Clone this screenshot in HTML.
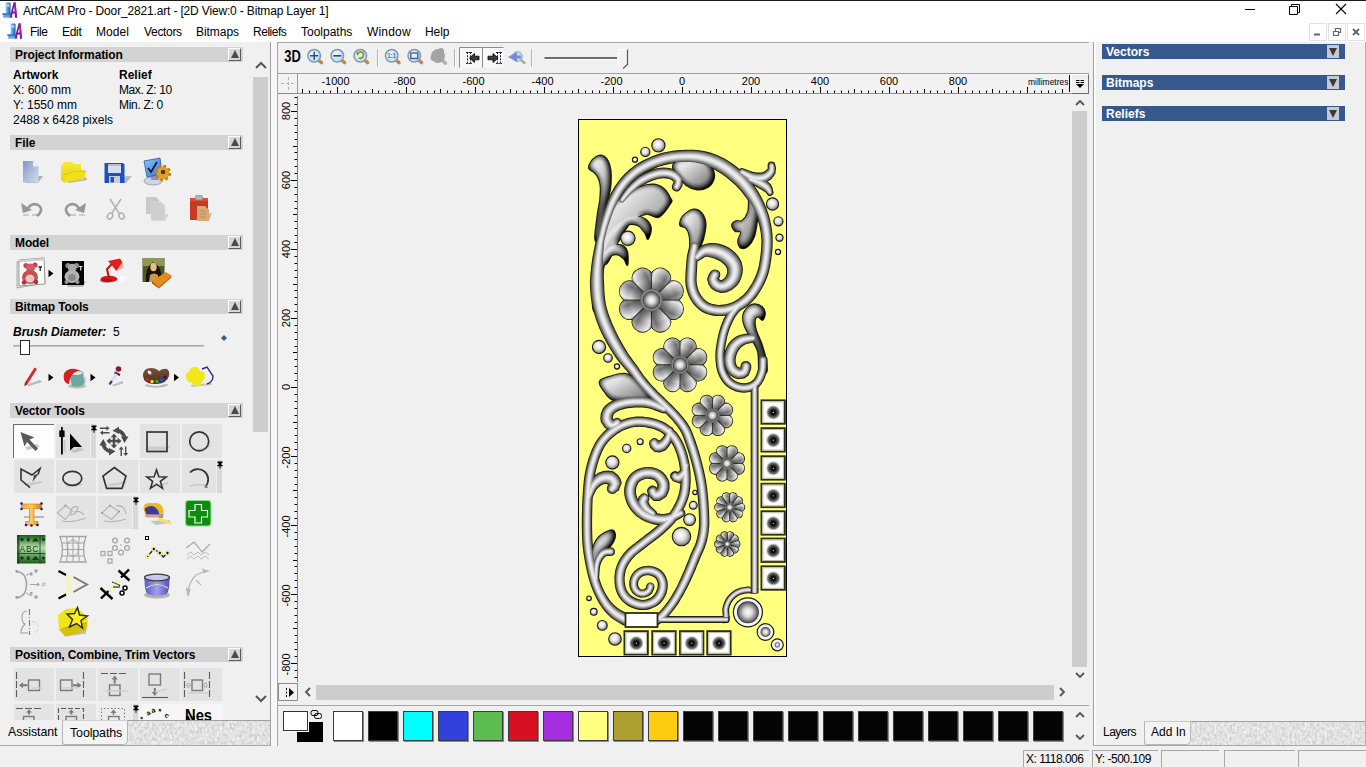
<!DOCTYPE html>
<html>
<head>
<meta charset="utf-8">
<title>ArtCAM Pro</title>
<style>
*{box-sizing:border-box;margin:0;padding:0}
html,body{width:1366px;height:767px;overflow:hidden;background:#f0f0f0;font-family:"Liberation Sans",sans-serif;font-size:12px;color:#000}
.abs{position:absolute}
#app{position:relative;width:1366px;height:767px;overflow:hidden;background:#f0f0f0}
#titlebar{left:0;top:0;width:1366px;height:22px;background:#fff;border-top:1px solid #1a1a1a}
#title{left:23px;top:4px;font-size:12px;white-space:nowrap;letter-spacing:-0.16px;color:#000}
#menubar{left:0;top:22px;width:1366px;height:20px;background:#fff}
.mi{position:absolute;top:25px;font-size:12px;white-space:nowrap}
/* left panel */
#left{left:0;top:42px;width:271px;height:704px;background:#f0f0f0;overflow:hidden}
.hdr{position:absolute;left:10px;width:233px;height:15px;background:#d3d3d3;font-weight:bold;font-size:12px;line-height:17px;padding-left:5px;white-space:nowrap;letter-spacing:-0.12px;overflow:hidden}
.hbtn{position:absolute;left:228px;width:13px;height:13px;background:#d6d6d6;border-top:1px solid #fff;border-left:1px solid #fff;border-right:1px solid #5a5a5a;border-bottom:1px solid #5a5a5a}
.hbtn:after{content:"";position:absolute;left:1.5px;top:1px;border-left:4px solid transparent;border-right:4px solid transparent;border-bottom:8.5px solid #4a4a4a}
.t{position:absolute;white-space:nowrap;font-size:12px}
.b{font-weight:bold}
.cell{position:absolute;width:38px;height:33px;background:#e3e3e3}
.sb{background:#cdcdcd}
.pin{position:absolute;width:5px;background:#d8d8d8}
/* right panel */
.bbar{position:absolute;left:1102px;width:243px;height:15px;background:#36588c;color:#fff;font-weight:bold;font-size:12px;line-height:17px;padding-left:4px;overflow:hidden}
.bbtn{position:absolute;left:1327px;width:12px;height:13px;background:#c3cad6}
.bbtn:after{content:"";position:absolute;left:2px;top:3px;border-left:4px solid transparent;border-right:4px solid transparent;border-top:8px solid #3a3a3a}
.sw{position:absolute;top:711px;width:30px;height:30px;border:1px solid #3c3c3c;box-shadow:1px 1px 0 #8a8a8a}
.stbox{position:absolute;top:750px;height:17px;border-left:1px solid #a8a8a8;border-top:1px solid #a8a8a8;font-size:12px;line-height:16px;padding-left:2px;white-space:nowrap;letter-spacing:-0.5px;overflow:hidden}
</style>
</head>
<body>
<div id="app">

<!-- TITLE BAR -->
<div id="titlebar" class="abs"></div>
<div id="title" class="abs">ArtCAM Pro - Door_2821.art - [2D View:0 - Bitmap Layer 1]</div>
<div id="menubar" class="abs"></div>
<!--APPICON-START-->
<svg width="0" height="0" style="position:absolute"><defs>
<linearGradient id="gMach" x1="0" y1="0" x2="1" y2="0"><stop offset="0" stop-color="#9ad8ec"/><stop offset=".5" stop-color="#3f8fd0"/><stop offset="1" stop-color="#2a5cb0"/></linearGradient>
<symbol id="appicon" viewBox="0 0 16 16">
 <rect x="3.600" y="0.500" width="5" height="12" rx="1.200" fill="url(#gMach)"/>
 <rect x="4.500" y="2.200" width="3" height="2.500" fill="#bfe6f2" opacity=".8"/>
 <rect x="0.300" y="11.200" width="9" height="1.800" fill="#3a78c8"/>
 <rect x="1.300" y="13" width="8" height="2.500" fill="#5aa0e0"/>
 <rect x="0.800" y="14.800" width="10" height="1" fill="#8ac4ee"/>
 <path d="M7.600 15.500 L11.600 0.200 L13.600 0.200 L15.200 15.800 L13 15.800 L12.700 11.500 L10.600 11.500 L9.800 15.500 Z M11 9.500 L12.600 9.500 L12.300 4.200 Z" fill="#7a1a9a" fill-rule="evenodd"/>
 <path d="M11.600 0.200 L13.600 0.200 L15.200 15.800 L14 15.800 Z" fill="#c020a0" opacity=".55"/>
</symbol>
</defs></svg>
<svg class="abs" style="left:2px;top:2px" width="16" height="16"><use href="#appicon"/></svg>
<svg class="abs" style="left:7px;top:23px" width="16" height="16"><use href="#appicon"/></svg>

<!--APPICON-END-->
<div class="mi" style="left:30px;letter-spacing:-0.46px">File</div>
<div class="mi" style="left:62px;letter-spacing:-0.30px">Edit</div>
<div class="mi" style="left:96px;letter-spacing:0.06px">Model</div>
<div class="mi" style="left:144px;letter-spacing:-0.32px">Vectors</div>
<div class="mi" style="left:196px;letter-spacing:-0.05px">Bitmaps</div>
<div class="mi" style="left:253px;letter-spacing:-0.47px">Reliefs</div>
<div class="mi" style="left:301px;letter-spacing:0.00px">Toolpaths</div>
<div class="mi" style="left:367px;letter-spacing:0.18px">Window</div>
<div class="mi" style="left:425px;letter-spacing:-0.05px">Help</div>

<svg class="abs" style="left:1230px;top:0" width="136" height="42" viewBox="0 0 136 42">
 <path d="M15 9.5H25" stroke="#000" stroke-width="1" fill="none"/>
 <path d="M59.5 6.5h8v8h-8z M61.5 6.5v-2h8v8h-2" stroke="#000" stroke-width="1" fill="none"/>
 <path d="M106 4l10 10M116 4l-10 10" stroke="#000" stroke-width="1.1" fill="none"/>
 <g fill="#fff" stroke="#e2e2e2"><rect x="79.5" y="23.5" width="17" height="17"/><rect x="98.500" y="23.5" width="17" height="17"/><rect x="117.5" y="23.5" width="17" height="17"/></g>
 <path d="M84 34.500h6" stroke="#666" stroke-width="2" fill="none"/>
 <path d="M103.500 31.500h5v4h-5z M105.500 31v-2.500h5v4h-2" stroke="#666" stroke-width="1.2" fill="none"/>
 <path d="M123 29l6 6M129 29l-6 6" stroke="#666" stroke-width="1.8" fill="none"/>
</svg>


<!-- LEFT PANEL -->
<div id="left" class="abs">
<!--LEFTCONTENT-->
</div>
<!--LEFTEXTRA-START-->
<div class="hdr" style="top:47px">Project Information</div><div class="hbtn" style="top:48px"></div>
<div class="hdr" style="top:135px">File</div><div class="hbtn" style="top:136px"></div>
<div class="hdr" style="top:235px">Model</div><div class="hbtn" style="top:236px"></div>
<div class="hdr" style="top:299px">Bitmap Tools</div><div class="hbtn" style="top:300px"></div>
<div class="hdr" style="top:403px">Vector Tools</div><div class="hbtn" style="top:404px"></div>
<div class="hdr" style="top:647px">Position, Combine, Trim Vectors</div><div class="hbtn" style="top:648px"></div>
<div class="t b" style="left:13px;top:68px">Artwork</div>
<div class="t b" style="left:119px;top:68px">Relief</div>
<div class="t" style="left:13px;top:83px">X: 600 mm</div>
<div class="t" style="left:119px;top:83px;letter-spacing:-0.4px">Max. Z: 10</div>
<div class="t" style="left:13px;top:98px">Y: 1550 mm</div>
<div class="t" style="left:119px;top:98px;letter-spacing:-0.3px">Min. Z: 0</div>
<div class="t" style="left:13px;top:113px">2488 x 6428 pixels</div>
<div class="t b" style="left:13px;top:325px;font-style:italic">Brush Diameter:</div>
<div class="t" style="left:113px;top:325px">5</div>
<div class="abs" style="left:13px;top:345px;width:191px;height:2px;background:#c4c4c4;border-top:1px solid #aaa"></div>
<div class="abs" style="left:20px;top:340px;width:10px;height:15px;background:#fff;border:1px solid #2a2a2a"></div>
<svg class="abs" style="left:220px;top:334px" width="8" height="8"><path d="M4 1l3 3-3 3-3-3z" fill="#3a5a8a"/></svg>
<!-- left scrollbar -->
<div class="abs sb" style="left:253px;top:77px;width:15px;height:355px"></div>
<svg class="abs" style="left:253px;top:42px" width="16" height="680"><path d="M3 26l5-5 5 5M3 654l5 5 5-5" stroke="#555" stroke-width="2" fill="none"/></svg>

<!--LEFTEXTRA-END-->
<!--ICONS_FILE-START-->
<svg class="abs" style="left:0;top:0" width="271" height="767" viewBox="0 0 271 767">
<defs>
<linearGradient id="gDoc" x1="0" y1="0" x2="1" y2="1"><stop offset="0" stop-color="#7f97c4"/><stop offset=".6" stop-color="#b4c3dc"/><stop offset="1" stop-color="#d4dcea"/></linearGradient>
<linearGradient id="gFold" x1="0" y1="0" x2="0" y2="1"><stop offset="0" stop-color="#f6ea3a"/><stop offset="1" stop-color="#e6cf10"/></linearGradient>
<linearGradient id="gMon" x1="0" y1="0" x2="1" y2="1"><stop offset="0" stop-color="#7fd0f4"/><stop offset="1" stop-color="#3a6fd0"/></linearGradient>
<linearGradient id="gShadow" x1="0" y1="0" x2="1" y2="0"><stop offset="0" stop-color="#9a9a9a"/><stop offset="1" stop-color="#c8c8c8" stop-opacity=".6"/></linearGradient>
</defs>
<!-- new doc -->
<path d="M30 176l13 0-5 7-12 0z" fill="#b0b0b0"/>
<path d="M23 161h10l5.500 5.500v16h-15.500z" fill="url(#gDoc)"/>
<path d="M33 161l5.500 5.500h-5.500z" fill="#e8eef6"/>
<!-- folder -->
<path d="M66 181l20-4 1 3-18 3z" fill="#b4b4b4"/>
<path d="M61 166l3-4h8l2 2h7v6l5 1-2 8-20 3.500-3-3z" fill="url(#gFold)"/>
<path d="M64 175q10-5 22-4l-2 8-20 3.500z" fill="#f2df1c"/>
<path d="M64 175q10-5 22-4" stroke="#d8c000" stroke-width=".8" fill="none"/>
<!-- save -->
<path d="M112 177l20-1-6 7h-14z" fill="#b8b8b8"/>
<path d="M104.500 163h18.500l1.500 1.500v18.500h-20z" fill="#1c50c4"/>
<rect x="108" y="164" width="13" height="9" fill="#d8dfe8"/>
<rect x="108" y="164" width="13" height="2" fill="#b4bdcc"/>
<rect x="109" y="176" width="11" height="7" fill="#c8cdd6"/>
<rect x="110.500" y="177" width="3.500" height="5.500" fill="#1c50c4"/>
<!-- monitor/options -->
<ellipse cx="153" cy="181" rx="9" ry="4" fill="#d0d4e4" stroke="#8890b0" stroke-width=".8"/>
<path d="M151 172h7l1 8h-8z" fill="#8c8cc8"/>
<path d="M144 161l16-3 2 16-15 3z" fill="url(#gMon)" stroke="#3050a0" stroke-width=".8"/>
<path d="M148 168l3 4 6-10" stroke="#101040" stroke-width="1.600" fill="none"/>
<circle cx="163" cy="173" r="6.500" fill="#e0a020"/>
<circle cx="163" cy="173" r="7" fill="none" stroke="#c88010" stroke-width="2.500" stroke-dasharray="3 2.500"/>
<circle cx="163" cy="172" r="2.200" fill="#503000"/>
<!-- undo -->
<path d="M40 215h-8M23 215h6" stroke="#c0c0c0" stroke-width="1.500"/>
<path d="M27 210q4-8 11-5q5 3 2 8l-3 3" stroke="#979797" stroke-width="2.600" fill="none"/>
<path d="M21 203l2 10 9-3z" fill="#979797"/>
<!-- redo -->
<path d="M68 215h8M79 215h6" stroke="#c0c0c0" stroke-width="1.500"/>
<path d="M80 210q-4-8-11-5q-5 3-2 8l3 3" stroke="#979797" stroke-width="2.600" fill="none"/>
<path d="M86 203l-2 10-9-3z" fill="#979797"/>
<!-- scissors -->
<path d="M110 199l9 14M121 199l-9 14" stroke="#b4b4b4" stroke-width="1.600" fill="none"/>
<ellipse cx="110" cy="216" rx="2.500" ry="3.200" fill="none" stroke="#a8a8a8" stroke-width="1.300" transform="rotate(25 110 216)"/>
<ellipse cx="121.500" cy="216" rx="2.500" ry="3.200" fill="none" stroke="#a8a8a8" stroke-width="1.300" transform="rotate(-25 121.500 216)"/>
<!-- copy -->
<path d="M152 216l17-2-4 7h-12z" fill="#d2d2d2"/>
<path d="M146 197h10l3 3v14h-13z" fill="#c9c9c9"/>
<path d="M151 202h10l4 4v14h-14z" fill="#cfcfcf" stroke="#dcdcdc" stroke-width=".6"/>
<!-- paste -->
<path d="M198 216l14-3-3 8h-11z" fill="#b8b8b8"/>
<path d="M190 198h18v22h-18z" fill="#c43c22"/>
<path d="M190 198h18v3h-18z" fill="#d85038"/>
<rect x="195.500" y="195.500" width="7" height="4.500" rx="1" fill="#b0b4bc" stroke="#80848c" stroke-width=".6"/>
<path d="M197 206h8l4 4v11h-12z" fill="#d8a878"/>
<path d="M199 211h7M199 214h7M199 217h7" stroke="#b88858" stroke-width=".8"/>
</svg>

<!--ICONS_FILE-END-->
<!--ICONS_MODEL-START-->
<svg class="abs" style="left:0;top:0" width="271" height="767" viewBox="0 0 271 767">
<defs>
<radialGradient id="gLampSh" cx=".5" cy=".5" r=".5"><stop offset="0" stop-color="#fff"/><stop offset="1" stop-color="#fff" stop-opacity="0"/></radialGradient>
<linearGradient id="gPal" x1="0" y1="0" x2="0" y2="1"><stop offset="0" stop-color="#7a5038"/><stop offset="1" stop-color="#4a3020"/></linearGradient>
</defs>
<!-- bear paper -->
<path d="M17 262l26-4 2 25-28 5z" fill="#e4e4e4" stroke="#9a9a9a" stroke-width=".8"/>
<path d="M19 260l25-2 1 26-26 2z" fill="#fff" stroke="#8c8c8c" stroke-width=".9"/>
<path d="M19 260l25-2v2.500l-25 2z" fill="#d0d0d0"/>
<circle cx="26" cy="265.500" r="2.600" fill="#c04848"/><circle cx="35" cy="265" r="2.600" fill="#c04848"/>
<circle cx="30.500" cy="268" r="4.500" fill="#d06060"/>
<ellipse cx="30" cy="277" rx="8" ry="7" fill="#c85050"/>
<ellipse cx="30" cy="278.500" rx="4.500" ry="4" fill="#f4c4c4"/>
<circle cx="24" cy="282.500" r="2.200" fill="#b03030"/><circle cx="36" cy="282" r="2.200" fill="#b03030"/>
<path d="M38.500 267h3.500M40.200 267v4" stroke="#222" stroke-width="1.300"/>
<path d="M48.500 269.700l5 3.800-5 3.800z" fill="#000"/>
<!-- bw bear -->
<path d="M66 284l20-3-3 6h-15z" fill="#bdbdbd"/>
<rect x="62" y="261" width="22" height="24" fill="#050505"/>
<circle cx="68" cy="265.500" r="2.600" fill="#8e8e8e"/><circle cx="76.500" cy="265.500" r="2.600" fill="#8e8e8e"/>
<circle cx="72.200" cy="268" r="4.300" fill="#a8a8a8"/>
<ellipse cx="72" cy="276.500" rx="7.500" ry="6.500" fill="#b4b4b4"/>
<ellipse cx="72" cy="277.500" rx="3.800" ry="3.500" fill="#8a8a8a"/>
<circle cx="66.500" cy="282" r="2" fill="#9c9c9c"/><circle cx="77.500" cy="282" r="2" fill="#9c9c9c"/>
<path d="M79 266.500h3.500M80.700 266.500v4" stroke="#e0e0e0" stroke-width="1.200"/>
<!-- lamp -->
<ellipse cx="120" cy="279" rx="10" ry="4" fill="url(#gLampSh)"/>
<ellipse cx="109" cy="279" rx="8.500" ry="3.300" fill="#d81818"/>
<ellipse cx="106" cy="280.500" rx="6" ry="2" fill="#901010" opacity=".6"/>
<path d="M109 278l-2-9 5-5" stroke="#c01010" stroke-width="2" fill="none"/>
<path d="M108 261l12-2.500 2.500 4-6 8.500z" fill="#e02020"/>
<path d="M116.500 271l6-8.500 1.500 5z" fill="#f8b0a0"/>
<!-- mona lisa -->
<rect x="142.500" y="258" width="22" height="24" fill="#4e5a22"/>
<rect x="142.500" y="258" width="22" height="8" fill="#8e9858"/>
<path d="M146 282q-1-15 7-20q9 4 9 20z" fill="#1c120a"/>
<ellipse cx="153.500" cy="267" rx="3.200" ry="4.200" fill="#e8c078"/>
<path d="M150 275q4-3 8 0l1 7h-10z" fill="#c89850"/>
<path d="M152 281l14-9 5.500 3.500-13 11z" fill="#e88a18"/>
<path d="M152 281l6.500 5.500 .5 2-7-5z" fill="#a85808"/>
<path d="M158.500 286.500l13-11v2l-12.500 11z" fill="#c06a10"/>
<!-- pencil -->
<path d="M26 385l14-5 2 2-13 4z" fill="#b8b8b8"/>
<path d="M34.500 367.500l2.500 1.500-9.500 15-3 2 .5-3.500z" fill="#dc2828"/>
<path d="M24.500 386l.5-3.500 2.500 1.500z" fill="#5a3a2a"/>
<path d="M48.500 373.700l5 3.800-5 3.800z" fill="#000"/>
<!-- bucket -->
<ellipse cx="77" cy="386" rx="9" ry="2.500" fill="#bcbcbc"/>
<path d="M69 374l14-2 2 12q-6 4-13 2z" fill="#6aa8a0"/>
<ellipse cx="76" cy="373" rx="7" ry="2.500" fill="#d8e8e4" stroke="#5a8a84" stroke-width=".7"/>
<path d="M64 380q-2-9 6-11q6-1 10 2q-5 0-8 4t-3 9q-3 0-5-4z" fill="#d42020"/>
<path d="M83 376q4 3 1 9" stroke="#c8c8c8" stroke-width="1.200" fill="none"/>
<path d="M90.500 373.700l5 3.800-5 3.800z" fill="#000"/>
<!-- eyedropper -->
<path d="M112 385l11-4v2.500l-10 3z" fill="#bcbcbc"/>
<circle cx="118.500" cy="369" r="2.800" fill="#8a1838"/>
<path d="M114.500 372.500l5.500 2.500" stroke="#701030" stroke-width="2.200"/>
<path d="M116.500 374l-5.500 8" stroke="#d8dcf0" stroke-width="3"/>
<path d="M111.800 381l-2.300 3.500" stroke="#2a2a90" stroke-width="2.200"/>
<!-- palette -->
<path d="M146 384q8 4 20 0l3 1q-10 5-24 1z" fill="#b4b4b4"/>
<path d="M143 376q0-8 8-8q5 0 8 3q4-3 8-2q3 2 2 7q-2 7-12 8q-13 1-14-8z" fill="url(#gPal)"/>
<ellipse cx="149.500" cy="372.500" rx="2.200" ry="1.500" fill="#f0f0f0" transform="rotate(40 149.500 372.500)"/>
<circle cx="147.500" cy="379.500" r="1.700" fill="#d02020"/><circle cx="152" cy="381.500" r="1.700" fill="#e8e020"/><circle cx="157" cy="381.500" r="1.700" fill="#30b030"/><circle cx="161.500" cy="380" r="1.700" fill="#2050d0"/><circle cx="165" cy="377" r="1.600" fill="#102080"/>
<path d="M174 373.700l5 3.800-5 3.800z" fill="#000"/>
<!-- yellow blob + lasso -->
<path d="M190 385l22-2v2l-20 2z" fill="#c4c4c4"/>
<path d="M202 369l5-2 6 9q0 6-6 8" stroke="#2a2a8a" stroke-width="1.400" fill="none"/>
<path d="M186 377q-1-4 3-5q1-5 6-5q4 0 5 4q5 0 5 5q0 4-3 5q0 5-5 5q-4 0-5-3q-6-1-6-6z" fill="#f0e81c"/>
</svg>

<!--ICONS_MODEL-END-->
<!--ICONS_VEC-START-->
<!-- cell backgrounds -->
<div class="abs" style="left:13px;top:424px;width:41px;height:34px;background:#fdfdfd;border-top:1px solid #6e6e6e;border-left:1px solid #6e6e6e"></div>
<div class="cell" style="left:56px;top:424px;width:34px;height:34px"></div><div class="pin" style="left:91px;top:424px;height:34px"></div>
<div class="cell" style="left:140px;top:424px;width:40px;height:34px"></div>
<div class="cell" style="left:182px;top:424px;width:40px;height:34px"></div>
<div class="cell" style="left:14px;top:460px;width:40px;height:33px"></div>
<div class="cell" style="left:56px;top:460px;width:40px;height:33px"></div>
<div class="cell" style="left:98px;top:460px;width:40px;height:33px"></div>
<div class="cell" style="left:140px;top:460px;width:40px;height:33px"></div>
<div class="cell" style="left:182px;top:460px;width:34px;height:33px"></div><div class="pin" style="left:217px;top:460px;height:33px"></div>
<div class="cell" style="left:56px;top:496px;width:40px;height:33px;background:#e4e4e4"></div>
<div class="cell" style="left:98px;top:496px;width:34px;height:33px;background:#e4e4e4"></div><div class="pin" style="left:133px;top:496px;height:33px"></div>
<svg class="abs" style="left:0;top:0" width="271" height="767" viewBox="0 0 271 767">
<defs>
<linearGradient id="gT" x1="0" y1="0" x2="1" y2="0"><stop offset="0" stop-color="#f8a828"/><stop offset=".5" stop-color="#ffc860"/><stop offset="1" stop-color="#d87808"/></linearGradient>
<linearGradient id="gABC" x1="0" y1="0" x2="0" y2="1"><stop offset="0" stop-color="#1a5a1a"/><stop offset=".45" stop-color="#b8e0b0"/><stop offset="1" stop-color="#1a5a1a"/></linearGradient>
<linearGradient id="gDish" x1="0" y1="0" x2="1" y2="0"><stop offset="0" stop-color="#5a5ac8"/><stop offset=".5" stop-color="#a0a0f0"/><stop offset="1" stop-color="#5050b8"/></linearGradient>
<symbol id="pin" viewBox="0 0 6 8"><path d="M0.500 0.500h5v1.500h-1v2h1.200v1.200h-2.200v2.500h-1v-2.500h-2.200v-1.200h1.200v-2h-1z" fill="#000"/></symbol>
</defs>
<use href="#pin" x="91" y="425" width="6" height="8"/>
<use href="#pin" x="217" y="461" width="6" height="8"/>
<use href="#pin" x="133" y="497" width="6" height="8"/>
<!-- r1: select arrow -->
<path d="M25 447l12-3 3 3-13 3z" fill="#c8c8c8"/>
<path d="M20.500 432l14 5.500-5 2 8.500 9-2.500 2.500-8.500-9-2.500 4.500z" fill="#5a5a5a"/>
<!-- r1: node edit -->
<path d="M70 451l10-4 4 3-10 3z" fill="#c4c4c4"/>
<path d="M64.500 440v12" stroke="#c8c8c8" stroke-width="2"/>
<path d="M61.900 427v27.600" stroke="#000" stroke-width="1.800"/>
<rect x="59.300" y="430.500" width="5.300" height="6.500" fill="#000"/>
<path d="M70 433.500v17l4-3.500h8z" fill="#000"/>
<!-- r1: transform -->
<g fill="none" stroke="#4c4c4c" stroke-width="3.600">
<path d="M117.500 430.300a11 11 0 0 1 7.200 7.200"/>
<path d="M110.300 451.700a11 11 0 0 1-7.200-7.200"/>
</g>
<g fill="#4c4c4c">
<path d="M119 426.500v7.500l-6.500-3.200zM128.500 436.500h-7.500l3.500 6.500zM109 455.500v-7.500l6.500 3.200zM99.300 445.500h7.500l-3.500-6.500z"/>
<path d="M114 433.500l3.300 3.800h-2.100v2.500h2.500v-2.100l3.800 3.300-3.800 3.300v-2.100h-2.500v2.500h2.100l-3.300 3.800-3.300-3.800h2.100v-2.500h-2.500v2.100l-3.800-3.300 3.800-3.300v2.100h2.500v-2.500h-2.100z"/>
<path d="M100 429h6.500v-1.800l3 2.500-3 2.500v-1.800h-6.500zM109.500 433.500h-6.500v-1.800l-3 2.500 3 2.500v-1.800h6.500z" transform="translate(0 -1.500)"/>
<path d="M121.500 456v-6.500h-1.800l2.500-3 2.500 3h-1.800v6.500zM126 446.500v6.500h-1.800l2.500 3 2.500-3h-1.800v-6.500z" transform="translate(-1 0)"/>
</g>
<!-- r1: square, circle -->
<path d="M148 446.500h18l4-1.500v3l-5 2h-17z" fill="#cdcdcd"/>
<rect x="147" y="432" width="20" height="19.500" fill="none" stroke="#333" stroke-width="1.700"/>
<path d="M192 448q8 3 17-3l2 1q-8 6-19 3z" fill="#c8c8c8"/>
<circle cx="199.200" cy="441.300" r="9.500" fill="none" stroke="#333" stroke-width="1.700"/>
<!-- r2 -->
<path d="M24 484l18-3v2l-14 3z" fill="#c8c8c8"/>
<path d="M30 487.600l-9-7.600v-11l11 6 8-6.500-2 6" fill="none" stroke="#333" stroke-width="1.600"/>
<path d="M38.500 474l-6 8 1.500-7z" fill="#444"/>
<path d="M66 486q8 1 16-3v2q-8 3-16 2z" fill="#cacaca"/>
<ellipse cx="72.300" cy="478.300" rx="9.500" ry="7" fill="none" stroke="#333" stroke-width="1.700"/>
<path d="M108 484q8 0 16-3l3 1q-8 4-19 4z" fill="#cacaca"/>
<path d="M114.300 467.500l11.700 8.500-4 12.400h-15.400l-3.600-12.400z" fill="none" stroke="#333" stroke-width="1.700"/>
<path d="M150 486q8 0 18-4v2q-8 3-18 3z" fill="#cacaca"/>
<path transform="translate(156.500 479.600) scale(0.880) translate(-156.500 -479.600)" d="M156.500 468.500l2.700 7.800 8.300.2-6.600 5 2.400 8-6.800-4.700-6.800 4.700 2.400-8-6.600-5 8.300-.2z" fill="none" stroke="#333" stroke-width="1.800"/>
<path d="M190 486q6-2 14-1l3 2" stroke="#c8c8c8" stroke-width="1.500" fill="none"/>
<path d="M190 472.500a9.500 9.500 0 1 1 15.500 14" fill="none" stroke="#333" stroke-width="1.700"/>
<path d="M206.500 484.500l1.500 3.500-4-.5z" fill="#777"/>
<!-- r3: T -->
<path d="M24 517h20" stroke="#b8b8b8" stroke-width="2"/>
<path d="M21.500 504h20v4.500h-7.500v13h4v3.500h-12.500v-3.500h4v-13h-8z" fill="url(#gT)" stroke="#c87808" stroke-width=".6"/>
<g fill="#1a1a90"><circle cx="21.500" cy="503.500" r="1.300"/><circle cx="41.500" cy="503.500" r="1.300"/><circle cx="21.500" cy="509" r="1.300"/><circle cx="41.500" cy="509" r="1.300"/><circle cx="26" cy="525" r="1.300"/><circle cx="37.500" cy="525" r="1.300"/><circle cx="31.500" cy="525.500" r="1.200"/></g>
<!-- r3: faded -->
<g fill="none" stroke="#b4b4b4" stroke-width="1.100">
<path d="M57.500 513l8-7.500 7 5.500-7.500 8.500z"/><path d="M70 513q2-8 8-6q-1 8-8 8"/><path d="M62 521q10 2 24-3"/><path d="M74 512q6-2 10 3"/>
<path d="M102 513l8-7.500 9 6-7.500 8z"/><path d="M116 506q8-2 10 8"/><path d="M104 521q10 2 22-2"/>
</g>
<circle cx="65.500" cy="505.500" r="1" fill="#999"/><circle cx="110" cy="505.500" r="1" fill="#999"/><circle cx="119" cy="511.500" r="1" fill="#999"/><circle cx="102" cy="513" r="1" fill="#999"/>
<!-- r3: tape -->
<path d="M150 521l20-1v3l-14 2z" fill="#c4c4c4"/>
<path d="M143.500 508q0-5 6-5h8q6 2 6 9v5h-18z" fill="#f0b820"/>
<path d="M144.500 509q2-3 8-3q6 2 7 9l-13-.5z" fill="#3a3aa0"/>
<path d="M145.500 514.500h17v3h-17z" fill="#d8a090"/>
<path d="M159 517l12 5v2.500l-14-4z" fill="#f4e070"/>
<rect x="159" y="514" width="4" height="4" fill="#9a9a9a"/>
<!-- r3: green cross -->
<rect x="185.500" y="500.500" width="25.500" height="25.500" rx="3" fill="#0e8c0e" stroke="#8ae08a" stroke-width="1.200"/>
<path d="M195 504.500h6.500v6h6v6.500h-6v6h-6.500v-6h-6v-6.500h6z" fill="none" stroke="#e8ffe8" stroke-width="1.200"/>
<!-- r4: ABC -->
<rect x="17" y="535" width="28.500" height="28.500" fill="url(#gABC)"/>
<rect x="17" y="535" width="2.500" height="28.500" fill="#0c3c0c" opacity=".7"/>
<path d="M17 553.500h28.500M40 535v28.500" stroke="#0c400c" stroke-width=".8"/>
<g fill="#0c400c"><circle cx="22" cy="539.500" r="1.700"/><rect x="27" y="537.800" width="2.600" height="3.600"/><path d="M32 541.500l3.500-4 3.500 4z"/><circle cx="22" cy="558" r="1.700"/><rect x="27" y="556.300" width="2.600" height="3.600"/><path d="M32 560l3.500-4 3.500 4z"/><circle cx="43.500" cy="539.500" r="1.500"/><circle cx="43.500" cy="558" r="1.500"/></g>
<text x="19.500" y="551.500" font-family="Liberation Sans, sans-serif" font-size="8.500" fill="#0c400c" textLength="19">ABC</text>
<!-- r4: grid distort -->
<g fill="none" stroke="#a4a4a4" stroke-width="1">
<path d="M60 536.500h26q-5 13 0 25.500h-26q5-12.500 0-25.500z" stroke-width="1.300"/>
<path d="M62 543h22M62.500 549.500h21M62 556h22M66.500 536.500q3 13 0 25.500M73 536.500v25.500M79.500 536.500q-3 13 0 25.500"/>
<ellipse cx="73" cy="548" rx="6" ry="8"/>
</g>
<!-- r4: squares/circles -->
<g fill="none" stroke="#a8a8a8" stroke-width="1.300">
<rect x="101" y="551.500" width="4" height="4"/><rect x="108" y="551.500" width="4" height="4"/><rect x="108" y="559" width="4" height="4"/>
<circle cx="115" cy="540.500" r="2.400"/><circle cx="127" cy="540.500" r="2.400"/><circle cx="115" cy="548" r="2.400"/><circle cx="127" cy="548" r="2.400"/><circle cx="121" cy="552.500" r="2.400"/>
</g>
<circle cx="121" cy="545" r=".8" fill="#a8a8a8"/>
<!-- r4: node path -->
<rect x="145.500" y="536.500" width="3" height="3" fill="#fff" stroke="#000" stroke-width="1"/>
<path d="M147.700 556.400l6.100-7.400 6 4 3.500 4 4.200-4" fill="none" stroke="#222" stroke-width="1.400"/>
<g fill="#f4f4b0" stroke="#d8d880" stroke-width=".5"><circle cx="147.700" cy="556.400" r="2.600"/><circle cx="153.800" cy="549" r="2.600"/><circle cx="159.800" cy="553" r="2.600"/><circle cx="167.500" cy="553" r="2.600"/></g>
<g fill="#000"><circle cx="147.700" cy="556.400" r=".7"/><path d="M153.800 547.500l1.500 1.500-1.500 1.500-1.500-1.500zM159.800 551.500l1.500 1.500-1.500 1.500-1.500-1.500zM167.500 551.500l1.500 1.500-1.500 1.500-1.500-1.500z"/></g>
<!-- r4: faded -->
<g fill="none" stroke="#bcbcbc" stroke-width="1">
<path d="M186 548l8-6 5 6 3 4 8-8" stroke="#a8a8a8" stroke-width="1.200"/><path d="M187 555l4-3 3 3 4-3 3 3 4-3 4 3M187 559l4-3 3 3 4-3 3 3 4-3 4 3"/>
</g>
<!-- r5 -->
<g fill="none" stroke="#a4a4a4" stroke-width="1.500">
<path d="M16.500 571.500q10 1 10 13t-10 13.500"/><path d="M26 575.500l6-3M26 593l6 3" stroke-width="1"/><path d="M30 584.500h8" stroke-width="1"/>
</g>
<g fill="#a0a0a0"><rect x="34.500" y="569.500" width="3" height="3"/><rect x="30" y="573" width="2.500" height="2.500"/><rect x="34.500" y="595.500" width="3" height="3"/><rect x="30" y="592" width="2.500" height="2.500"/><rect x="15.500" y="570" width="2.500" height="2.500"/><rect x="15.500" y="596" width="2.500" height="2.500"/><path d="M37 582.500l3 2-3 2z"/></g>
<rect x="42.500" y="583" width="2.500" height="2.500" fill="none" stroke="#b0b0b0" stroke-width=".8"/>
<!-- fillet -->
<path d="M66 575q8 10 0 19" fill="none" stroke="#f4f4b8" stroke-width="3.500"/>
<path d="M58.500 571l7.500 4M58.500 598.500l7.500-4" stroke="#000" stroke-width="2.200"/>
<path d="M73.500 577l13.500 7.500-13.500 7.500" fill="none" stroke="#7a7a7a" stroke-width="2"/>
<!-- trim -->
<path d="M109 592l10-12" stroke="#f4f4b8" stroke-width="4"/>
<path d="M100.500 588l12 11M118.500 570.500l11 10M101 598.500l7.500-7.500M121 577.500l8-8" stroke="#000" stroke-width="2.400"/>
<path d="M112 582l8 3.500M113 587h7" stroke="#000" stroke-width="1.200"/><path d="M112.500 582.500l6.500 3" stroke="#fff" stroke-width=".6"/>
<circle cx="125" cy="588" r="2" fill="#fff" stroke="#000" stroke-width="1.500"/><circle cx="122" cy="593" r="2" fill="#fff" stroke="#000" stroke-width="1.500"/>
<!-- dish -->
<ellipse cx="157" cy="595" rx="13" ry="3.500" fill="#b4b4b4"/>
<path d="M144.500 578q0 14 3 16q9 4 19 0q3-2 3-16z" fill="url(#gDish)"/>
<ellipse cx="157" cy="577.500" rx="12.500" ry="3.300" fill="#c8c8e8" stroke="#3a3a48" stroke-width="1.300"/>
<path d="M146 588q11-7 22 0" fill="none" stroke="#e0e0a0" stroke-width="1.200"/>
<!-- faded arrow curve -->
<g fill="none" stroke="#b8b8b8" stroke-width="1.300"><path d="M188 592q1-10 8-17"/><path d="M196 575l10-4M196 580l5 5"/><path d="M186.500 588l1.500 8 2-7" fill="#b8b8b8"/><path d="M203 569.500l5 1.500-4 1.500z" fill="#b8b8b8"/></g>
<!-- r6 mirror -->
<g fill="none" stroke="#9c9c9c" stroke-width="1.100"><path d="M27 611q-5 0-5 6t3 7q-4 4-4 9h7"/><path d="M29.500 609v26" stroke-dasharray="6 2 1 2" stroke="#777"/><path d="M32 622q6-1 6 5t-5 5" stroke="#d0d0d0" stroke-dasharray="2 1.500"/></g>
<!-- star folder -->
<path d="M64 634l22-3v2.500l-20 3z" fill="#bdbdbd"/>
<path d="M58 615l8-6 12-1 10 10-1 12-22 6-6-6z" fill="#f0e418"/>
<path d="M60 630q12-6 27-7l-1 8-21 5.500z" fill="#d8c010"/>
<path d="M60 630q12-6 27-7" stroke="#b8a008" stroke-width=".8" fill="none"/>
<path d="M77.500 607.500l2 7.500 8 1-6.500 4.500 1.500 7.500-6-4.500-7 3.500 3-7.500-5.500-5.500 7.500-.5z" fill="#f8f020" stroke="#2a2a2a" stroke-width="1.400"/>
</svg>

<!--ICONS_VEC-END-->
<!--ICONS_POS-START-->
<div class="cell" style="left:14px;top:668px;width:40px;height:33px"></div>
<div class="cell" style="left:56px;top:668px;width:40px;height:33px"></div>
<div class="cell" style="left:98px;top:668px;width:40px;height:33px"></div>
<div class="cell" style="left:140px;top:668px;width:40px;height:33px"></div>
<div class="cell" style="left:182px;top:668px;width:40px;height:33px"></div>
<div class="cell" style="left:14px;top:704px;width:40px;height:20px"></div>
<div class="cell" style="left:56px;top:704px;width:40px;height:20px"></div>
<div class="cell" style="left:98px;top:704px;width:34px;height:20px;background:#ececec"></div><div class="pin" style="left:133px;top:704px;height:20px"></div>
<div class="abs" style="left:139px;top:704px;width:84px;height:20px;background:#f6f6f6"></div>
<svg class="abs" style="left:0;top:0" width="271" height="724" viewBox="0 0 271 724">
<use href="#pin" x="133" y="705" width="6" height="8"/>
<g fill="none" stroke="#7a7a7a" stroke-width="1.400">
<path d="M16.500 672v27" stroke-dasharray="7 2" stroke-width="1.100" stroke="#5a5a5a"/>
<rect x="28.500" y="680" width="11" height="10.500"/>
<path d="M83.500 672v27" stroke-dasharray="7 2" stroke-width="1.100" stroke="#5a5a5a"/>
<rect x="60.500" y="680" width="11.500" height="10.500"/>
<path d="M101 673.500h27" stroke-dasharray="7 2" stroke-width="1.100" stroke="#5a5a5a"/>
<rect x="109.500" y="685" width="10.500" height="10.500"/>
<path d="M142 697.500h26" stroke-width="1.100" stroke="#5a5a5a"/>
<rect x="149" y="674" width="11.500" height="11"/>
<path d="M184.500 672v27M209.500 672v27" stroke-dasharray="7 2" stroke-width="1.100" stroke="#5a5a5a"/>
<rect x="192" y="680" width="10.500" height="10.500"/>
<path d="M16 708.500h27" stroke-dasharray="7 2" stroke-width="1.100" stroke="#5a5a5a"/>
<rect x="23.500" y="716.500" width="10.500" height="10"/>
<path d="M58.500 720v-11.500h25v11.500" stroke-dasharray="5 2" stroke-width="1.100" stroke="#5a5a5a"/>
<rect x="66" y="716.500" width="10.500" height="10"/>
<path d="M101.500 720v-11.500h23v11.500" stroke-dasharray="1.500 2" stroke-width="1" stroke="#7a7a7a"/>
<rect x="108.500" y="716.500" width="10.500" height="10"/>
</g>
<g fill="#7a7a7a">
<path d="M19 685.300l4-3v2h4.500v2h-4.500v2z"/><path d="M81.500 685.300l-4-3v2h-4.500v2h4.500v2z"/>
<path d="M114.700 675.500l3 4h-2v4h-2v-4h-2z"/><path d="M154.800 696l3-4h-2v-4h-2v4h-2z"/>
<path d="M186 685.300l3.500-2.500v5zM191 685.300l-3.500-2.500v5zM208 685.300l-3.500-2.500v5zM203.500 685.300l3.500-2.500v5z"/>
<path d="M29 709.500l3 3h-2v2h-2v-2h-2z"/><path d="M71.300 709.500l3 3h-2v2h-2v-2h-2z"/>
<path d="M113.500 709.500l3 3.500h-2.300v2h-1.400v-2h-2.300z"/>
</g>
<g fill="none" stroke="#cfcfcf" stroke-width="1.500"><path d="M32 688h11M62 688h16M106 691h22M155 692l12-3M188 693h20"/></g>
<g font-family="Liberation Sans, sans-serif" font-weight="bold" fill="#000">
<text x="185" y="721" font-size="16" textLength="27" lengthAdjust="spacingAndGlyphs">Nes</text>
<text x="185" y="728" font-size="16" textLength="27" lengthAdjust="spacingAndGlyphs">Nes</text>
<text font-size="7" transform="translate(148 716) rotate(-35)">a</text><text font-size="7" transform="translate(152 713) rotate(-15)">a</text><text font-size="8" transform="translate(158 714) rotate(5)">*</text><text font-size="7" transform="translate(164 716) rotate(40)">c</text><text font-size="7" transform="translate(144 721) rotate(-60)">*</text>
</g>
</svg>

<!--ICONS_POS-END-->
<!--LEFTTABS-START-->
<svg class="abs" style="left:0;top:720px" width="1366" height="26">
<defs><filter id="tex" x="0" y="0" width="100%" height="100%" color-interpolation-filters="sRGB"><feTurbulence type="fractalNoise" baseFrequency="0.4 0.28" numOctaves="2" seed="7" result="n"/><feColorMatrix in="n" type="matrix" values="0 0 0 0 0  0 0 0 0 0  0 0 0 0 0  1.6 1.6 0 0 -1.05" result="a"/><feFlood flood-color="#f0f0f0" result="f"/><feComposite in="f" in2="a" operator="in" result="sp"/><feFlood flood-color="#cfcfcf" result="bg"/><feMerge><feMergeNode in="bg"/><feMergeNode in="sp"/></feMerge></filter></defs>
<rect x="0" y="0" width="271" height="26" filter="url(#tex)"/>
<rect x="1096" y="1" width="270" height="25" filter="url(#tex)"/>
<path d="M128 0.500H271" stroke="#a0a0a0"/>
<path d="M1191 1.500H1366" stroke="#a0a0a0"/>
</svg>
<div class="abs" style="left:0;top:720px;width:63px;height:26px;background:#f0f0f0;border-bottom-right-radius:6px"></div>
<div class="abs" style="left:62px;top:720px;width:66px;height:25px;background:#f4f4f4;border:1px solid #b4b4b4;border-top-color:#d0d0d0;border-bottom-right-radius:5px;border-bottom-left-radius:3px"></div>
<div class="t" style="left:8px;top:725px;font-size:12.4px;letter-spacing:-0.1px">Assistant</div>
<div class="t" style="left:70px;top:726px;font-size:12.4px;letter-spacing:-0.1px">Toolpaths</div>
<div class="abs" style="left:0;top:745px;width:271px;height:1px;background:#a8a8a8"></div>

<!--LEFTTABS-END-->

<!-- CENTER -->

<!--CENTER-START-->
<div class="abs" style="left:270px;top:42px;width:1px;height:704px;background:#a0a0a0"></div>
<div class="abs" style="left:271px;top:42px;width:6px;height:704px;background:#f8f8f8"></div>
<div class="abs" style="left:277px;top:42px;width:1px;height:704px;background:#a6a6a6"></div>
<div class="abs" style="left:277px;top:42px;width:812px;height:1px;background:#a6a6a6"></div>
<!--TOOLBAR-START-->
<svg class="abs" style="left:278px;top:43px" width="380" height="30" viewBox="278 43 380 30">
<defs>
<radialGradient id="gLens" cx=".4" cy=".35" r=".7"><stop offset="0" stop-color="#eef8fc"/><stop offset="1" stop-color="#b4d8ec"/></radialGradient>
<g id="mag"><path d="M4.500 4.500l2.800 2.300" stroke="#c88448" stroke-width="3.400" stroke-linecap="round"/><circle cx="0" cy="0" r="6.300" fill="url(#gLens)" stroke="#8496ac" stroke-width="1.500"/></g>
</defs>
<text x="284.300" y="62.300" font-family="Liberation Sans, sans-serif" font-weight="bold" font-size="16.500" textLength="16.500" lengthAdjust="spacingAndGlyphs" fill="#000">3D</text>
<use href="#mag" x="314.200" y="55.800"/><path d="M310.200 55.800h8M314.200 51.800v8" stroke="#1c4c8c" stroke-width="1.500"/>
<use href="#mag" x="337.300" y="55.800"/><path d="M333.300 55.800h8" stroke="#1c4c8c" stroke-width="1.600"/>
<use href="#mag" x="360.300" y="55.800"/><path d="M357.500 54.500q1-3.500 4-2.500q3 1.500 1.500 4.500q-1.500 2.500-4.500 1.500" fill="none" stroke="#8a9a20" stroke-width="1.700"/><path d="M356 52l4 .5-2.500 3.500z" fill="#8a9a20"/>
<path d="M377.500 49v17.500" stroke="#b4b4b4" stroke-width="1"/><path d="M378.500 49v17.500" stroke="#fafafa" stroke-width="1"/>
<use href="#mag" x="391.700" y="55.800"/><text x="387.200" y="58.300" font-family="Liberation Sans, sans-serif" font-weight="bold" font-size="6.500" fill="#5a7aa8" textLength="9">1:1</text>
<use href="#mag" x="414.300" y="55.800"/><rect x="410.800" y="53" width="7" height="5.500" fill="none" stroke="#3a5a90" stroke-width="1.300"/>
<path d="M443 61l2.500 2.200" stroke="#b0b0b0" stroke-width="3.500" stroke-linecap="round"/><circle cx="438" cy="56" r="7" fill="#a4a4a4"/><circle cx="433.500" cy="58" r="3" fill="#a4a4a4"/><circle cx="441" cy="51" r="3" fill="#a4a4a4"/>
<path d="M454.500 49v17.500M531.500 49v17.500" stroke="#b4b4b4" stroke-width="1"/><path d="M455.500 49v17.500M532.500 49v17.500" stroke="#fafafa" stroke-width="1"/>
<!-- toggled buttons -->
<rect x="459" y="47.500" width="23" height="20" fill="#f8f8f8"/><path d="M459.500 67.500v-20h22.500" fill="none" stroke="#8a8a8a" stroke-width="1"/>
<rect x="482" y="47.500" width="21.500" height="20" fill="#f8f8f8"/><path d="M482.500 67.500v-20h21" fill="none" stroke="#8a8a8a" stroke-width="1"/>
<g stroke="#222" stroke-width="1" fill="none"><path d="M467.500 52v12M470.500 52v12" stroke-dasharray="2 1.200"/><path d="M466 52.500h6M466 63.500h6" stroke-dasharray="1.500 1"/></g>
<path d="M469.500 58l5-4.500v2.700h4.500v3.600h-4.500v2.700z" fill="#3a3a3a" stroke="#000" stroke-width=".8"/>
<g stroke="#222" stroke-width="1" fill="none"><path d="M497.500 52v12M500.500 52v12" stroke-dasharray="2 1.200"/><path d="M496 52.500h6M496 63.500h6" stroke-dasharray="1.500 1"/></g>
<path d="M498 58l-5-4.500v2.700h-5v3.600h5v2.700z" fill="#3a3a3a" stroke="#000" stroke-width=".8"/>
<!-- blue arrow magnifier -->
<path d="M521 60l3.500 3" stroke="#b0a890" stroke-width="2.500" stroke-linecap="round"/>
<circle cx="517.500" cy="56.500" r="4.800" fill="#c4dcf0" stroke="#90a4c0" stroke-width="1"/>
<path d="M508 57l9-5v3.500l4 0v3l-4 0v3.500z" fill="#6a84d0" opacity=".9"/>
<!-- slider -->
<path d="M544.500 58h72.500" stroke="#6e6e6e" stroke-width="2"/><path d="M544.500 59.500h72.500" stroke="#fff" stroke-width="1"/>
<path d="M618.500 49.500h9v15l-4.500 4-4.500-4z" fill="#f2f2f2" stroke="#fff" stroke-width="1"/>
<path d="M627.500 49.500v15l-4.500 4" fill="none" stroke="#555" stroke-width="1.200"/>
</svg>

<!--TOOLBAR-END-->
<div class="abs" style="left:278px;top:73px;width:811px;height:1px;background:#a0a0a0"></div>
<div class="abs" style="left:278px;top:74px;width:811px;height:20px;background:#f2f2f2"></div>
<div class="abs" style="left:278px;top:93px;width:793px;height:1px;background:#8c8c8c"></div>
<div class="abs" style="left:278px;top:94px;width:20px;height:588px;background:#f2f2f2"></div>
<div class="abs" style="left:297px;top:74px;width:1px;height:20px;background:#9a9a9a"></div>
<svg class="abs" style="left:0;top:0" width="1366" height="767" font-family="Liberation Sans, sans-serif" font-size="11" fill="#000">
<path d="M302.5 93V89.0M309.5 93V90.5M316.5 93V90.5M323.5 93V90.5M330.5 93V90.5M337.5 93V87.0M344.5 93V90.5M351.5 93V90.5M358.5 93V90.5M365.5 93V90.5M372.5 93V89.0M378.5 93V90.5M385.5 93V90.5M392.5 93V90.5M399.5 93V90.5M406.5 93V87.0M413.5 93V90.5M420.5 93V90.5M427.5 93V90.5M434.5 93V90.5M440.5 93V89.0M447.5 93V90.5M454.5 93V90.5M461.5 93V90.5M468.5 93V90.5M475.5 93V87.0M482.5 93V90.5M489.5 93V90.5M496.5 93V90.5M503.5 93V90.5M510.5 93V89.0M516.5 93V90.5M523.5 93V90.5M530.5 93V90.5M537.5 93V90.5M544.5 93V87.0M551.5 93V90.5M558.5 93V90.5M565.5 93V90.5M572.5 93V90.5M578.5 93V89.0M585.5 93V90.5M592.5 93V90.5M599.5 93V90.5M606.5 93V90.5M613.5 93V87.0M620.5 93V90.5M627.5 93V90.5M634.5 93V90.5M641.5 93V90.5M648.5 93V89.0M654.5 93V90.5M661.5 93V90.5M668.5 93V90.5M675.5 93V90.5M682.5 93V87.0M689.5 93V90.5M696.5 93V90.5M703.5 93V90.5M710.5 93V90.5M716.5 93V89.0M723.5 93V90.5M730.5 93V90.5M737.5 93V90.5M744.5 93V90.5M751.5 93V87.0M758.5 93V90.5M765.5 93V90.5M772.5 93V90.5M779.5 93V90.5M786.5 93V89.0M792.5 93V90.5M799.5 93V90.5M806.5 93V90.5M813.5 93V90.5M820.5 93V87.0M827.5 93V90.5M834.5 93V90.5M841.5 93V90.5M848.5 93V90.5M854.5 93V89.0M861.5 93V90.5M868.5 93V90.5M875.5 93V90.5M882.5 93V90.5M889.5 93V87.0M896.5 93V90.5M903.5 93V90.5M910.5 93V90.5M917.5 93V90.5M924.5 93V89.0M930.5 93V90.5M937.5 93V90.5M944.5 93V90.5M951.5 93V90.5M958.5 93V87.0M965.5 93V90.5M972.5 93V90.5M979.5 93V90.5M986.5 93V90.5M992.5 93V89.0M999.5 93V90.5M1006.5 93V90.5M1013.5 93V90.5M1020.5 93V90.5M1027.5 93V87.0M1034.5 93V90.5M1041.5 93V90.5M1048.5 93V90.5M1055.5 93V90.5M1062.5 93V89.0" stroke="#000" stroke-width="1" fill="none"/>
<path d="M297.5 96V682" stroke="#808080" stroke-width="1"/>
<path d="M297 97.5H294.5M297 104.5H294.5M297 111.5H291.0M297 118.5H294.5M297 125.5H294.5M297 132.5H294.5M297 139.5H294.5M297 146.5H293.0M297 152.5H294.5M297 159.5H294.5M297 166.5H294.5M297 173.5H294.5M297 180.5H291.0M297 187.5H294.5M297 194.5H294.5M297 201.5H294.5M297 208.5H294.5M297 214.5H293.0M297 221.5H294.5M297 228.5H294.5M297 235.5H294.5M297 242.5H294.5M297 249.5H291.0M297 256.5H294.5M297 263.5H294.5M297 270.5H294.5M297 277.5H294.5M297 284.5H293.0M297 290.5H294.5M297 297.5H294.5M297 304.5H294.5M297 311.5H294.5M297 318.5H291.0M297 325.5H294.5M297 332.5H294.5M297 339.5H294.5M297 346.5H294.5M297 352.5H293.0M297 359.5H294.5M297 366.5H294.5M297 373.5H294.5M297 380.5H294.5M297 387.5H291.0M297 394.5H294.5M297 401.5H294.5M297 408.5H294.5M297 415.5H294.5M297 422.5H293.0M297 428.5H294.5M297 435.5H294.5M297 442.5H294.5M297 449.5H294.5M297 456.5H291.0M297 463.5H294.5M297 470.5H294.5M297 477.5H294.5M297 484.5H294.5M297 490.5H293.0M297 497.5H294.5M297 504.5H294.5M297 511.5H294.5M297 518.5H294.5M297 525.5H291.0M297 532.5H294.5M297 539.5H294.5M297 546.5H294.5M297 553.5H294.5M297 560.5H293.0M297 566.5H294.5M297 573.5H294.5M297 580.5H294.5M297 587.5H294.5M297 594.5H291.0M297 601.5H294.5M297 608.5H294.5M297 615.5H294.5M297 622.5H294.5M297 628.5H293.0M297 635.5H294.5M297 642.5H294.5M297 649.5H294.5M297 656.5H294.5M297 663.5H291.0M297 670.5H294.5M297 677.5H294.5" stroke="#000" stroke-width="1" fill="none"/>
<text x="335.5" y="85" text-anchor="middle">-1000</text><text x="404.5" y="85" text-anchor="middle">-800</text><text x="473.5" y="85" text-anchor="middle">-600</text><text x="542.5" y="85" text-anchor="middle">-400</text><text x="611.5" y="85" text-anchor="middle">-200</text><text x="682.0" y="85" text-anchor="middle">0</text><text x="751.0" y="85" text-anchor="middle">200</text><text x="820.0" y="85" text-anchor="middle">400</text><text x="889.0" y="85" text-anchor="middle">600</text><text x="958.0" y="85" text-anchor="middle">800</text><text transform="translate(290 664.5) rotate(-90)" text-anchor="middle">-800</text><text transform="translate(290 595.5) rotate(-90)" text-anchor="middle">-600</text><text transform="translate(290 526.5) rotate(-90)" text-anchor="middle">-400</text><text transform="translate(290 457.5) rotate(-90)" text-anchor="middle">-200</text><text transform="translate(290 387.0) rotate(-90)" text-anchor="middle">0</text><text transform="translate(290 318.0) rotate(-90)" text-anchor="middle">200</text><text transform="translate(290 249.0) rotate(-90)" text-anchor="middle">400</text><text transform="translate(290 180.0) rotate(-90)" text-anchor="middle">600</text><text transform="translate(290 111.0) rotate(-90)" text-anchor="middle">800</text>
<text x="1028" y="85" font-size="9" textLength="40.500" lengthAdjust="spacingAndGlyphs">millimetres</text>
<path d="M281 83.500h3M286 83.500h3M291 83.500h3M288.500 77v3M288.500 82v3M288.500 87v3" stroke="#b0b0b0" stroke-width="1"/>
</svg>
<div class="abs" style="left:1069px;top:75px;width:1px;height:17px;background:#000"></div>
<div class="abs" style="left:1071px;top:74px;width:18px;height:20px;background:#f0f0f0;border-top:1px solid #fcfcfc;border-left:1px solid #fcfcfc;border-right:1px solid #6e6e6e;border-bottom:1px solid #6e6e6e"></div>
<svg class="abs" style="left:1071px;top:74px" width="18" height="20"><path d="M5 6.500h8M5 8.500h8" stroke="#000" stroke-width="1" stroke-dasharray="3.500 1"/><path d="M5 10h8l-4 4z" fill="#000"/></svg>
<div class="abs" style="left:1071px;top:94px;width:18px;height:589px;background:#f0f0f0"></div>
<div class="abs sb" style="left:1072px;top:111px;width:15px;height:556px"></div>
<svg class="abs" style="left:1072px;top:94px" width="16" height="590"><path d="M4 11l4-4 4 4M4 579l4 4 4-4" stroke="#555" stroke-width="1.800" fill="none"/></svg>
<div class="abs" style="left:278px;top:683px;width:811px;height:22px;background:#f0f0f0"></div>
<div class="abs" style="left:278px;top:683px;width:20px;height:18px;background:#f2f2f2;border:1px solid #8c8c8c"></div>
<svg class="abs" style="left:278px;top:683px" width="20" height="18"><path d="M8.500 5v2M8.500 8.500v2M8.500 12v2" stroke="#000"/><path d="M11 5l5 4.500-5 4.500z" fill="#000"/></svg>
<div class="abs sb" style="left:316px;top:685px;width:738px;height:15px"></div>
<svg class="abs" style="left:298px;top:683px" width="790" height="18"><path d="M12 5l-4 4 4 4M762 5l4 4-4 4" stroke="#555" stroke-width="1.800" fill="none"/></svg>
<div class="abs" style="left:278px;top:705px;width:811px;height:1px;background:#a6a6a6"></div>
<div class="abs" style="left:578px;top:119px;width:209px;height:538px;background:#ffff80;border:1px solid #000"></div>

<!--CENTER-END-->
<!--ART-START-->
<svg class="abs" style="left:0;top:0" width="1366" height="767" viewBox="0 0 1366 767">
<defs>
<filter id="relT" x="570" y="110" width="230" height="560" filterUnits="userSpaceOnUse" color-interpolation-filters="sRGB">
<feGaussianBlur in="SourceAlpha" stdDeviation="2.1" result="b"/>
<feColorMatrix in="b" type="matrix" values="0 0 0 1.75 -0.68  0 0 0 1.75 -0.68  0 0 0 1.75 -0.68  0 0 0 0 1" result="l"/>
<feComposite in="l" in2="SourceAlpha" operator="in"/>
</filter>
<filter id="relL" x="570" y="110" width="230" height="560" filterUnits="userSpaceOnUse" color-interpolation-filters="sRGB">
<feGaussianBlur in="SourceAlpha" stdDeviation="3.6" result="b"/>
<feOffset in="b" dx="-1.5" dy="-1.5" result="bo"/>
<feColorMatrix in="bo" type="matrix" values="0 0 0 1.6 -0.5  0 0 0 1.6 -0.5  0 0 0 1.6 -0.5  0 0 0 0 1" result="l"/>
<feComposite in="l" in2="SourceGraphic" operator="arithmetic" k1="1" k2="0" k3="0" k4="0" result="m"/>
<feComposite in="m" in2="SourceAlpha" operator="in"/>
</filter>
<linearGradient id="gLeaf" x1="0" y1="0" x2="1" y2="1"><stop offset="0" stop-color="#f6f6f6"/><stop offset=".3" stop-color="#e0e0e0"/><stop offset=".62" stop-color="#a8a8a8"/><stop offset="1" stop-color="#5c5c5c"/></linearGradient>
<radialGradient id="gBall" cx=".45" cy=".42" r=".6"><stop offset="0" stop-color="#fff"/><stop offset=".45" stop-color="#e4e4e4"/><stop offset=".8" stop-color="#9a9a9a"/><stop offset="1" stop-color="#4a4a4a"/></radialGradient>
<radialGradient id="gSph" cx=".5" cy=".5" r=".5"><stop offset="0" stop-color="#fff"/><stop offset=".4" stop-color="#d8d8d8"/><stop offset=".85" stop-color="#6a6a6a"/><stop offset="1" stop-color="#2a2a2a"/></radialGradient>
<radialGradient id="gDot" cx=".5" cy=".5" r=".5"><stop offset="0" stop-color="#000"/><stop offset=".3" stop-color="#111"/><stop offset=".7" stop-color="#777"/><stop offset="1" stop-color="#fff" stop-opacity="0"/></radialGradient>
<linearGradient id="gPet" x1="0" y1="0" x2="0" y2="1"><stop offset="0" stop-color="#9a9a9a"/><stop offset=".14" stop-color="#e8e8e8"/><stop offset=".4" stop-color="#b4b4b4"/><stop offset=".72" stop-color="#707070"/><stop offset=".9" stop-color="#8a8a8a"/><stop offset="1" stop-color="#5a5a5a"/></linearGradient>
<radialGradient id="gFlo" cx=".5" cy=".5" r=".5"><stop offset="0" stop-color="#000" stop-opacity=".45"/><stop offset=".35" stop-color="#000" stop-opacity=".3"/><stop offset=".62" stop-color="#000" stop-opacity="0"/><stop offset=".8" stop-color="#fff" stop-opacity=".12"/><stop offset=".93" stop-color="#fff" stop-opacity=".4"/><stop offset="1" stop-color="#fff" stop-opacity=".1"/></radialGradient>
<g id="sq"><rect x="0" y="0" width="23.500" height="23.500" fill="#fff" stroke="#2e2e14" stroke-width="1.800"/><rect x="1.500" y="1.500" width="20.500" height="20.500" fill="none" stroke="#b8b8a0" stroke-width="1"/><circle cx="11.900" cy="12.100" r="8" fill="url(#gDot)"/><circle cx="11.900" cy="12.100" r=".6" fill="#fff"/></g>
</defs>
<defs>
<path id="t4" d="M738.0 306.0C736.8 307.5 733.2 311.3 731.0 315.0C728.8 318.7 726.6 323.5 725.0 328.0C723.4 332.5 722.3 337.3 721.5 342.0C720.7 346.7 719.9 351.2 720.0 356.0C720.1 360.8 720.3 366.5 722.0 371.0C723.7 375.5 726.4 380.2 730.0 383.0C733.6 385.8 739.4 387.9 743.7 388.0C748.0 388.1 753.0 386.2 756.0 383.5C759.0 380.8 760.8 375.9 762.0 372.0C763.2 368.1 762.8 362.0 763.0 360.0"/>
<path id="t6" d="M754.6 386.0C754.6 396.7 754.6 427.7 754.6 450.0C754.6 472.3 754.6 497.5 754.6 520.0C754.6 542.5 754.6 574.2 754.6 585.0"/>
<path id="t7" d="M754.6 585.0C754.6 585.8 755.7 589.2 754.6 590.0C753.5 590.8 750.4 589.6 748.0 589.8C745.6 590.0 742.7 590.3 740.3 591.2C737.9 592.0 735.5 593.4 733.5 595.1C731.6 596.7 729.8 598.8 728.5 601.0C727.2 603.3 726.3 606.2 725.8 608.4C725.4 610.6 726.0 612.1 726.0 614.0C726.0 615.9 726.7 618.6 726.0 619.5C725.3 620.4 722.7 619.5 722.0 619.5"/>
<path id="t8" d="M726.0 619.5C721.7 619.5 710.8 619.5 700.0 619.5C689.2 619.5 667.5 619.5 661.0 619.5"/>
<path id="lf0" d="M589.0 168.5C588.5 166.8 589.8 163.9 591.0 162.0C592.2 160.1 594.3 158.1 596.0 157.0C597.7 155.9 599.3 155.3 601.0 155.5C602.7 155.7 604.6 156.4 606.0 158.0C607.4 159.6 608.7 162.2 609.5 165.0C610.3 167.8 610.9 170.8 611.0 175.0C611.1 179.2 610.8 185.0 610.0 190.0C609.2 195.0 607.5 199.3 606.0 205.0C604.5 210.7 602.3 218.2 601.0 224.0C599.7 229.8 599.0 237.7 598.0 240.0C597.0 242.3 595.1 242.2 595.0 238.0C594.9 233.8 596.7 221.3 597.5 215.0C598.3 208.7 599.5 204.8 600.0 200.0C600.5 195.2 600.8 189.8 600.5 186.0C600.2 182.2 599.1 179.3 598.0 177.0C596.9 174.7 595.5 173.4 594.0 172.0C592.5 170.6 589.5 170.2 589.0 168.5Z"/>
<path id="lf1" d="M676.0 162.0C679.2 160.2 687.3 157.8 692.0 157.5C696.7 157.2 700.7 158.2 704.0 160.0C707.3 161.8 710.3 165.0 712.0 168.0C713.7 171.0 714.7 174.8 714.0 178.0C713.3 181.2 710.8 185.1 708.0 187.0C705.2 188.9 700.7 189.8 697.0 189.5C693.3 189.2 689.0 187.2 686.0 185.0C683.0 182.8 681.2 178.8 679.0 176.0C676.8 173.2 673.5 170.3 673.0 168.0C672.5 165.7 672.8 163.8 676.0 162.0Z"/>
<path id="lf2" d="M599.0 252.0C598.5 245.7 601.0 233.3 603.0 226.0C605.0 218.7 607.7 212.8 611.0 208.0C614.3 203.2 618.2 200.5 623.0 197.0C627.8 193.5 634.8 189.1 640.0 187.0C645.2 184.9 650.0 184.2 654.0 184.5C658.0 184.8 661.2 186.6 664.0 189.0C666.8 191.4 669.6 196.7 670.7 199.0C671.8 201.3 672.7 200.0 670.7 203.0C668.8 206.0 663.1 215.2 659.0 217.0C654.9 218.8 650.7 213.2 646.0 214.0C641.3 214.8 635.7 217.3 631.0 222.0C626.3 226.7 622.2 235.0 618.0 242.0C613.8 249.0 609.2 262.3 606.0 264.0C602.8 265.7 599.5 258.3 599.0 252.0Z"/>
<path id="lf3" d="M595.0 278.0C594.8 272.5 597.0 259.2 599.0 252.0C601.0 244.8 603.7 239.8 607.0 235.0C610.3 230.2 614.7 226.1 619.0 223.0C623.3 219.9 628.7 217.2 633.0 216.5C637.3 215.8 642.0 217.1 645.0 219.0C648.0 220.9 650.5 224.7 651.0 228.0C651.5 231.3 649.0 238.2 648.0 239.0C647.0 239.8 646.7 235.2 645.0 233.0C643.3 230.8 641.2 226.8 638.0 225.5C634.8 224.2 630.2 223.4 626.0 225.0C621.8 226.6 616.7 230.2 613.0 235.0C609.3 239.8 606.2 245.7 604.0 254.0C601.8 262.3 601.5 281.0 600.0 285.0C598.5 289.0 595.2 283.5 595.0 278.0Z"/>
<path id="lf4" d="M593.0 308.0C592.2 302.8 593.7 285.3 595.0 277.0C596.3 268.7 598.7 262.9 601.0 258.0C603.3 253.1 605.8 249.7 609.0 247.5C612.2 245.3 617.0 244.4 620.0 245.0C623.0 245.6 625.8 247.7 627.0 251.0C628.2 254.3 628.0 263.7 627.5 265.0C627.0 266.3 625.7 260.8 624.0 259.0C622.3 257.2 619.9 254.8 617.5 254.5C615.1 254.2 611.9 254.4 609.5 257.0C607.1 259.6 604.6 261.5 603.0 270.0C601.4 278.5 601.7 301.7 600.0 308.0C598.3 314.3 593.8 313.2 593.0 308.0Z"/>
<path id="lf5" d="M750.0 194.0C748.3 195.3 749.3 207.5 748.0 212.0C746.7 216.5 744.0 219.5 742.0 221.0C740.0 222.5 737.7 220.3 736.0 221.0C734.3 221.7 732.2 223.3 732.0 225.0C731.8 226.7 733.5 229.8 735.0 231.0C736.5 232.2 740.5 230.3 741.0 232.0C741.5 233.7 738.0 238.3 738.0 241.0C738.0 243.7 739.3 247.2 741.0 248.0C742.7 248.8 745.8 247.8 748.0 246.0C750.2 244.2 752.5 241.0 754.0 237.0C755.5 233.0 756.3 227.5 757.0 222.0C757.7 216.5 759.2 208.7 758.0 204.0C756.8 199.3 751.7 192.7 750.0 194.0Z"/>
<path id="lf6" d="M680.0 225.0C679.5 223.0 680.8 218.6 683.0 216.0C685.2 213.4 690.3 209.9 693.5 209.5C696.7 209.1 700.0 211.1 702.0 213.5C704.0 215.9 705.4 219.9 705.6 224.0C705.9 228.1 704.5 233.8 703.5 238.0C702.5 242.2 700.6 245.7 699.5 249.0C698.4 252.3 698.6 256.5 697.0 258.0C695.4 259.5 691.2 259.8 690.0 258.0C688.8 256.2 690.1 250.7 690.0 247.0C689.9 243.3 690.2 239.2 689.5 236.0C688.8 232.8 687.6 229.8 686.0 228.0C684.4 226.2 680.5 227.0 680.0 225.0Z"/>
<path id="lf7" d="M599.7 381.3C601.0 378.8 607.8 377.3 612.0 376.0C616.2 374.7 621.0 373.0 625.0 373.7C629.0 374.4 631.5 375.6 636.0 380.0C640.5 384.4 652.7 396.4 652.0 400.0C651.3 403.6 638.5 401.5 632.0 401.5C625.5 401.5 617.7 401.8 613.0 400.0C608.3 398.2 606.2 394.1 604.0 391.0C601.8 387.9 598.4 383.8 599.7 381.3Z"/>
<path id="lf8" d="M591.0 568.0C590.1 565.0 591.2 555.2 592.5 550.0C593.8 544.8 595.8 540.3 599.0 537.0C602.2 533.7 609.3 530.2 612.0 530.2C614.7 530.2 615.4 534.2 615.0 537.0C614.6 539.8 611.8 544.2 609.5 547.0C607.2 549.8 602.9 550.5 601.0 554.0C599.1 557.5 599.7 565.7 598.0 568.0C596.3 570.3 591.9 571.0 591.0 568.0Z"/>
<path id="lf9" d="M759.5 372.0C758.1 368.7 759.4 357.7 758.0 352.0C756.6 346.3 753.2 342.3 751.0 338.0C748.8 333.7 745.8 329.7 744.5 326.0C743.2 322.3 742.6 319.0 743.0 316.0C743.4 313.0 745.1 310.0 747.0 308.0C748.9 306.0 751.8 304.4 754.3 304.2C756.8 304.0 760.2 305.5 762.0 307.0C763.8 308.5 764.9 310.8 765.0 313.0C765.1 315.2 763.7 319.4 762.5 320.0C761.3 320.6 759.2 316.5 758.0 316.5C756.8 316.5 755.3 317.8 755.0 320.0C754.7 322.2 754.8 325.8 756.0 330.0C757.2 334.2 760.3 340.0 762.0 345.0C763.7 350.0 765.2 355.5 766.0 360.0C766.8 364.5 767.6 370.0 766.5 372.0C765.4 374.0 760.9 375.3 759.5 372.0Z"/>
</defs>
<g fill="none" stroke="#1c1c0a" stroke-linecap="round" stroke-linejoin="round">
<use href="#t4" stroke-width="9.3"/>
<use href="#t6" stroke-width="7.8"/>
<use href="#t7" stroke-width="6.8"/>
<use href="#t8" stroke-width="6.8"/>
</g>
<g fill="#1c1c0a" stroke="#1c1c0a" stroke-width="1.8" stroke-linejoin="round">
<use href="#lf0"/>
<use href="#lf1"/>
<use href="#lf2"/>
<use href="#lf3"/>
<use href="#lf4"/>
<use href="#lf5"/>
<use href="#lf6"/>
<use href="#lf7"/>
<use href="#lf8"/>
<use href="#lf9"/>
<path stroke="none" d="M596.6 237.4L596.2 239.0L595.7 241.2L595.1 243.8L594.5 246.8L593.8 249.9L593.2 253.2L592.6 256.4L592.1 259.5L591.8 262.0L591.4 264.7L591.1 267.3L590.8 270.0L590.5 272.7L590.3 275.4L590.1 278.2L589.9 280.9L589.9 283.7L590.0 286.4L590.1 289.1L590.3 291.8L590.5 294.5L590.8 297.3L591.2 300.1L591.6 302.9L592.1 305.7L592.8 308.5L593.5 311.4L594.2 314.1L595.1 316.9L596.0 319.7L597.0 322.4L598.0 325.1L599.1 327.9L600.3 330.6L601.5 333.3L602.8 335.8L604.1 338.3L605.5 340.9L606.9 343.4L608.4 346.0L609.9 348.5L611.4 350.9L612.8 353.2L614.2 355.4L615.6 357.4L617.6 360.3L619.6 362.8L621.5 365.1L623.4 367.3L625.1 369.2L626.8 371.1L628.3 372.9L629.9 375.0L631.4 377.1L632.9 379.1L634.4 381.1L636.0 383.3L637.8 385.5L639.5 387.4L641.3 389.3L643.1 391.2L644.9 393.1L646.7 395.0L648.5 396.8L650.3 398.6L652.4 400.7L654.5 402.7L656.5 404.6L658.6 406.5L660.5 408.3L662.4 410.1L664.3 412.1L666.2 414.0L668.1 415.9L669.8 417.7L671.5 419.6L673.1 421.3L674.8 423.5L676.5 425.5L678.0 427.5L679.3 429.5L680.5 431.5L681.6 433.5L682.4 435.4L683.3 437.5L684.1 439.9L685.1 442.7L685.9 445.0L686.8 447.5L687.7 450.1L688.5 452.8L689.4 455.6L690.2 458.5L691.0 461.3L691.6 463.6L692.2 465.9L692.8 468.3L693.4 470.7L694.0 473.1L694.5 475.6L695.0 478.0L695.5 480.4L695.9 482.8L696.3 485.3L696.7 487.8L697.0 490.3L697.3 492.8L697.5 495.3L697.8 497.8L698.0 500.4L698.2 502.9L698.4 505.3L698.5 508.2L698.7 511.0L698.8 513.8L698.9 516.6L699.0 519.3L699.0 521.9L699.0 524.4L698.9 526.7L698.6 529.5L698.3 532.1L697.8 534.6L697.3 536.9L696.7 539.2L696.1 541.6L695.3 543.9L694.3 546.2L693.2 548.5L692.0 551.1L690.7 554.0L689.7 556.6L688.7 559.2L687.6 561.9L686.5 564.6L685.4 567.3L684.3 569.9L683.3 572.3L682.2 574.8L681.1 577.2L680.0 579.7L678.9 582.1L677.8 584.4L676.7 586.7L675.3 589.3L673.9 591.8L672.4 594.3L671.0 596.7L669.5 599.0L668.0 601.2L666.4 603.3L664.8 605.5L663.1 607.5L661.4 609.5L659.9 611.2L658.5 612.5L655.9 614.3L653.0 615.5A5.4 5.4 0 0 0 659.0 624.5L660.9 623.2L665.5 619.5L667.0 617.8L668.7 615.9L670.6 613.8L672.4 611.6L674.3 609.2L676.0 606.8L677.7 604.4L679.3 601.9L680.8 599.3L682.4 596.7L683.9 594.0L685.3 591.3L686.6 588.9L687.9 586.4L689.1 583.9L690.3 581.4L691.5 578.9L692.6 576.5L693.7 574.1L694.9 571.2L696.1 568.4L697.2 565.6L698.3 563.0L699.3 560.4L700.3 558.0L701.4 555.4L702.5 552.9L703.7 550.4L704.9 547.6L705.9 544.4L706.7 541.9L707.3 539.3L707.9 536.6L708.4 533.7L708.8 530.6L709.1 527.3L709.3 524.7L709.3 522.0L709.3 519.2L709.2 516.3L709.1 513.4L709.0 510.4L708.8 507.5L708.6 504.7L708.5 502.1L708.3 499.5L708.0 496.9L707.8 494.3L707.5 491.6L707.2 489.0L706.9 486.4L706.5 483.8L706.1 481.2L705.6 478.6L705.1 476.0L704.6 473.4L704.0 470.8L703.4 468.3L702.8 465.8L702.2 463.4L701.6 461.0L701.0 458.7L700.1 455.7L699.3 452.7L698.4 449.7L697.5 446.9L696.6 444.2L695.7 441.6L694.9 439.3L693.8 436.4L692.9 433.8L691.9 431.4L690.8 429.0L689.5 426.5L688.0 424.0L686.4 421.6L684.6 419.3L682.8 417.0L680.9 414.7L679.2 412.7L677.3 410.7L675.4 408.7L673.5 406.7L671.6 404.8L669.6 402.9L667.6 400.9L665.6 399.0L663.6 397.1L661.6 395.2L659.6 393.3L657.7 391.4L656.0 389.6L654.3 387.8L652.5 385.9L650.8 384.0L649.2 382.2L647.6 380.3L646.2 378.5L644.6 376.6L643.2 374.7L641.9 372.7L640.5 370.7L639.0 368.5L637.3 366.1L635.8 363.9L634.2 361.8L632.6 359.7L631.1 357.6L629.5 355.4L627.9 353.1L626.4 350.6L625.2 348.5L623.9 346.4L622.6 344.1L621.3 341.8L620.0 339.4L618.7 337.0L617.4 334.6L616.2 332.1L615.1 329.8L614.1 327.5L612.9 325.0L611.9 322.5L610.9 320.0L609.9 317.6L609.0 315.1L608.2 312.7L607.5 310.3L606.8 307.9L606.2 305.5L605.7 303.1L605.4 300.7L605.0 298.3L604.8 295.8L604.6 293.4L604.4 290.9L604.3 288.4L604.2 285.8L604.1 283.3L604.0 280.8L603.8 278.3L603.7 275.8L603.7 273.3L603.7 270.7L603.7 268.1L603.7 265.6L603.8 263.0L603.9 260.5L604.0 257.7L604.2 254.6L604.4 251.4L604.7 248.3L604.9 245.3L605.1 242.6L605.3 240.4L605.4 238.6A4.4 4.4 0 0 0 596.6 237.4ZM630.1 614.4L628.2 613.6L626.1 612.6L623.7 611.5L621.3 610.3L619.5 609.3L617.7 608.0L615.9 606.6L614.2 605.1L612.6 603.5L611.0 601.7L609.7 600.0L608.4 598.1L607.1 596.1L605.9 594.0L604.7 591.9L603.6 589.8L602.6 587.4L601.6 585.0L600.7 582.5L599.9 580.0L599.1 577.5L598.4 575.1L597.8 572.8L597.2 570.4L596.6 567.8L596.0 565.0L595.6 562.7L595.1 560.3L594.7 557.8L594.2 555.2L593.8 552.6L593.4 550.0L593.1 547.4L592.9 544.9L592.7 542.5L592.5 540.1L592.4 537.7L592.3 535.0L592.2 532.2L592.1 528.9L592.1 526.7L592.1 524.3L592.1 521.7L592.1 519.1L592.2 516.4L592.2 513.6L592.3 510.9L592.3 508.1L592.4 505.4L592.5 502.8L592.6 500.3L592.8 497.6L593.0 494.8L593.1 492.2L593.3 489.5L593.5 487.0L593.8 484.4L594.0 481.9L594.3 479.5L594.7 477.2L595.1 474.9L595.6 472.1L596.2 469.4L596.9 466.8L597.6 464.2L598.4 461.7L599.1 459.3L600.0 457.0L600.8 454.9L601.9 452.3L603.0 450.0L604.0 447.9L605.2 446.0L606.5 444.2L607.9 442.3L609.6 440.5L611.4 438.7L613.4 436.9L615.5 435.3L617.6 433.7L619.7 432.4L621.7 431.3L623.7 430.3L625.8 429.4L627.9 428.7L630.0 428.0L632.1 427.5L634.5 427.1L636.9 426.9L639.3 426.8L641.8 426.9L644.4 427.1L646.6 427.4L649.0 427.9L651.4 428.5L653.7 429.1L655.9 429.9L657.8 430.7L660.0 431.8L661.9 433.0L663.8 434.4L665.6 435.9L667.3 437.6L668.8 439.3L670.2 441.0L671.5 442.9L672.7 445.0L673.9 447.2L674.8 449.3L675.6 451.5L676.5 453.8L677.2 456.2L677.9 458.7L678.5 461.1L679.0 463.6L679.4 466.1L679.8 468.6L680.0 471.1L680.2 473.6L680.4 476.2L680.4 478.7L680.4 481.3L680.3 483.9L680.1 486.4L679.8 488.8L679.4 491.0L678.9 493.5L678.2 495.8L677.4 498.1L676.5 500.4L675.4 502.8L674.3 504.8L673.2 506.9L672.1 508.9L670.8 510.9L669.4 512.9L668.0 514.8L666.4 516.7L664.7 518.5L662.9 520.4L660.9 522.2L658.8 524.2L656.6 526.1L654.9 527.6L653.0 529.1L651.1 530.6L649.0 532.2L646.9 533.8L644.8 535.3L642.8 536.9L640.8 538.5L638.7 540.1L636.6 541.7L634.4 543.4L632.3 545.1L630.2 546.8L628.1 548.6L626.2 550.5L624.0 553.1L621.9 555.7L620.1 558.4L618.6 561.2L617.3 564.0L616.2 567.0L615.3 570.0L614.8 573.0L614.5 576.0L614.4 579.0L614.5 582.0L614.8 585.1L615.3 588.2L616.2 591.3L617.4 594.2L619.2 597.5L621.5 600.5L624.2 603.1L627.3 605.4L630.1 606.9L633.1 608.2L636.3 609.2L639.6 609.9L643.0 610.1L646.3 609.9L649.6 609.2L652.6 608.1L655.4 606.8L658.0 605.2L660.9 602.7L663.2 599.8L665.0 596.8L666.3 593.9L667.2 590.7L667.7 587.4L667.8 584.2L667.4 581.0L666.1 577.1L664.1 573.4L661.2 570.3L657.5 567.9L653.5 566.4L649.4 565.7L645.3 565.9L641.3 566.8L637.6 568.5L634.5 571.0L632.1 574.0L630.3 577.3L629.4 581.0L629.2 584.6L629.7 588.1L632.1 592.8L635.7 596.1L640.3 597.7L644.7 597.6L649.0 595.9L652.1 593.2L654.1 589.0L654.4 587.3A4.2 4.2 0 0 0 646.6 584.7L646.0 587.1L645.9 587.8L644.6 588.8L643.3 589.4L641.6 589.4L640.3 588.9L639.1 587.6L638.3 585.9L638.1 584.3L638.2 582.3L638.7 580.7L639.6 579.1L641.0 577.6L642.4 576.5L644.2 575.8L646.5 575.3L648.6 575.3L650.9 575.7L653.2 576.7L654.8 577.7L656.0 579.1L657.0 581.0L657.6 583.0L657.7 584.6L657.6 586.5L657.3 588.4L656.7 590.1L655.8 592.1L654.7 594.0L653.4 595.6L652.0 596.8L650.5 597.7L648.7 598.6L646.7 599.3L644.8 599.7L643.0 599.9L641.1 599.7L639.0 599.2L636.7 598.5L634.5 597.6L632.7 596.6L630.8 595.3L629.2 593.7L627.8 591.8L626.6 589.8L626.0 588.0L625.4 586.0L625.0 583.7L624.7 581.3L624.6 579.0L624.7 576.7L625.0 574.5L625.4 572.3L626.0 570.1L626.7 568.0L627.7 565.9L628.9 563.8L630.3 561.7L631.9 559.6L633.8 557.5L635.2 556.1L636.8 554.6L638.7 553.1L640.7 551.6L642.8 549.9L645.0 548.3L647.2 546.5L649.1 545.1L651.1 543.5L653.1 542.0L655.2 540.4L657.3 538.8L659.4 537.2L661.5 535.5L663.4 533.9L665.7 531.8L668.0 529.8L670.1 527.7L672.2 525.6L674.1 523.5L676.0 521.2L677.8 518.9L679.4 516.6L680.9 514.2L682.2 511.9L683.5 509.5L684.6 507.2L685.9 504.5L687.0 501.8L688.0 499.0L688.9 496.1L689.6 493.0L690.0 490.2L690.3 487.4L690.5 484.5L690.7 481.6L690.7 478.7L690.6 475.8L690.5 473.0L690.3 470.2L690.0 467.3L689.6 464.5L689.1 461.6L688.5 458.9L687.9 456.1L687.1 453.3L686.2 450.6L685.3 447.9L684.3 445.3L683.1 442.8L681.7 440.0L680.2 437.4L678.5 435.0L676.7 432.6L674.7 430.4L672.6 428.3L670.3 426.4L667.8 424.5L665.1 422.8L662.2 421.3L659.5 420.2L656.8 419.3L654.0 418.5L651.1 417.8L648.3 417.3L645.6 416.9L642.5 416.6L639.3 416.5L636.2 416.6L633.1 416.9L629.9 417.5L627.3 418.1L624.7 418.9L622.1 419.8L619.5 420.9L616.9 422.2L614.3 423.6L611.8 425.2L609.3 427.0L606.8 429.0L604.4 431.1L602.2 433.4L600.1 435.7L598.2 438.0L596.6 440.4L595.1 442.8L593.7 445.4L592.4 448.2L591.2 451.1L590.3 453.5L589.4 456.0L588.5 458.6L587.7 461.3L586.9 464.1L586.2 467.0L585.5 470.0L584.9 473.1L584.5 475.6L584.1 478.1L583.8 480.7L583.5 483.4L583.3 486.0L583.1 488.7L582.9 491.5L582.7 494.2L582.5 497.0L582.4 499.7L582.2 502.3L582.1 505.0L582.0 507.8L582.0 510.6L581.9 513.5L581.9 516.3L581.8 519.0L581.8 521.7L581.8 524.3L581.8 526.8L581.9 529.1L581.9 532.3L582.0 535.3L582.1 538.1L582.2 540.8L582.4 543.3L582.6 545.9L582.9 548.6L583.2 551.3L583.6 554.1L584.1 556.9L584.5 559.6L585.0 562.2L585.5 564.7L586.0 567.0L586.6 570.0L587.2 572.7L587.8 575.3L588.5 577.9L589.3 580.5L590.1 583.2L591.0 585.9L592.0 588.6L593.1 591.4L594.4 594.2L595.5 596.6L596.7 599.0L598.0 601.4L599.4 603.8L600.9 606.1L602.4 608.3L604.3 610.7L606.2 613.0L608.3 615.0L610.3 617.0L612.5 618.7L615.2 620.6L618.0 622.3L620.6 623.7L622.7 624.9L623.9 625.6A6.4 6.4 0 0 0 630.1 614.4ZM601.9 262.5L602.2 260.8L602.5 258.5L602.9 255.8L603.3 252.8L603.8 249.6L604.3 246.5L604.8 243.5L605.3 240.8L605.9 238.3L606.5 235.8L607.1 233.4L607.7 231.1L608.4 228.7L609.1 226.3L609.9 223.9L610.7 221.5L611.6 218.9L612.5 216.3L613.4 213.7L614.5 211.1L615.5 208.5L616.6 206.0L617.7 203.7L618.8 201.4L620.0 199.2L621.2 197.0L622.4 195.0L623.7 193.0L625.0 191.1L626.4 189.2L627.8 187.4L629.3 185.7L631.0 183.8L632.9 181.9L634.8 180.2L636.7 178.5L638.8 176.9L640.9 175.4L643.1 174.0L645.2 172.8L647.4 171.6L649.7 170.5L652.1 169.4L654.6 168.4L657.0 167.5L659.5 166.6L661.8 165.9L664.1 165.2L666.4 164.7L668.7 164.2L671.0 163.8L673.3 163.5L675.6 163.2L678.0 163.0L680.4 162.9L682.9 162.8L685.3 162.8L687.8 162.8L690.3 163.0L692.7 163.1L695.1 163.4L697.4 163.8L699.6 164.3L701.9 164.8L704.1 165.5L706.4 166.3L708.7 167.2L710.9 168.1L713.1 169.2L715.3 170.3L717.4 171.5L719.3 172.6L721.2 173.8L723.1 175.1L725.1 176.5L727.0 177.9L728.8 179.4L730.6 180.9L732.3 182.4L734.0 183.9L735.8 185.6L737.6 187.4L739.2 189.3L740.8 191.1L742.4 193.0L743.9 195.0L745.4 197.0L746.9 199.1L748.3 201.2L749.6 203.2L750.9 205.3L752.0 207.5L753.2 209.7L754.3 212.0L755.4 214.2L756.3 216.4L757.2 218.7L758.0 221.0L758.8 223.4L759.3 225.6L759.8 227.9L760.3 230.3L760.7 232.7L761.0 235.2L761.2 237.7L761.4 240.1L761.4 242.4L761.3 244.8L761.2 247.2L761.0 249.7L760.8 252.2L760.5 254.7L760.2 257.0L759.9 259.2L759.5 261.9L759.1 264.3L758.6 266.6L758.0 268.8L757.4 270.9L756.7 273.1L755.8 275.3L754.9 277.5L753.8 279.7L752.7 281.9L751.5 284.0L750.2 286.0L748.7 288.3L747.2 290.4L745.7 292.3L744.1 294.1L742.3 295.7L740.6 297.1L738.8 298.5L736.8 299.7L734.8 300.9L732.9 301.9L731.0 302.7L728.6 303.5L726.2 304.2L723.9 304.6L721.5 304.8L719.2 304.9L716.8 304.7L714.2 304.3L711.8 303.7L709.6 303.0L707.8 302.1L706.2 301.0L704.6 299.6L703.0 297.9L701.6 296.0L700.3 294.1L699.3 292.2L698.5 290.2L697.8 288.0L697.2 285.7L696.8 283.2L696.6 281.2L696.6 278.8L696.7 276.2L696.8 273.5L697.0 270.8L697.1 268.3L697.3 265.0L697.4 262.1L697.6 259.3L697.9 256.7L698.2 254.1L698.6 251.3L699.0 248.9L699.3 247.0A4.9 4.9 0 0 0 689.7 245.0L689.2 246.6L688.5 249.2L687.8 252.1L687.1 255.3L686.7 258.2L686.4 261.2L686.1 264.3L685.9 267.7L685.7 270.1L685.5 272.8L685.4 275.7L685.3 278.7L685.3 281.7L685.6 284.8L686.1 288.0L686.9 291.1L687.9 294.1L689.1 297.1L690.7 299.9L692.4 302.6L694.4 305.2L696.7 307.6L699.3 309.9L702.2 311.9L705.4 313.4L708.7 314.6L712.1 315.4L715.5 315.9L718.8 316.1L722.1 316.1L725.4 315.8L728.7 315.2L731.9 314.4L735.0 313.3L737.7 312.1L740.3 310.8L742.8 309.3L745.2 307.7L747.5 306.0L749.7 304.3L752.1 302.0L754.3 299.6L756.3 297.2L758.1 294.6L759.8 292.0L761.2 289.7L762.6 287.3L763.9 284.8L765.1 282.2L766.3 279.6L767.3 276.9L768.2 274.3L769.0 271.7L769.6 269.1L770.2 266.5L770.6 263.7L771.1 260.8L771.4 258.5L771.7 256.0L772.0 253.3L772.3 250.7L772.5 247.9L772.6 245.2L772.7 242.5L772.6 239.9L772.6 236.9L772.4 234.1L772.1 231.2L771.7 228.5L771.3 225.8L770.8 223.2L770.2 220.6L769.5 217.6L768.7 214.8L767.8 212.1L766.9 209.4L765.9 206.8L764.8 204.3L763.7 201.7L762.5 199.2L761.2 196.7L759.8 194.2L758.3 191.6L756.6 189.0L755.2 186.9L753.7 184.7L752.1 182.4L750.3 180.1L748.4 177.8L746.3 175.4L744.0 173.1L742.2 171.4L740.3 169.7L738.2 168.0L736.1 166.3L733.9 164.6L731.6 163.0L729.3 161.4L727.0 159.9L724.6 158.5L721.9 157.2L719.2 155.9L716.5 154.8L713.7 153.8L710.9 152.8L708.1 152.0L705.2 151.3L702.4 150.7L699.5 150.3L696.5 150.0L693.6 149.8L690.7 149.7L687.9 149.7L685.1 149.8L682.3 149.9L679.6 150.1L676.9 150.3L674.2 150.6L671.6 151.0L668.9 151.4L666.2 152.0L663.5 152.6L660.9 153.3L658.2 154.1L655.5 155.1L652.7 156.1L650.0 157.2L647.2 158.4L644.5 159.7L641.9 161.1L639.3 162.5L636.9 164.0L634.2 165.8L631.7 167.7L629.3 169.6L627.0 171.7L624.8 173.8L622.7 176.0L620.7 178.3L619.0 180.4L617.4 182.6L615.9 184.8L614.4 187.0L613.0 189.3L611.7 191.7L610.4 194.1L609.2 196.6L608.0 199.2L606.9 201.9L605.8 204.7L604.8 207.5L603.8 210.3L603.0 213.1L602.1 215.9L601.3 218.5L600.6 221.1L599.9 223.7L599.3 226.3L598.7 228.8L598.1 231.4L597.6 233.9L597.1 236.5L596.7 239.2L596.2 242.1L595.8 245.3L595.4 248.5L595.1 251.7L594.8 254.8L594.5 257.5L594.3 259.8L594.1 261.5A3.9 3.9 0 0 0 601.9 262.5ZM699.9 260.3L702.3 258.7L704.9 257.0L706.3 256.7L707.8 256.8L709.7 257.3L712.1 258.0L714.1 258.6L716.4 259.5L718.6 260.5L720.3 261.5L721.9 262.6L723.4 263.9L724.8 265.3L725.8 266.6L726.4 267.7L726.9 268.8L727.1 270.2L727.2 271.7L726.9 273.5L726.4 275.1L725.8 276.3L724.8 277.7L723.7 278.8L722.3 279.7L721.3 280.1L720.7 280.0L719.7 279.5L719.2 278.9L718.9 278.7L718.8 279.2L719.9 276.7A5.4 5.4 0 0 0 710.1 272.3L708.9 273.7L707.1 279.3L708.4 284.3L711.3 288.5L715.3 291.3L720.7 292.9L726.2 292.4L731.3 290.2L734.3 288.1L737.1 285.4L739.6 281.9L741.3 278.1L742.4 274.1L742.9 269.8L742.5 265.7L741.4 261.5L739.2 257.4L737.1 254.7L734.6 252.1L731.8 249.7L728.7 247.5L725.2 245.8L721.7 244.5L718.1 243.6L714.7 243.0L710.4 243.0L706.0 243.7L701.7 245.3L697.6 248.6L695.1 251.8L694.1 253.7A4.4 4.4 0 0 0 699.9 260.3ZM752.2 333.7L750.5 333.6L747.4 333.6L743.7 333.9L739.6 334.9L736.6 336.3L733.6 338.3L730.8 340.7L728.4 343.6L726.8 346.4L725.5 349.4L724.5 352.4L723.8 355.5L723.4 358.6L723.5 362.4L724.2 366.0L725.4 369.3L727.1 372.2L730.5 375.8L734.1 378.0L737.8 379.3L744.3 378.5L748.6 375.4L751.0 369.6L751.2 367.4A5.4 5.4 0 0 0 740.8 364.6L740.2 367.7L740.4 367.6L739.9 367.8L740.2 367.7L739.1 367.3L737.7 366.5L736.9 365.8L736.4 364.6L735.9 362.9L735.6 361.1L735.6 359.4L735.9 357.8L736.3 355.8L737.0 353.7L737.8 351.8L738.6 350.4L739.7 348.9L741.0 347.5L742.6 346.2L744.4 345.1L746.0 344.3L748.7 343.5L751.4 342.9L753.8 342.3A4.4 4.4 0 0 0 752.2 333.7ZM624.7 202.1L625.9 200.8L627.5 199.0L629.3 196.9L631.2 194.9L633.1 193.1L634.9 191.5L636.7 189.9L638.6 188.4L640.6 186.9L642.6 185.6L644.6 184.4L646.9 183.2L649.4 182.1L651.9 181.0L654.5 180.0L657.0 179.3L659.1 178.8L661.4 178.4L663.7 178.3L665.8 178.4L667.7 178.7L669.4 179.1L671.4 180.0L673.1 181.3L673.8 182.0L673.5 181.9L672.0 185.7A4.7 4.7 0 0 0 681.0 188.3L682.5 185.8L683.2 178.0L680.7 174.1L677.1 171.1L672.6 168.9L669.9 168.1L666.9 167.7L663.7 167.5L660.4 167.7L656.9 168.2L654.0 169.0L651.0 170.0L647.9 171.2L644.9 172.6L642.1 174.0L639.4 175.6L636.9 177.3L634.5 179.2L632.4 181.2L630.4 183.1L628.6 185.1L626.9 186.9L624.8 189.4L623.0 192.0L621.4 194.5L620.1 196.5L619.3 197.9A3.4 3.4 0 0 0 624.7 202.1ZM740.3 175.5L741.5 176.6L743.6 178.4L746.3 180.3L749.3 182.2L752.7 183.8L756.7 184.1L760.5 183.9L763.9 183.1L767.0 182.0L771.0 179.4L773.7 176.3L775.5 173.3L776.1 167.3L775.4 165.5A3.9 3.9 0 0 0 767.6 165.5L767.7 168.4L767.5 168.7L766.2 170.0L764.5 171.3L763.0 172.0L761.3 172.4L759.2 172.6L757.1 172.6L755.3 172.2L753.6 172.1L751.1 171.3L748.3 170.2L745.8 169.2L743.7 168.5A3.9 3.9 0 0 0 740.3 175.5ZM748.5 182.6L750.6 183.8L753.4 185.3L756.4 186.9L758.5 188.3L760.9 189.4L762.7 190.5L764.0 191.5L765.4 192.3L767.0 194.2A3.4 3.4 0 0 0 773.0 190.8L772.9 188.8L771.0 184.5L768.9 182.5L766.4 180.6L763.5 178.7L760.3 177.6L756.8 176.6L753.6 175.8L751.5 175.4A3.9 3.9 0 0 0 748.5 182.6ZM665.7 404.9L664.3 404.1L662.0 402.7L659.2 401.2L656.0 399.6L652.7 398.1L649.1 397.0L646.3 396.4L643.3 396.1L640.4 395.9L637.5 395.8L634.7 395.9L632.0 396.0L629.4 396.1L625.9 396.6L622.5 397.2L619.3 398.0L616.3 399.0L613.6 400.1L610.3 401.8L607.4 403.8L604.8 406.1L602.7 408.8L600.8 413.5L600.3 418.0L600.9 422.3L604.8 428.1L610.9 431.3L618.2 428.7L619.8 426.8A4.9 4.9 0 0 0 615.2 418.2L612.0 419.9L613.1 419.7L613.4 419.3L613.1 418.7L612.9 417.7L613.0 416.2L613.3 415.2L613.9 414.2L615.0 413.1L616.5 412.0L618.4 410.9L620.4 410.1L622.6 409.4L625.1 408.7L627.8 408.2L630.6 407.9L632.8 407.7L635.1 407.5L637.6 407.4L640.0 407.4L642.4 407.5L644.7 407.7L646.9 408.0L649.3 408.5L652.1 409.3L655.0 410.4L657.8 411.4L660.3 412.4L662.3 413.1A4.4 4.4 0 0 0 665.7 404.9ZM666.7 429.1L665.6 431.6L664.4 434.7L663.1 436.8L661.7 438.4L660.0 439.9L658.7 440.6L658.2 440.8L658.3 440.9L659.8 442.2L658.2 440.0A5.2 5.2 0 0 0 649.8 446.0L650.0 447.4L654.7 452.1L659.9 452.5L665.3 450.4L667.9 447.7L670.1 444.7L671.9 441.2L672.9 437.0L673.3 433.2L673.3 430.9A3.4 3.4 0 0 0 666.7 429.1ZM683.3 463.9L682.1 466.3L680.6 469.2L679.4 470.8L677.5 472.3L676.4 472.6L679.9 473.6L677.7 471.9A4.9 4.9 0 0 0 672.3 480.1L672.4 481.0L679.6 483.4L684.0 480.6L687.6 476.2L688.9 472.1L689.6 468.4L689.7 466.1A3.4 3.4 0 0 0 683.3 463.9ZM592.2 498.2L593.3 496.0L594.6 493.2L596.0 490.5L597.3 488.8L598.9 487.2L600.6 485.8L602.4 484.7L603.7 484.3L605.2 484.1L607.2 484.3L607.9 484.7L607.5 484.4L608.0 485.0L608.2 484.9L608.9 483.1L607.4 486.2A5.4 5.4 0 0 0 616.6 491.8L618.6 490.7L621.8 483.1L620.4 478.6L617.8 474.7L613.1 471.3L608.1 470.5L603.2 471.0L598.3 472.7L595.2 474.9L592.7 477.4L590.5 480.2L588.7 483.2L587.3 487.0L586.4 490.7L585.9 493.9L585.8 495.8A3.4 3.4 0 0 0 592.2 498.2ZM598.9 580.2L599.1 578.1L599.3 575.4L599.5 572.2L599.8 569.0L600.2 566.1L600.8 564.0L601.8 561.4L603.1 559.2L604.5 557.5L605.8 556.4L606.6 556.1L608.9 556.0L611.8 555.8A4.4 4.4 0 0 0 610.2 547.2L608.8 547.2L605.0 547.5L600.2 549.6L598.0 552.0L596.0 554.8L594.4 558.2L593.2 562.0L592.8 565.2L592.7 568.6L592.7 572.0L592.8 575.3L593.0 578.0L593.1 579.8A2.9 2.9 0 0 0 598.9 580.2ZM679.4 508.9L677.5 509.5L675.3 510.4L672.8 511.4L670.2 512.4L667.6 513.2L665.2 513.7L663.5 513.9L661.3 513.9L658.9 513.6L656.4 513.1L654.0 512.5L651.6 511.6L649.5 510.7L647.6 509.7L645.8 508.5L644.0 507.1L642.5 505.7L641.0 504.1L639.8 502.6L638.6 500.6L637.5 498.4L636.7 496.0L636.1 493.8L635.9 491.8L636.0 489.9L636.3 487.8L637.0 485.7L637.8 484.0L638.6 482.7L639.5 481.7L640.9 480.8L642.6 479.9L644.4 479.2L646.0 478.8L648.0 478.7L650.3 478.9L652.5 479.4L654.0 480.1L655.0 481.0L656.2 482.5L657.1 484.2L657.5 485.3L657.3 486.1L656.7 488.0L655.9 489.1L656.3 488.8L656.4 489.0L658.6 490.7L657.1 488.1A5.4 5.4 0 0 0 647.9 493.9L648.1 495.5L653.6 501.0L659.7 500.9L666.1 496.9L668.2 493.1L669.6 488.4L669.5 482.7L668.1 479.0L666.1 475.6L663.4 472.5L660.0 469.9L656.2 468.2L652.2 467.2L648.1 466.9L644.0 467.2L640.9 467.9L637.8 469.1L634.8 470.7L631.9 472.7L629.4 475.3L627.4 478.3L625.9 481.6L624.9 485.0L624.2 488.6L624.1 492.2L624.5 495.8L625.4 499.4L626.6 502.9L628.2 506.3L630.2 509.4L632.0 511.8L634.1 514.1L636.5 516.2L639.0 518.1L641.6 519.8L644.5 521.3L647.5 522.5L650.6 523.6L653.9 524.4L657.4 525.0L660.9 525.3L664.5 525.1L667.9 524.3L671.1 523.2L674.2 521.8L677.0 520.3L679.5 519.0L681.4 517.8L682.6 517.1A4.4 4.4 0 0 0 679.4 508.9ZM655.3 510.3L653.4 508.5L651.2 506.5L650.0 504.9L648.7 502.5L648.3 501.2L647.8 502.8L649.1 500.3A5.2 5.2 0 0 0 639.9 495.7L638.8 496.4L636.7 502.8L638.7 507.9L642.0 512.1L645.5 514.5L648.7 516.0L650.7 516.7A3.9 3.9 0 0 0 655.3 510.3Z"/>
</g>
<g filter="url(#relL)" fill="url(#gLeaf)">
<use href="#lf0"/>
<use href="#lf1"/>
<use href="#lf2"/>
<use href="#lf3"/>
<use href="#lf4"/>
<use href="#lf5"/>
<use href="#lf6"/>
<use href="#lf7"/>
<use href="#lf8"/>
<use href="#lf9"/>
</g>
<g fill="none" stroke-linecap="round" stroke-linejoin="round">
<g stroke="#5a5a5a">
<use href="#t4" stroke-width="7.5"/>
<use href="#t6" stroke-width="6.0"/>
<use href="#t7" stroke-width="5.0"/>
<use href="#t8" stroke-width="5.0"/>
<path stroke="none" fill="#5a5a5a" d="M597.5 237.5L597.1 239.1L596.6 241.3L596.0 244.0L595.4 246.9L594.7 250.1L594.1 253.3L593.5 256.5L593.0 259.6L592.7 262.1L592.3 264.7L592.0 267.4L591.7 270.0L591.4 272.7L591.2 275.4L591.0 278.2L590.8 280.9L590.8 283.7L590.9 286.4L591.0 289.0L591.2 291.7L591.4 294.5L591.7 297.2L592.1 300.0L592.5 302.7L593.0 305.5L593.7 308.3L594.3 311.1L595.1 313.9L595.9 316.6L596.9 319.4L597.8 322.1L598.9 324.8L600.0 327.5L601.1 330.2L602.3 332.9L603.6 335.4L604.9 337.9L606.3 340.5L607.7 343.0L609.2 345.5L610.7 348.0L612.1 350.4L613.6 352.7L615.0 354.9L616.4 357.0L618.4 359.8L620.3 362.3L622.2 364.6L624.1 366.7L625.8 368.7L627.5 370.5L629.0 372.3L630.6 374.5L632.1 376.6L633.6 378.6L635.1 380.6L636.7 382.7L638.5 384.9L640.2 386.8L641.9 388.7L643.7 390.6L645.5 392.5L647.4 394.4L649.2 396.2L651.0 398.0L653.0 400.0L655.1 402.0L657.2 404.0L659.2 405.8L661.1 407.7L663.0 409.5L664.9 411.4L666.8 413.3L668.7 415.2L670.5 417.1L672.2 419.0L673.8 420.7L675.5 422.9L677.2 425.0L678.7 427.0L680.1 429.0L681.3 431.1L682.4 433.1L683.3 435.1L684.1 437.2L685.0 439.6L686.0 442.4L686.8 444.7L687.6 447.2L688.5 449.8L689.4 452.6L690.3 455.4L691.1 458.2L691.9 461.1L692.5 463.4L693.1 465.7L693.7 468.1L694.3 470.5L694.9 472.9L695.4 475.4L695.9 477.8L696.4 480.3L696.8 482.7L697.2 485.1L697.6 487.6L697.9 490.1L698.2 492.7L698.4 495.2L698.7 497.8L698.9 500.3L699.1 502.8L699.3 505.3L699.4 508.1L699.6 510.9L699.7 513.8L699.8 516.6L699.9 519.3L699.9 521.9L699.9 524.4L699.8 526.7L699.5 529.6L699.2 532.2L698.7 534.7L698.2 537.1L697.6 539.5L696.9 541.8L696.1 544.2L695.1 546.5L694.1 548.9L692.8 551.5L691.6 554.4L690.5 556.9L689.5 559.5L688.5 562.2L687.4 564.9L686.3 567.6L685.1 570.3L684.1 572.7L683.0 575.1L682.0 577.6L680.9 580.1L679.7 582.5L678.6 584.8L677.5 587.1L676.1 589.7L674.6 592.3L673.2 594.8L671.7 597.2L670.2 599.5L668.7 601.7L667.2 603.9L665.5 606.0L663.8 608.1L662.1 610.1L660.5 611.8L659.2 613.2L656.3 615.0L653.5 616.3A4.5 4.5 0 0 0 658.5 623.7L660.5 622.5L664.8 618.8L666.4 617.2L668.1 615.4L669.9 613.3L671.7 611.0L673.5 608.7L675.3 606.3L676.9 603.9L678.5 601.4L680.1 598.9L681.6 596.2L683.1 593.6L684.5 590.9L685.8 588.5L687.1 586.0L688.3 583.6L689.5 581.0L690.7 578.6L691.8 576.1L692.9 573.7L694.1 570.9L695.3 568.1L696.4 565.3L697.4 562.6L698.4 560.1L699.4 557.6L700.6 555.0L701.7 552.5L702.9 550.0L704.0 547.3L705.1 544.2L705.8 541.7L706.4 539.1L707.0 536.4L707.6 533.5L708.0 530.5L708.2 527.3L708.4 524.7L708.4 522.0L708.4 519.2L708.3 516.3L708.2 513.4L708.1 510.5L707.9 507.6L707.7 504.7L707.6 502.2L707.4 499.6L707.1 497.0L706.9 494.4L706.6 491.7L706.3 489.1L706.0 486.5L705.6 483.9L705.2 481.3L704.7 478.7L704.2 476.2L703.7 473.6L703.1 471.0L702.6 468.5L702.0 466.1L701.3 463.6L700.7 461.2L700.1 458.9L699.3 455.9L698.4 452.9L697.5 450.0L696.6 447.2L695.7 444.5L694.8 441.9L694.0 439.6L693.0 436.7L692.0 434.1L691.1 431.7L690.0 429.3L688.7 426.9L687.2 424.5L685.6 422.1L683.9 419.8L682.1 417.5L680.2 415.3L678.5 413.3L676.7 411.3L674.8 409.3L672.9 407.4L670.9 405.4L669.0 403.5L667.0 401.5L665.0 399.6L663.0 397.7L661.0 395.9L659.0 394.0L657.0 392.0L655.3 390.2L653.6 388.4L651.9 386.5L650.2 384.6L648.5 382.8L646.9 380.9L645.5 379.1L643.9 377.1L642.5 375.2L641.2 373.2L639.8 371.2L638.3 369.0L636.6 366.7L635.1 364.5L633.5 362.4L631.9 360.3L630.4 358.2L628.8 355.9L627.2 353.6L625.6 351.0L624.4 349.0L623.1 346.9L621.8 344.6L620.5 342.3L619.2 339.9L617.9 337.4L616.6 335.0L615.4 332.6L614.3 330.2L613.3 327.9L612.1 325.4L611.0 322.9L610.0 320.4L609.1 317.9L608.2 315.4L607.4 313.0L606.6 310.5L605.9 308.1L605.3 305.7L604.9 303.2L604.5 300.8L604.1 298.4L603.9 295.9L603.7 293.4L603.5 290.9L603.4 288.4L603.3 285.9L603.2 283.3L603.1 280.8L602.9 278.3L602.8 275.8L602.8 273.2L602.8 270.7L602.8 268.1L602.8 265.5L602.9 263.0L603.0 260.4L603.1 257.6L603.3 254.5L603.5 251.3L603.8 248.2L604.0 245.2L604.2 242.5L604.4 240.2L604.5 238.5A3.5 3.5 0 0 0 597.5 237.5ZM629.6 615.2L627.8 614.4L625.7 613.4L623.2 612.3L620.9 611.1L619.0 610.0L617.1 608.7L615.3 607.2L613.6 605.7L611.9 604.1L610.3 602.2L609.0 600.5L607.6 598.6L606.3 596.5L605.1 594.4L603.9 592.3L602.8 590.2L601.7 587.7L600.8 585.3L599.9 582.8L599.1 580.3L598.3 577.8L597.5 575.3L596.9 573.0L596.3 570.6L595.8 568.0L595.2 565.2L594.7 562.9L594.2 560.5L593.8 557.9L593.3 555.3L592.9 552.7L592.5 550.1L592.2 547.5L592.0 545.0L591.8 542.6L591.6 540.2L591.5 537.7L591.4 535.1L591.3 532.2L591.2 529.0L591.2 526.7L591.2 524.3L591.2 521.7L591.2 519.1L591.3 516.4L591.3 513.6L591.4 510.8L591.4 508.1L591.5 505.4L591.6 502.7L591.7 500.2L591.9 497.5L592.1 494.8L592.2 492.1L592.4 489.5L592.6 486.9L592.9 484.3L593.2 481.8L593.5 479.4L593.8 477.0L594.2 474.8L594.7 472.0L595.3 469.2L596.0 466.5L596.7 463.9L597.5 461.4L598.3 459.0L599.1 456.7L599.9 454.6L601.1 451.9L602.1 449.6L603.3 447.5L604.5 445.5L605.8 443.6L607.3 441.7L608.9 439.9L610.8 438.0L612.9 436.2L615.0 434.5L617.1 433.0L619.2 431.6L621.3 430.5L623.3 429.4L625.5 428.6L627.6 427.8L629.8 427.2L631.9 426.7L634.4 426.2L636.8 426.0L639.3 425.9L641.9 426.0L644.5 426.2L646.8 426.6L649.2 427.0L651.6 427.6L654.0 428.3L656.2 429.0L658.2 429.9L660.4 431.0L662.5 432.3L664.4 433.7L666.2 435.3L668.0 437.0L669.5 438.7L670.9 440.5L672.3 442.4L673.5 444.5L674.7 446.8L675.6 448.9L676.5 451.1L677.3 453.5L678.1 456.0L678.8 458.5L679.4 460.9L679.9 463.4L680.3 465.9L680.7 468.5L680.9 471.0L681.1 473.6L681.3 476.1L681.3 478.7L681.3 481.3L681.2 483.9L681.0 486.5L680.7 488.9L680.3 491.2L679.8 493.7L679.1 496.1L678.3 498.4L677.3 500.7L676.2 503.2L675.1 505.2L674.0 507.3L672.8 509.4L671.5 511.4L670.2 513.4L668.7 515.3L667.1 517.2L665.4 519.1L663.5 521.0L661.5 522.9L659.4 524.8L657.2 526.8L655.5 528.3L653.6 529.8L651.6 531.3L649.6 532.9L647.5 534.5L645.4 536.0L643.3 537.6L641.3 539.2L639.2 540.8L637.1 542.5L635.0 544.1L632.8 545.8L630.8 547.5L628.8 549.2L626.9 551.1L624.7 553.6L622.7 556.2L620.9 558.9L619.4 561.6L618.1 564.4L617.0 567.2L616.2 570.2L615.7 573.1L615.4 576.1L615.2 579.0L615.4 582.0L615.7 585.0L616.2 588.0L617.0 591.0L618.2 593.8L619.9 597.0L622.2 599.9L624.8 602.4L627.8 604.6L630.5 606.1L633.4 607.3L636.5 608.3L639.8 609.0L643.0 609.2L646.2 609.0L649.3 608.3L652.3 607.3L655.0 606.0L657.4 604.5L660.2 602.0L662.4 599.3L664.2 596.4L665.5 593.6L666.4 590.5L666.8 587.3L666.9 584.2L666.5 581.2L665.3 577.4L663.3 573.9L660.6 571.0L657.1 568.7L653.2 567.3L649.3 566.6L645.4 566.8L641.6 567.7L638.1 569.3L635.1 571.6L632.8 574.5L631.2 577.6L630.3 581.1L630.1 584.6L630.6 587.9L632.8 592.3L636.1 595.4L640.5 596.8L644.6 596.7L648.5 595.1L651.5 592.6L653.2 588.8L653.6 587.0A3.2 3.2 0 0 0 647.4 585.0L646.9 587.3L646.5 588.4L645.1 589.6L643.4 590.3L641.4 590.2L639.9 589.6L638.4 588.1L637.4 586.1L637.2 584.3L637.3 582.2L637.8 580.4L638.9 578.6L640.3 576.9L641.9 575.7L643.9 574.9L646.4 574.4L648.7 574.4L651.1 574.9L653.6 575.9L655.4 577.0L656.7 578.6L657.8 580.6L658.5 582.8L658.6 584.5L658.5 586.5L658.2 588.6L657.5 590.4L656.6 592.5L655.4 594.5L654.0 596.2L652.6 597.5L651.0 598.5L649.0 599.4L647.0 600.1L644.9 600.6L643.0 600.8L641.0 600.6L638.7 600.1L636.4 599.4L634.1 598.4L632.2 597.4L630.3 596.0L628.5 594.2L627.0 592.3L625.8 590.2L625.1 588.3L624.5 586.2L624.1 583.8L623.8 581.4L623.8 579.0L623.8 576.7L624.1 574.4L624.5 572.1L625.1 569.8L625.9 567.6L626.9 565.5L628.1 563.3L629.6 561.2L631.2 559.1L633.1 556.9L634.6 555.4L636.3 553.9L638.1 552.4L640.1 550.8L642.3 549.2L644.4 547.6L646.7 545.8L648.5 544.3L650.5 542.8L652.6 541.3L654.7 539.7L656.8 538.1L658.9 536.4L660.9 534.8L662.8 533.2L665.1 531.1L667.3 529.1L669.5 527.1L671.5 525.0L673.5 522.9L675.3 520.7L677.0 518.4L678.6 516.1L680.1 513.8L681.5 511.4L682.7 509.1L683.8 506.8L685.1 504.2L686.2 501.5L687.2 498.7L688.0 495.8L688.7 492.8L689.1 490.1L689.4 487.3L689.6 484.4L689.8 481.6L689.8 478.7L689.7 475.9L689.6 473.1L689.4 470.2L689.1 467.4L688.7 464.6L688.2 461.8L687.6 459.1L687.0 456.3L686.2 453.6L685.4 450.9L684.4 448.2L683.4 445.6L682.3 443.2L680.9 440.5L679.4 437.9L677.8 435.5L676.0 433.2L674.0 431.0L672.0 429.0L669.7 427.1L667.3 425.3L664.6 423.6L661.8 422.1L659.2 421.1L656.5 420.1L653.8 419.4L651.0 418.7L648.2 418.2L645.5 417.8L642.4 417.5L639.3 417.4L636.3 417.5L633.2 417.8L630.1 418.3L627.6 419.0L625.0 419.7L622.4 420.6L619.8 421.7L617.3 422.9L614.8 424.4L612.3 426.0L609.8 427.8L607.4 429.7L605.0 431.8L602.8 434.0L600.7 436.3L598.9 438.5L597.3 440.9L595.9 443.3L594.5 445.8L593.3 448.5L592.1 451.4L591.1 453.8L590.3 456.3L589.4 458.9L588.6 461.6L587.8 464.4L587.1 467.3L586.4 470.2L585.8 473.2L585.4 475.7L585.0 478.3L584.7 480.8L584.4 483.5L584.2 486.1L584.0 488.8L583.8 491.5L583.6 494.3L583.4 497.0L583.3 499.8L583.1 502.4L583.0 505.1L582.9 507.8L582.9 510.6L582.8 513.5L582.8 516.3L582.7 519.0L582.7 521.7L582.7 524.3L582.7 526.8L582.8 529.0L582.8 532.3L582.9 535.3L583.0 538.1L583.1 540.7L583.3 543.3L583.5 545.8L583.8 548.5L584.1 551.2L584.5 554.0L584.9 556.7L585.4 559.4L585.9 562.0L586.4 564.5L586.8 566.8L587.4 569.8L588.0 572.5L588.7 575.1L589.4 577.6L590.1 580.2L591.0 582.9L591.8 585.6L592.8 588.3L593.9 591.1L595.2 593.8L596.3 596.2L597.5 598.6L598.8 601.0L600.2 603.3L601.6 605.6L603.1 607.8L605.0 610.1L606.9 612.3L608.9 614.4L610.9 616.3L613.0 618.0L615.7 619.9L618.4 621.5L621.0 622.9L623.1 624.1L624.4 624.8A5.5 5.5 0 0 0 629.6 615.2ZM601.0 262.4L601.3 260.7L601.6 258.4L602.0 255.7L602.4 252.7L602.9 249.5L603.4 246.4L603.9 243.4L604.4 240.7L605.0 238.1L605.6 235.7L606.2 233.2L606.8 230.8L607.5 228.5L608.2 226.1L609.0 223.7L609.8 221.2L610.7 218.7L611.6 216.0L612.6 213.4L613.6 210.8L614.7 208.2L615.8 205.7L616.9 203.3L618.0 201.0L619.2 198.8L620.4 196.6L621.7 194.5L623.0 192.5L624.3 190.5L625.7 188.7L627.1 186.9L628.6 185.1L630.4 183.2L632.2 181.3L634.2 179.5L636.2 177.8L638.2 176.2L640.4 174.7L642.7 173.2L644.8 172.0L647.0 170.8L649.3 169.7L651.8 168.6L654.2 167.6L656.7 166.6L659.2 165.8L661.6 165.0L663.9 164.4L666.2 163.8L668.5 163.3L670.8 162.9L673.2 162.6L675.5 162.3L677.9 162.1L680.3 162.0L682.8 161.9L685.3 161.9L687.8 161.9L690.3 162.1L692.7 162.2L695.2 162.5L697.5 162.9L699.8 163.4L702.1 164.0L704.4 164.7L706.7 165.4L709.0 166.3L711.3 167.3L713.5 168.3L715.7 169.5L717.9 170.7L719.7 171.8L721.7 173.0L723.6 174.3L725.6 175.7L727.5 177.2L729.4 178.7L731.2 180.3L732.9 181.8L734.6 183.3L736.5 185.0L738.2 186.8L739.9 188.7L741.5 190.6L743.1 192.5L744.6 194.5L746.1 196.4L747.6 198.6L749.1 200.7L750.4 202.8L751.7 204.9L752.9 207.1L754.0 209.3L755.1 211.6L756.2 213.9L757.2 216.1L758.1 218.4L758.9 220.7L759.6 223.2L760.2 225.4L760.7 227.8L761.2 230.2L761.5 232.6L761.9 235.1L762.1 237.6L762.3 240.1L762.3 242.4L762.2 244.8L762.1 247.3L761.9 249.8L761.7 252.3L761.4 254.8L761.1 257.1L760.8 259.3L760.4 262.0L759.9 264.5L759.5 266.8L758.9 269.0L758.3 271.2L757.5 273.4L756.7 275.6L755.7 277.9L754.6 280.1L753.4 282.3L752.2 284.4L751.0 286.4L749.5 288.8L747.9 290.9L746.4 292.9L744.7 294.7L742.9 296.4L741.2 297.8L739.3 299.2L737.3 300.5L735.3 301.7L733.2 302.7L731.3 303.6L728.9 304.4L726.4 305.0L724.0 305.5L721.6 305.7L719.2 305.8L716.7 305.6L714.1 305.2L711.6 304.6L709.3 303.8L707.4 302.9L705.7 301.7L704.0 300.2L702.4 298.5L700.9 296.6L699.6 294.6L698.5 292.6L697.6 290.5L696.9 288.3L696.3 285.9L695.9 283.4L695.7 281.2L695.7 278.8L695.8 276.2L695.9 273.5L696.1 270.8L696.2 268.2L696.4 265.0L696.5 262.0L696.7 259.3L697.0 256.6L697.3 253.9L697.7 251.1L698.1 248.7L698.4 246.8A4.0 4.0 0 0 0 690.6 245.2L690.1 246.8L689.4 249.4L688.7 252.3L688.0 255.4L687.6 258.3L687.3 261.2L687.0 264.4L686.8 267.8L686.6 270.2L686.4 272.8L686.3 275.7L686.2 278.7L686.2 281.7L686.5 284.6L687.0 287.8L687.8 290.8L688.7 293.8L689.9 296.7L691.4 299.4L693.1 302.0L695.1 304.6L697.3 307.0L699.8 309.2L702.6 311.1L705.7 312.6L709.0 313.7L712.3 314.5L715.6 315.0L718.8 315.2L722.1 315.2L725.3 314.9L728.5 314.3L731.6 313.5L734.7 312.4L737.3 311.3L739.8 310.0L742.3 308.6L744.7 307.0L747.0 305.3L749.1 303.6L751.5 301.4L753.6 299.0L755.5 296.6L757.3 294.1L759.0 291.6L760.4 289.3L761.8 286.9L763.1 284.4L764.3 281.8L765.4 279.2L766.5 276.6L767.3 274.0L768.1 271.5L768.7 268.9L769.3 266.3L769.8 263.6L770.2 260.7L770.5 258.3L770.8 255.9L771.1 253.3L771.4 250.6L771.6 247.9L771.7 245.2L771.8 242.5L771.7 239.9L771.7 237.0L771.5 234.2L771.2 231.4L770.8 228.6L770.4 226.0L769.9 223.3L769.4 220.8L768.7 217.9L767.9 215.1L767.0 212.4L766.1 209.8L765.0 207.2L764.0 204.7L762.9 202.1L761.7 199.6L760.4 197.1L759.0 194.6L757.5 192.1L755.9 189.6L754.5 187.4L753.0 185.2L751.4 183.0L749.6 180.7L747.7 178.4L745.7 176.0L743.4 173.7L741.6 172.1L739.7 170.4L737.6 168.7L735.5 167.0L733.3 165.3L731.1 163.7L728.8 162.1L726.5 160.7L724.1 159.3L721.5 158.0L718.8 156.8L716.1 155.6L713.4 154.6L710.6 153.7L707.8 152.9L705.0 152.2L702.2 151.6L699.3 151.2L696.4 150.8L693.6 150.7L690.7 150.6L687.9 150.6L685.1 150.7L682.3 150.8L679.7 151.0L677.0 151.2L674.3 151.5L671.7 151.9L669.0 152.3L666.4 152.8L663.7 153.5L661.1 154.2L658.4 155.0L655.8 155.9L653.0 156.9L650.3 158.0L647.6 159.2L644.9 160.5L642.3 161.9L639.8 163.3L637.3 164.8L634.7 166.5L632.2 168.4L629.9 170.3L627.6 172.4L625.5 174.5L623.4 176.6L621.4 178.9L619.7 181.0L618.1 183.1L616.6 185.3L615.2 187.5L613.8 189.8L612.5 192.1L611.2 194.5L610.0 197.0L608.8 199.6L607.7 202.3L606.6 205.0L605.6 207.8L604.7 210.6L603.8 213.4L603.0 216.1L602.2 218.8L601.4 221.4L600.8 224.0L600.1 226.5L599.5 229.0L599.0 231.6L598.5 234.1L598.0 236.7L597.6 239.3L597.1 242.3L596.7 245.4L596.3 248.6L596.0 251.8L595.7 254.9L595.4 257.6L595.2 259.9L595.0 261.6A3.0 3.0 0 0 0 601.0 262.4ZM699.3 259.7L701.7 258.1L704.3 256.4L705.9 255.9L707.7 256.0L709.8 256.4L712.3 257.2L714.4 257.7L716.7 258.6L719.0 259.6L720.8 260.7L722.4 261.8L724.0 263.3L725.5 264.8L726.5 266.1L727.3 267.3L727.8 268.6L728.0 270.2L728.0 271.8L727.7 273.8L727.2 275.5L726.5 276.9L725.4 278.3L724.2 279.5L722.6 280.5L721.2 281.0L720.3 280.8L719.1 280.2L718.4 279.3L718.0 278.7L718.0 278.8L719.1 276.3A4.5 4.5 0 0 0 710.9 272.7L709.7 274.1L708.0 279.3L709.2 283.9L711.9 287.8L715.7 290.5L720.8 292.0L725.9 291.5L730.8 289.5L733.7 287.4L736.4 284.8L738.8 281.5L740.4 277.9L741.5 274.0L742.0 269.8L741.7 265.9L740.5 261.9L738.5 257.9L736.4 255.3L734.0 252.7L731.3 250.4L728.2 248.3L724.9 246.7L721.4 245.4L717.9 244.5L714.5 243.8L710.3 243.9L706.1 244.6L702.1 246.1L698.2 249.3L695.8 252.4L694.7 254.3A3.5 3.5 0 0 0 699.3 259.7ZM752.4 334.6L750.6 334.4L747.5 334.5L743.9 334.8L740.0 335.7L737.1 337.1L734.2 339.0L731.5 341.3L729.1 344.1L727.6 346.8L726.4 349.7L725.4 352.7L724.7 355.7L724.3 358.6L724.4 362.3L725.1 365.8L726.3 368.9L727.8 371.7L731.0 375.1L734.5 377.2L738.0 378.4L743.9 377.6L748.0 374.7L750.1 369.4L750.3 367.2A4.5 4.5 0 0 0 741.7 364.8L741.0 367.8L741.0 368.3L740.2 368.6L740.0 368.6L738.7 368.1L737.1 367.2L736.2 366.3L735.6 364.9L735.0 363.2L734.7 361.2L734.7 359.4L735.0 357.6L735.5 355.5L736.2 353.4L737.0 351.4L737.9 349.9L739.0 348.3L740.4 346.8L742.1 345.4L744.0 344.3L745.8 343.4L748.6 342.7L751.3 342.0L753.6 341.4A3.5 3.5 0 0 0 752.4 334.6ZM624.0 201.6L625.2 200.2L626.8 198.4L628.6 196.4L630.5 194.3L632.5 192.5L634.3 190.9L636.1 189.3L638.0 187.7L640.0 186.2L642.1 184.9L644.2 183.7L646.5 182.4L649.0 181.2L651.6 180.1L654.2 179.2L656.7 178.4L658.9 177.9L661.3 177.5L663.7 177.4L665.9 177.5L667.9 177.8L669.6 178.3L671.9 179.3L673.8 180.7L674.6 181.7L674.3 182.3L672.9 186.0A3.8 3.8 0 0 0 680.1 188.0L681.6 185.5L682.4 178.3L680.0 174.7L676.6 171.8L672.4 169.7L669.7 169.0L666.8 168.6L663.7 168.4L660.4 168.6L657.1 169.1L654.2 169.9L651.3 170.9L648.3 172.0L645.3 173.4L642.5 174.8L639.8 176.3L637.4 178.1L635.1 179.9L633.0 181.9L631.0 183.8L629.2 185.7L627.5 187.5L625.5 190.0L623.7 192.6L622.1 195.0L620.8 197.0L620.0 198.4A2.5 2.5 0 0 0 624.0 201.6ZM740.7 174.7L741.9 175.9L744.1 177.6L746.7 179.5L749.7 181.4L752.9 182.9L756.7 183.2L760.4 183.0L763.7 182.3L766.7 181.2L770.4 178.7L773.0 175.7L774.8 172.8L775.3 167.4L774.5 165.5A3.0 3.0 0 0 0 768.5 165.5L768.6 168.3L768.2 169.2L766.9 170.6L765.1 172.0L763.3 172.8L761.5 173.3L759.3 173.5L757.1 173.5L755.1 173.1L753.3 172.9L750.7 172.1L747.9 171.0L745.4 170.0L743.3 169.3A3.0 3.0 0 0 0 740.7 174.7ZM748.9 181.8L750.9 183.0L753.7 184.5L756.7 186.1L758.9 187.5L761.3 188.7L763.2 189.8L764.7 190.8L766.2 191.9L767.8 193.7A2.5 2.5 0 0 0 772.2 191.3L772.1 189.2L770.3 185.2L768.4 183.2L766.0 181.3L763.1 179.5L759.9 178.5L756.5 177.5L753.3 176.7L751.1 176.2A3.0 3.0 0 0 0 748.9 181.8ZM665.3 405.8L663.9 404.9L661.6 403.6L658.8 402.0L655.7 400.4L652.4 399.0L649.0 397.8L646.1 397.3L643.3 397.0L640.4 396.8L637.5 396.7L634.7 396.8L632.0 396.9L629.5 397.0L626.1 397.5L622.7 398.1L619.6 398.9L616.6 399.8L613.9 400.9L610.8 402.5L607.9 404.5L605.5 406.7L603.5 409.3L601.7 413.7L601.2 418.0L601.7 422.1L605.4 427.5L611.1 430.4L617.6 428.0L619.4 426.0A4.0 4.0 0 0 0 615.6 419.0L612.5 420.6L612.9 420.6L612.8 420.0L612.3 418.9L612.0 417.7L612.1 416.0L612.5 414.7L613.2 413.6L614.4 412.4L616.1 411.2L618.1 410.1L620.1 409.2L622.4 408.5L624.9 407.8L627.6 407.3L630.5 407.0L632.7 406.8L635.1 406.6L637.6 406.5L640.1 406.5L642.5 406.6L644.9 406.8L647.0 407.2L649.5 407.6L652.4 408.5L655.4 409.5L658.2 410.6L660.7 411.6L662.7 412.2A3.5 3.5 0 0 0 665.3 405.8ZM667.6 429.3L666.5 431.8L665.3 434.9L663.9 437.2L662.4 439.0L660.6 440.6L659.2 441.4L658.3 441.7L658.0 441.7L659.0 442.6L657.5 440.5A4.2 4.2 0 0 0 650.5 445.5L650.8 447.0L655.0 451.3L659.8 451.6L664.8 449.6L667.3 447.1L669.4 444.1L671.1 440.8L672.0 436.8L672.4 433.0L672.4 430.7A2.5 2.5 0 0 0 667.6 429.3ZM684.1 464.2L682.9 466.5L681.5 469.5L680.2 471.3L678.0 473.0L676.7 473.4L679.2 474.2L677.2 472.7A4.0 4.0 0 0 0 672.8 479.3L673.1 480.4L679.3 482.6L683.5 479.8L686.8 475.7L688.1 471.8L688.7 468.2L688.9 465.8A2.5 2.5 0 0 0 684.1 464.2ZM591.3 497.9L592.4 495.7L593.7 493.0L595.2 490.2L596.6 488.3L598.2 486.6L600.0 485.1L601.8 484.0L603.3 483.5L605.1 483.3L607.2 483.4L608.2 483.8L608.1 483.8L608.8 484.6L609.1 484.8L609.6 483.6L608.1 486.7A4.5 4.5 0 0 0 615.9 491.3L617.9 490.1L620.9 483.2L619.6 479.0L617.2 475.4L612.8 472.2L608.1 471.4L603.4 471.9L598.7 473.5L595.8 475.6L593.3 478.1L591.2 480.8L589.4 483.7L588.1 487.3L587.3 491.0L586.8 494.1L586.7 496.1A2.5 2.5 0 0 0 591.3 497.9ZM598.0 580.1L598.2 578.1L598.4 575.4L598.6 572.2L598.9 568.9L599.3 566.0L599.9 563.8L601.0 561.1L602.3 558.8L603.8 556.9L605.2 555.7L606.5 555.3L608.9 555.1L611.6 554.9A3.5 3.5 0 0 0 610.4 548.1L608.8 548.1L605.2 548.4L600.8 550.3L598.7 552.5L596.8 555.3L595.2 558.6L594.1 562.2L593.7 565.3L593.6 568.6L593.6 572.1L593.7 575.3L593.9 578.0L594.0 579.9A2.0 2.0 0 0 0 598.0 580.1ZM679.8 509.7L677.9 510.3L675.7 511.2L673.2 512.2L670.5 513.2L667.9 514.0L665.5 514.6L663.6 514.8L661.3 514.8L658.8 514.5L656.3 514.0L653.7 513.3L651.3 512.4L649.1 511.5L647.2 510.4L645.3 509.2L643.5 507.8L641.8 506.3L640.3 504.7L639.1 503.1L637.8 501.0L636.7 498.7L635.8 496.3L635.2 493.9L635.0 491.8L635.1 489.8L635.5 487.6L636.1 485.4L637.0 483.5L637.9 482.1L639.0 481.0L640.4 480.0L642.2 479.1L644.1 478.4L645.9 477.9L648.0 477.8L650.5 478.0L652.8 478.6L654.4 479.3L655.7 480.4L657.0 482.0L658.0 483.8L658.4 485.1L658.2 486.3L657.5 488.3L656.6 489.6L656.6 489.6L656.2 489.9L657.8 491.1L656.3 488.6A4.5 4.5 0 0 0 648.7 493.4L648.9 495.1L653.8 500.1L659.4 500.0L665.4 496.4L667.4 492.7L668.7 488.2L668.6 482.9L667.3 479.4L665.3 476.1L662.8 473.2L659.6 470.7L656.0 469.1L652.1 468.1L648.1 467.8L644.1 468.1L641.2 468.8L638.2 469.9L635.2 471.4L632.5 473.4L630.1 475.9L628.2 478.7L626.8 481.9L625.8 485.2L625.1 488.7L625.0 492.2L625.4 495.7L626.2 499.2L627.5 502.6L629.0 505.8L630.9 508.9L632.7 511.2L634.8 513.4L637.0 515.5L639.5 517.4L642.1 519.1L644.9 520.5L647.8 521.7L650.9 522.7L654.1 523.5L657.5 524.1L660.9 524.4L664.4 524.2L667.7 523.5L670.8 522.3L673.8 521.0L676.6 519.5L679.1 518.1L681.0 517.0L682.2 516.3A3.5 3.5 0 0 0 679.8 509.7ZM654.7 511.1L652.9 509.3L650.7 507.2L649.3 505.5L647.9 502.9L647.4 501.3L647.1 502.2L648.3 499.9A4.2 4.2 0 0 0 640.7 496.1L639.5 496.9L637.6 502.7L639.5 507.4L642.7 511.5L646.0 513.7L649.2 515.2L651.3 515.9A3.0 3.0 0 0 0 654.7 511.1Z"/>
</g>
<g stroke="#7c7c7c">
<use href="#t4" stroke-width="6.3"/>
<use href="#t6" stroke-width="5.0"/>
<use href="#t7" stroke-width="4.2"/>
<use href="#t8" stroke-width="4.2"/>
<path stroke="none" fill="#7c7c7c" d="M598.1 237.6L597.7 239.2L597.2 241.4L596.6 244.1L596.0 247.0L595.4 250.2L594.8 253.4L594.3 256.6L593.8 259.6L593.5 262.2L593.2 264.8L592.8 267.4L592.6 270.1L592.3 272.8L592.1 275.5L591.9 278.2L591.8 280.9L591.8 283.7L591.9 286.3L592.0 289.0L592.2 291.7L592.4 294.4L592.7 297.1L593.0 299.8L593.5 302.6L594.0 305.4L594.6 308.1L595.3 310.9L596.0 313.6L596.9 316.3L597.8 319.0L598.7 321.8L599.8 324.4L600.9 327.1L602.0 329.8L603.2 332.5L604.4 335.0L605.7 337.5L607.1 340.0L608.5 342.6L610.0 345.1L611.4 347.5L612.9 349.9L614.4 352.3L615.8 354.4L617.1 356.5L619.1 359.3L621.0 361.8L622.9 364.1L624.7 366.2L626.4 368.2L628.1 370.1L629.6 371.9L631.2 374.1L632.7 376.1L634.2 378.1L635.7 380.2L637.3 382.3L639.1 384.4L640.7 386.3L642.5 388.2L644.2 390.1L646.0 392.0L647.9 393.9L649.7 395.7L651.4 397.5L653.5 399.6L655.6 401.5L657.6 403.5L659.6 405.3L661.6 407.2L663.5 409.0L665.4 410.9L667.3 412.9L669.2 414.8L671.0 416.7L672.7 418.5L674.3 420.3L676.1 422.5L677.7 424.6L679.2 426.6L680.6 428.7L681.9 430.8L683.0 432.8L683.9 434.8L684.7 436.9L685.6 439.3L686.6 442.2L687.4 444.5L688.3 447.0L689.2 449.6L690.0 452.4L690.9 455.2L691.8 458.0L692.6 460.9L693.2 463.2L693.8 465.6L694.4 467.9L695.0 470.3L695.5 472.8L696.1 475.2L696.6 477.7L697.0 480.1L697.5 482.6L697.9 485.0L698.2 487.5L698.5 490.1L698.8 492.6L699.1 495.1L699.4 497.7L699.6 500.2L699.8 502.7L699.9 505.2L700.1 508.1L700.3 510.9L700.4 513.7L700.5 516.5L700.6 519.3L700.6 521.9L700.6 524.4L700.4 526.8L700.2 529.7L699.8 532.3L699.4 534.9L698.8 537.3L698.2 539.6L697.6 542.0L696.7 544.5L695.8 546.8L694.7 549.2L693.5 551.8L692.2 554.6L691.2 557.2L690.1 559.8L689.1 562.4L688.0 565.1L686.9 567.9L685.7 570.6L684.7 573.0L683.7 575.4L682.6 577.9L681.5 580.3L680.3 582.8L679.2 585.1L678.0 587.4L676.6 590.0L675.2 592.6L673.7 595.1L672.3 597.5L670.8 599.8L669.3 602.1L667.7 604.2L666.0 606.4L664.2 608.5L662.6 610.5L661.0 612.2L659.6 613.6L656.6 615.6L653.9 616.9A3.8 3.8 0 0 0 658.1 623.1L660.1 621.9L664.4 618.4L665.9 616.8L667.6 614.9L669.4 612.9L671.2 610.6L673.0 608.3L674.7 605.9L676.4 603.5L678.0 601.1L679.5 598.5L681.0 595.9L682.5 593.3L684.0 590.6L685.2 588.2L686.5 585.8L687.7 583.3L688.9 580.8L690.1 578.3L691.2 575.8L692.3 573.4L693.5 570.6L694.6 567.8L695.7 565.1L696.8 562.4L697.8 559.8L698.8 557.4L699.9 554.7L701.1 552.3L702.3 549.7L703.4 547.0L704.4 544.0L705.1 541.5L705.8 538.9L706.4 536.3L706.9 533.4L707.3 530.4L707.6 527.2L707.7 524.7L707.7 522.0L707.7 519.2L707.7 516.3L707.6 513.4L707.4 510.5L707.2 507.6L707.1 504.8L706.9 502.2L706.7 499.6L706.5 497.1L706.2 494.4L705.9 491.8L705.6 489.2L705.3 486.6L704.9 484.0L704.5 481.4L704.1 478.8L703.6 476.3L703.0 473.7L702.5 471.2L701.9 468.7L701.3 466.2L700.7 463.8L700.1 461.4L699.4 459.1L698.6 456.1L697.7 453.1L696.9 450.2L695.9 447.4L695.1 444.7L694.2 442.2L693.4 439.8L692.3 436.9L691.4 434.4L690.5 432.0L689.4 429.6L688.1 427.2L686.6 424.8L685.1 422.5L683.4 420.2L681.6 418.0L679.7 415.7L678.0 413.7L676.2 411.8L674.3 409.8L672.4 407.8L670.4 405.9L668.5 404.0L666.5 402.0L664.5 400.1L662.5 398.2L660.5 396.3L658.5 394.4L656.6 392.5L654.8 390.7L653.1 388.9L651.4 387.0L649.7 385.1L648.0 383.2L646.4 381.4L644.9 379.6L643.4 377.6L641.9 375.6L640.6 373.7L639.2 371.6L637.7 369.4L636.0 367.1L634.5 365.0L632.9 362.9L631.3 360.8L629.7 358.7L628.1 356.4L626.5 354.1L624.9 351.5L623.7 349.5L622.4 347.3L621.1 345.1L619.7 342.7L618.4 340.3L617.1 337.9L615.8 335.4L614.6 333.0L613.4 330.6L612.4 328.3L611.2 325.8L610.2 323.2L609.1 320.7L608.2 318.2L607.3 315.7L606.5 313.3L605.7 310.8L605.0 308.3L604.4 305.9L603.9 303.4L603.5 301.0L603.2 298.5L602.9 296.0L602.7 293.5L602.5 291.0L602.4 288.5L602.3 285.9L602.2 283.3L602.1 280.8L602.0 278.3L601.9 275.7L601.9 273.2L601.9 270.6L601.9 268.0L602.0 265.5L602.1 262.9L602.2 260.4L602.3 257.5L602.5 254.4L602.8 251.2L603.1 248.1L603.4 245.1L603.6 242.4L603.8 240.1L603.9 238.4A2.9 2.9 0 0 0 598.1 237.6ZM629.2 615.9L627.5 615.2L625.3 614.2L622.8 613.0L620.5 611.8L618.5 610.6L616.6 609.3L614.8 607.8L613.0 606.3L611.3 604.6L609.7 602.7L608.4 600.9L607.0 599.0L605.7 596.9L604.5 594.7L603.3 592.6L602.2 590.5L601.1 588.0L600.1 585.5L599.2 583.0L598.4 580.5L597.6 578.0L596.9 575.5L596.3 573.2L595.7 570.8L595.1 568.2L594.5 565.3L594.0 563.0L593.6 560.6L593.1 558.1L592.7 555.5L592.2 552.8L591.9 550.2L591.5 547.6L591.3 545.1L591.1 542.7L590.9 540.2L590.8 537.7L590.7 535.1L590.6 532.2L590.6 529.0L590.6 526.7L590.5 524.3L590.5 521.7L590.6 519.1L590.6 516.4L590.6 513.6L590.7 510.8L590.7 508.1L590.8 505.4L590.9 502.7L591.1 500.2L591.2 497.5L591.4 494.7L591.6 492.1L591.7 489.4L592.0 486.8L592.2 484.3L592.5 481.8L592.8 479.3L593.1 476.9L593.5 474.6L594.1 471.8L594.7 469.1L595.4 466.4L596.1 463.7L596.9 461.2L597.7 458.8L598.5 456.5L599.3 454.3L600.4 451.7L601.5 449.3L602.7 447.1L603.9 445.1L605.2 443.2L606.7 441.3L608.4 439.4L610.4 437.5L612.4 435.7L614.6 434.0L616.7 432.4L618.9 431.0L620.9 429.9L623.1 428.8L625.2 427.9L627.4 427.2L629.6 426.5L631.7 426.0L634.3 425.5L636.8 425.3L639.3 425.2L641.9 425.3L644.6 425.5L646.9 425.9L649.3 426.3L651.8 426.9L654.2 427.6L656.5 428.4L658.5 429.2L660.7 430.4L662.8 431.7L664.8 433.2L666.7 434.8L668.4 436.5L670.0 438.2L671.5 440.1L672.8 442.1L674.1 444.2L675.3 446.5L676.2 448.6L677.1 450.9L678.0 453.3L678.7 455.8L679.4 458.3L680.0 460.8L680.5 463.3L681.0 465.8L681.3 468.4L681.6 471.0L681.8 473.5L681.9 476.1L682.0 478.7L681.9 481.4L681.8 484.0L681.6 486.6L681.4 489.0L681.0 491.3L680.4 493.9L679.7 496.3L678.9 498.7L677.9 501.0L676.8 503.5L675.7 505.5L674.6 507.6L673.4 509.7L672.1 511.8L670.7 513.8L669.2 515.8L667.6 517.7L665.9 519.6L664.0 521.5L662.0 523.4L659.9 525.3L657.6 527.3L655.9 528.8L654.0 530.3L652.0 531.9L650.0 533.4L647.9 535.0L645.8 536.6L643.7 538.2L641.8 539.7L639.7 541.4L637.5 543.0L635.4 544.6L633.2 546.3L631.2 548.0L629.2 549.7L627.4 551.6L625.2 554.1L623.2 556.6L621.5 559.2L620.0 561.9L618.7 564.6L617.7 567.5L616.9 570.3L616.3 573.2L616.0 576.1L615.9 579.0L616.0 581.9L616.3 584.9L616.9 587.9L617.7 590.8L618.8 593.5L620.5 596.6L622.7 599.4L625.2 601.9L628.1 604.0L630.8 605.5L633.6 606.7L636.7 607.7L639.9 608.3L643.0 608.6L646.1 608.3L649.1 607.6L652.0 606.6L654.7 605.4L657.1 603.9L659.7 601.6L661.9 598.9L663.6 596.1L664.8 593.3L665.7 590.3L666.2 587.3L666.2 584.3L665.9 581.3L664.7 577.7L662.8 574.3L660.2 571.4L656.8 569.3L653.1 567.9L649.3 567.2L645.5 567.4L641.8 568.3L638.4 569.8L635.5 572.1L633.3 574.8L631.7 577.8L630.8 581.2L630.7 584.6L631.2 587.7L633.3 591.9L636.4 594.9L640.5 596.3L644.5 596.2L648.2 594.7L651.1 592.3L652.7 588.7L653.1 586.9A2.7 2.7 0 0 0 647.9 585.1L647.4 587.4L646.9 588.7L645.3 590.0L643.5 590.8L641.3 590.8L639.6 590.1L637.9 588.4L636.8 586.3L636.6 584.3L636.8 582.1L637.3 580.2L638.4 578.3L639.9 576.5L641.6 575.2L643.7 574.3L646.3 573.8L648.7 573.8L651.3 574.3L653.9 575.3L655.8 576.6L657.3 578.2L658.4 580.4L659.1 582.7L659.3 584.5L659.2 586.6L658.8 588.7L658.2 590.7L657.2 592.8L656.0 594.9L654.5 596.7L652.9 598.1L651.3 599.1L649.3 600.0L647.2 600.8L645.0 601.3L643.0 601.4L640.9 601.3L638.5 600.8L636.1 600.0L633.8 599.0L631.9 598.0L629.8 596.5L628.0 594.7L626.5 592.7L625.2 590.5L624.5 588.5L623.8 586.3L623.4 583.9L623.2 581.4L623.1 579.0L623.2 576.6L623.4 574.3L623.8 571.9L624.5 569.6L625.3 567.4L626.3 565.2L627.6 563.0L629.0 560.8L630.7 558.6L632.6 556.4L634.1 554.9L635.8 553.4L637.7 551.9L639.7 550.3L641.8 548.7L644.0 547.0L646.2 545.3L648.1 543.8L650.1 542.3L652.2 540.7L654.3 539.1L656.4 537.5L658.4 535.9L660.4 534.3L662.4 532.7L664.7 530.6L666.9 528.6L669.0 526.6L671.0 524.5L673.0 522.4L674.8 520.2L676.5 518.0L678.1 515.7L679.5 513.4L680.9 511.1L682.1 508.8L683.2 506.5L684.4 503.9L685.5 501.2L686.5 498.5L687.3 495.7L688.0 492.7L688.4 490.0L688.8 487.2L689.0 484.4L689.1 481.5L689.1 478.7L689.1 475.9L688.9 473.1L688.7 470.3L688.4 467.5L688.0 464.7L687.5 461.9L687.0 459.2L686.3 456.5L685.6 453.8L684.7 451.1L683.8 448.4L682.8 445.9L681.7 443.5L680.3 440.8L678.9 438.3L677.3 435.9L675.5 433.6L673.6 431.5L671.5 429.5L669.3 427.6L666.9 425.8L664.3 424.2L661.5 422.8L659.0 421.7L656.3 420.8L653.6 420.0L650.8 419.4L648.1 418.8L645.4 418.5L642.4 418.2L639.3 418.1L636.3 418.2L633.3 418.5L630.3 419.0L627.7 419.6L625.2 420.4L622.7 421.3L620.1 422.3L617.6 423.5L615.1 425.0L612.7 426.5L610.2 428.3L607.8 430.2L605.5 432.3L603.3 434.5L601.3 436.7L599.5 438.9L597.9 441.2L596.5 443.6L595.1 446.1L593.9 448.8L592.7 451.7L591.8 454.0L590.9 456.5L590.0 459.1L589.2 461.8L588.5 464.5L587.7 467.4L587.1 470.4L586.5 473.4L586.1 475.8L585.7 478.4L585.4 480.9L585.1 483.5L584.9 486.2L584.6 488.9L584.4 491.6L584.3 494.3L584.1 497.1L583.9 499.8L583.8 502.4L583.7 505.1L583.6 507.9L583.5 510.7L583.5 513.5L583.4 516.3L583.4 519.0L583.4 521.7L583.4 524.3L583.4 526.7L583.4 529.0L583.5 532.3L583.5 535.3L583.7 538.1L583.8 540.7L584.0 543.2L584.2 545.8L584.5 548.4L584.8 551.1L585.2 553.9L585.6 556.6L586.1 559.3L586.6 561.9L587.0 564.4L587.5 566.7L588.1 569.7L588.7 572.4L589.3 574.9L590.0 577.5L590.8 580.0L591.6 582.7L592.5 585.4L593.5 588.1L594.5 590.8L595.8 593.5L596.9 595.9L598.1 598.2L599.4 600.6L600.8 602.9L602.2 605.2L603.7 607.3L605.5 609.6L607.4 611.8L609.4 613.8L611.4 615.7L613.5 617.4L616.1 619.2L618.8 620.8L621.3 622.2L623.5 623.3L624.8 624.1A4.6 4.6 0 0 0 629.2 615.9ZM600.5 262.3L600.8 260.6L601.1 258.3L601.5 255.6L601.9 252.6L602.4 249.4L602.8 246.3L603.4 243.3L603.9 240.6L604.4 238.0L605.0 235.5L605.6 233.1L606.2 230.7L606.9 228.3L607.6 225.9L608.4 223.5L609.2 221.0L610.1 218.5L611.0 215.8L612.0 213.2L613.0 210.6L614.0 208.0L615.1 205.4L616.2 203.0L617.4 200.7L618.6 198.4L619.8 196.2L621.0 194.1L622.3 192.1L623.7 190.1L625.1 188.2L626.5 186.4L628.0 184.6L629.8 182.6L631.7 180.8L633.6 179.0L635.6 177.2L637.7 175.6L639.9 174.0L642.2 172.6L644.4 171.3L646.6 170.1L649.0 168.9L651.4 167.8L653.9 166.8L656.4 165.8L658.9 165.0L661.3 164.2L663.7 163.5L666.0 163.0L668.3 162.5L670.7 162.1L673.1 161.7L675.4 161.5L677.8 161.3L680.3 161.1L682.8 161.0L685.3 161.0L687.8 161.0L690.3 161.1L692.8 161.3L695.3 161.6L697.7 162.0L700.0 162.4L702.3 163.0L704.7 163.7L707.0 164.5L709.3 165.4L711.6 166.4L713.9 167.4L716.2 168.6L718.4 169.8L720.3 170.9L722.3 172.1L724.2 173.5L726.2 174.9L728.2 176.4L730.1 177.9L731.9 179.5L733.6 181.0L735.3 182.5L737.2 184.3L739.0 186.1L740.7 188.0L742.3 190.0L743.9 191.9L745.4 193.9L746.9 195.9L748.4 198.1L749.9 200.2L751.2 202.3L752.5 204.5L753.7 206.7L754.8 208.9L755.9 211.3L757.0 213.5L758.0 215.8L758.9 218.1L759.7 220.5L760.4 223.0L761.0 225.3L761.5 227.6L761.9 230.0L762.3 232.5L762.6 235.0L762.9 237.5L763.0 240.1L763.0 242.4L763.0 244.8L762.8 247.3L762.6 249.9L762.4 252.4L762.1 254.8L761.9 257.2L761.6 259.4L761.1 262.2L760.7 264.7L760.2 267.0L759.6 269.2L759.0 271.4L758.2 273.6L757.4 275.9L756.4 278.2L755.3 280.5L754.1 282.7L752.9 284.8L751.6 286.8L750.1 289.2L748.5 291.4L746.9 293.4L745.2 295.2L743.4 297.0L741.6 298.4L739.7 299.8L737.7 301.1L735.6 302.4L733.6 303.4L731.6 304.3L729.1 305.1L726.6 305.8L724.1 306.2L721.6 306.5L719.1 306.5L716.6 306.3L713.9 305.9L711.4 305.3L709.0 304.5L707.0 303.5L705.2 302.3L703.4 300.8L701.8 299.0L700.3 297.0L698.9 294.9L697.8 292.9L696.9 290.8L696.2 288.5L695.6 286.0L695.2 283.5L695.0 281.3L694.9 278.8L695.0 276.1L695.2 273.4L695.3 270.7L695.5 268.2L695.6 264.9L695.8 261.9L696.0 259.2L696.2 256.5L696.6 253.8L697.1 251.0L697.5 248.5L697.8 246.7A3.4 3.4 0 0 0 691.2 245.3L690.7 247.0L690.1 249.5L689.4 252.4L688.8 255.5L688.4 258.4L688.0 261.3L687.7 264.4L687.5 267.8L687.4 270.2L687.2 272.9L687.0 275.8L686.9 278.7L687.0 281.6L687.2 284.5L687.8 287.6L688.5 290.6L689.4 293.6L690.6 296.4L692.1 299.1L693.7 301.6L695.7 304.1L697.8 306.5L700.3 308.6L703.0 310.5L706.0 311.9L709.2 313.0L712.4 313.8L715.7 314.3L718.9 314.5L722.0 314.5L725.2 314.1L728.3 313.6L731.4 312.8L734.4 311.7L737.0 310.6L739.5 309.3L741.9 307.9L744.3 306.4L746.5 304.7L748.6 303.0L750.9 300.8L753.0 298.5L754.9 296.2L756.7 293.7L758.4 291.2L759.8 288.9L761.1 286.5L762.4 284.0L763.6 281.5L764.7 278.9L765.8 276.4L766.6 273.8L767.4 271.3L768.0 268.8L768.5 266.2L769.0 263.4L769.4 260.6L769.8 258.2L770.1 255.8L770.4 253.2L770.6 250.5L770.8 247.8L770.9 245.1L771.0 242.5L771.0 239.9L770.9 237.0L770.7 234.2L770.4 231.5L770.0 228.8L769.6 226.1L769.1 223.5L768.6 221.0L767.9 218.1L767.1 215.4L766.2 212.7L765.3 210.1L764.3 207.6L763.2 205.1L762.1 202.5L760.9 200.1L759.6 197.6L758.2 195.1L756.8 192.6L755.1 190.1L753.7 188.0L752.2 185.8L750.6 183.6L748.8 181.3L747.0 179.0L744.9 176.8L742.7 174.5L740.9 172.9L739.0 171.2L737.0 169.5L734.9 167.8L732.7 166.2L730.5 164.5L728.2 163.0L726.0 161.6L723.6 160.2L721.0 158.9L718.4 157.7L715.7 156.6L713.0 155.6L710.3 154.6L707.6 153.8L704.8 153.1L702.0 152.6L699.2 152.1L696.3 151.8L693.5 151.6L690.7 151.5L687.9 151.5L685.1 151.6L682.4 151.7L679.7 151.9L677.1 152.1L674.4 152.4L671.8 152.7L669.2 153.2L666.6 153.7L663.9 154.3L661.3 155.0L658.7 155.8L656.0 156.7L653.3 157.7L650.6 158.8L647.9 160.0L645.3 161.2L642.7 162.6L640.2 164.0L637.8 165.4L635.2 167.2L632.7 169.0L630.4 170.9L628.1 172.9L626.0 175.0L623.9 177.2L622.0 179.4L620.3 181.4L618.7 183.5L617.2 185.7L615.8 187.9L614.4 190.2L613.1 192.5L611.8 194.9L610.6 197.3L609.4 199.9L608.3 202.6L607.3 205.3L606.3 208.1L605.3 210.9L604.4 213.6L603.6 216.3L602.8 219.0L602.0 221.6L601.4 224.1L600.7 226.7L600.1 229.2L599.6 231.7L599.1 234.2L598.6 236.8L598.1 239.4L597.7 242.3L597.2 245.5L596.8 248.7L596.5 251.9L596.2 255.0L595.9 257.7L595.7 260.0L595.5 261.7A2.5 2.5 0 0 0 600.5 262.3ZM698.9 259.2L701.2 257.6L703.8 255.8L705.6 255.1L707.5 255.0L709.8 255.4L712.4 256.1L714.6 256.7L717.1 257.5L719.4 258.6L721.4 259.7L723.1 260.9L724.8 262.4L726.4 264.0L727.5 265.4L728.3 266.9L728.9 268.4L729.1 270.2L729.1 272.0L728.8 274.1L728.2 276.0L727.3 277.5L726.0 279.1L724.7 280.3L722.8 281.4L721.2 281.9L719.9 281.6L718.5 280.8L717.6 279.7L717.2 278.8L717.3 278.4L718.5 276.0A3.8 3.8 0 0 0 711.5 273.0L710.4 274.5L708.8 279.2L709.9 283.6L712.5 287.2L716.1 289.8L720.8 291.1L725.7 290.7L730.3 288.7L733.0 286.7L735.6 284.2L737.8 281.0L739.4 277.5L740.5 273.8L740.9 269.8L740.5 266.1L739.5 262.3L737.5 258.6L735.6 256.0L733.2 253.6L730.6 251.3L727.6 249.3L724.4 247.7L721.0 246.5L717.6 245.5L714.4 244.9L710.3 244.9L706.2 245.5L702.4 246.9L698.7 249.8L696.2 252.9L695.1 254.8A2.9 2.9 0 0 0 698.9 259.2ZM752.5 335.1L750.6 335.1L747.6 335.1L744.0 335.5L740.3 336.4L737.5 337.8L734.7 339.6L732.1 341.8L729.8 344.6L728.3 347.2L727.1 350.0L726.2 352.9L725.5 355.8L725.1 358.7L725.2 362.2L725.9 365.6L727.0 368.6L728.5 371.3L731.5 374.5L734.8 376.5L738.2 377.6L743.6 376.9L747.4 374.2L749.4 369.3L749.6 367.0A3.8 3.8 0 0 0 742.4 365.0L741.8 367.9L741.6 368.8L740.5 369.3L739.8 369.4L738.4 368.9L736.6 367.8L735.5 366.7L734.8 365.3L734.2 363.4L733.9 361.3L733.9 359.3L734.1 357.5L734.7 355.3L735.4 353.1L736.3 351.1L737.2 349.4L738.4 347.7L739.9 346.2L741.7 344.8L743.7 343.6L745.6 342.7L748.5 342.0L751.3 341.4L753.5 340.9A2.9 2.9 0 0 0 752.5 335.1ZM623.6 201.3L624.9 200.0L626.4 198.2L628.2 196.1L630.1 194.0L632.1 192.1L633.9 190.5L635.7 188.8L637.6 187.2L639.6 185.7L641.7 184.3L643.8 183.1L646.1 181.8L648.7 180.6L651.3 179.5L654.0 178.5L656.5 177.7L658.8 177.2L661.2 176.8L663.7 176.7L666.0 176.8L668.1 177.1L669.9 177.6L672.3 178.7L674.3 180.2L675.2 181.4L674.9 182.5L673.5 186.1A3.1 3.1 0 0 0 679.5 187.9L681.1 185.2L681.8 178.6L679.5 175.2L676.3 172.4L672.1 170.4L669.5 169.7L666.7 169.3L663.7 169.2L660.5 169.3L657.2 169.8L654.4 170.5L651.5 171.5L648.5 172.7L645.6 174.0L642.8 175.4L640.2 176.9L637.7 178.6L635.5 180.4L633.4 182.3L631.4 184.2L629.6 186.1L627.9 187.9L625.9 190.4L624.1 192.9L622.5 195.3L621.2 197.3L620.4 198.7A2.1 2.1 0 0 0 623.6 201.3ZM740.9 174.3L742.2 175.4L744.4 177.1L747.0 178.9L750.0 180.7L753.1 182.1L756.8 182.5L760.3 182.2L763.5 181.5L766.4 180.5L770.0 178.1L772.6 175.3L774.2 172.5L774.7 167.5L774.0 165.5A2.5 2.5 0 0 0 769.0 165.5L769.1 168.2L768.8 169.5L767.4 171.0L765.5 172.6L763.6 173.5L761.7 174.0L759.4 174.3L757.1 174.3L754.9 173.9L753.0 173.6L750.3 172.7L747.6 171.5L745.1 170.5L743.1 169.7A2.5 2.5 0 0 0 740.9 174.3ZM749.0 181.3L751.1 182.5L753.9 183.9L757.0 185.5L759.3 186.9L761.7 188.1L763.6 189.3L765.1 190.4L766.7 191.7L768.2 193.5A2.1 2.1 0 0 0 771.8 191.5L771.6 189.4L769.9 185.6L768.0 183.7L765.6 181.9L762.7 180.1L759.7 179.1L756.2 178.0L753.1 177.2L751.0 176.7A2.5 2.5 0 0 0 749.0 181.3ZM665.1 406.3L663.6 405.4L661.3 404.1L658.6 402.6L655.4 401.1L652.2 399.7L648.8 398.6L646.0 398.1L643.2 397.8L640.4 397.6L637.5 397.5L634.8 397.5L632.1 397.6L629.6 397.8L626.2 398.2L622.9 398.9L619.8 399.7L616.9 400.6L614.3 401.7L611.2 403.2L608.5 405.1L606.1 407.3L604.2 409.7L602.6 413.9L602.1 417.9L602.6 421.8L606.0 426.9L611.2 429.6L617.2 427.4L619.1 425.4A3.4 3.4 0 0 0 615.9 419.6L612.9 421.2L612.8 421.4L612.2 420.6L611.4 419.2L611.2 417.8L611.3 415.8L611.8 414.3L612.6 413.1L613.9 411.8L615.6 410.5L617.7 409.3L619.8 408.5L622.1 407.7L624.7 407.1L627.5 406.5L630.4 406.2L632.7 406.0L635.1 405.8L637.6 405.7L640.1 405.7L642.6 405.8L645.0 406.1L647.2 406.4L649.8 406.9L652.7 407.8L655.7 408.9L658.5 410.1L660.9 411.0L662.9 411.7A2.9 2.9 0 0 0 665.1 406.3ZM668.0 429.4L667.0 431.9L665.8 435.1L664.5 437.5L663.0 439.4L661.2 441.1L659.6 442.0L658.4 442.5L657.8 442.5L658.3 443.0L656.9 440.9A3.6 3.6 0 0 0 651.1 445.1L651.5 446.7L655.2 450.5L659.7 450.8L664.4 449.0L666.7 446.6L668.8 443.7L670.5 440.5L671.5 436.6L671.9 432.9L672.0 430.6A2.1 2.1 0 0 0 668.0 429.4ZM684.5 464.3L683.4 466.7L682.0 469.7L680.7 471.7L678.5 473.5L676.9 474.2L678.8 474.7L676.9 473.2A3.4 3.4 0 0 0 673.1 478.8L673.6 479.9L679.1 481.8L683.0 479.3L686.3 475.3L687.6 471.6L688.2 468.0L688.5 465.7A2.1 2.1 0 0 0 684.5 464.3ZM591.0 497.7L592.0 495.6L593.2 492.8L594.6 490.0L596.0 487.9L597.6 486.2L599.5 484.6L601.3 483.3L602.9 482.7L605.0 482.3L607.3 482.5L608.6 482.9L608.9 483.1L609.7 484.2L610.0 484.7L610.3 484.2L608.8 487.1A3.8 3.8 0 0 0 615.2 490.9L617.3 489.6L620.0 483.3L618.8 479.5L616.4 476.0L612.4 473.1L608.0 472.4L603.5 472.8L599.1 474.3L596.3 476.3L593.8 478.6L591.7 481.3L590.0 484.1L588.7 487.6L587.8 491.1L587.3 494.3L587.0 496.3A2.1 2.1 0 0 0 591.0 497.7ZM597.7 580.1L597.9 578.1L598.0 575.4L598.2 572.2L598.5 568.9L598.9 565.9L599.4 563.6L600.5 560.9L601.9 558.5L603.4 556.6L604.9 555.3L606.4 554.7L608.9 554.5L611.5 554.4A2.9 2.9 0 0 0 610.5 548.6L608.8 548.6L605.3 548.9L601.1 550.7L599.1 552.9L597.2 555.6L595.7 558.8L594.6 562.4L594.2 565.3L594.0 568.6L594.0 572.1L594.1 575.3L594.2 578.0L594.3 579.9A1.7 1.7 0 0 0 597.7 580.1ZM680.0 510.3L678.1 510.9L676.0 511.8L673.5 512.8L670.8 513.8L668.1 514.7L665.6 515.3L663.6 515.5L661.2 515.5L658.7 515.3L656.1 514.8L653.5 514.1L651.0 513.2L648.8 512.2L646.8 511.1L644.8 509.9L643.0 508.4L641.3 506.9L639.7 505.3L638.4 503.6L637.1 501.4L635.9 499.0L635.0 496.5L634.4 494.1L634.2 491.8L634.3 489.7L634.7 487.4L635.4 485.1L636.3 483.1L637.3 481.6L638.4 480.4L640.0 479.3L641.9 478.3L643.9 477.6L645.7 477.1L648.0 477.0L650.6 477.2L653.0 477.8L654.9 478.6L656.2 479.8L657.6 481.5L658.7 483.5L659.2 485.0L659.1 486.4L658.3 488.7L657.3 490.2L656.8 490.5L656.0 490.7L657.1 491.4L655.7 489.0A3.8 3.8 0 0 0 649.3 493.0L649.6 494.8L654.0 499.3L659.2 499.2L664.7 495.8L666.6 492.4L667.9 488.1L667.8 483.0L666.6 479.7L664.7 476.6L662.2 473.7L659.1 471.4L655.7 469.8L652.0 468.9L648.1 468.6L644.3 468.9L641.4 469.6L638.5 470.6L635.7 472.1L633.0 474.0L630.7 476.4L628.9 479.1L627.5 482.2L626.5 485.4L625.9 488.8L625.8 492.2L626.2 495.5L627.0 498.9L628.2 502.3L629.7 505.5L631.6 508.4L633.3 510.7L635.3 512.9L637.5 514.9L639.9 516.7L642.5 518.4L645.2 519.8L648.1 521.0L651.1 522.0L654.3 522.8L657.6 523.3L661.0 523.6L664.4 523.5L667.5 522.8L670.6 521.7L673.6 520.3L676.3 518.9L678.8 517.6L680.8 516.5L682.0 515.7A2.9 2.9 0 0 0 680.0 510.3ZM654.5 511.4L652.6 509.8L650.3 507.7L648.8 506.0L647.2 503.3L646.7 501.4L646.5 501.8L647.7 499.6A3.6 3.6 0 0 0 641.3 496.4L640.1 497.4L638.3 502.6L640.2 507.1L643.2 511.0L646.4 513.2L649.5 514.8L651.5 515.6A2.5 2.5 0 0 0 654.5 511.4Z"/>
</g>
<g stroke="#a0a0a0">
<use href="#t4" stroke-width="5.1"/>
<use href="#t6" stroke-width="4.1"/>
<use href="#t7" stroke-width="3.4"/>
<use href="#t8" stroke-width="3.4"/>
<path stroke="none" fill="#a0a0a0" d="M598.6 237.7L598.3 239.3L597.8 241.5L597.3 244.2L596.7 247.1L596.1 250.3L595.6 253.5L595.0 256.7L594.6 259.7L594.3 262.3L594.0 264.8L593.7 267.5L593.5 270.1L593.2 272.8L593.0 275.5L592.9 278.2L592.8 280.9L592.8 283.6L592.9 286.3L593.0 288.9L593.2 291.6L593.4 294.3L593.7 297.0L594.0 299.7L594.4 302.4L594.9 305.2L595.5 307.9L596.2 310.6L596.9 313.3L597.8 316.0L598.7 318.7L599.6 321.4L600.7 324.1L601.8 326.8L602.9 329.4L604.1 332.1L605.3 334.6L606.6 337.1L607.9 339.6L609.3 342.1L610.8 344.6L612.2 347.1L613.7 349.5L615.1 351.8L616.5 354.0L617.8 356.0L619.8 358.8L621.7 361.3L623.5 363.5L625.3 365.7L627.0 367.7L628.7 369.6L630.2 371.4L631.9 373.6L633.4 375.7L634.8 377.7L636.3 379.7L637.9 381.8L639.6 384.0L641.3 385.8L643.0 387.7L644.8 389.6L646.6 391.5L648.4 393.4L650.2 395.2L651.9 397.0L654.0 399.1L656.1 401.0L658.1 403.0L660.1 404.8L662.1 406.7L664.0 408.5L665.9 410.5L667.8 412.4L669.7 414.3L671.5 416.2L673.2 418.0L674.8 419.9L676.6 422.0L678.3 424.1L679.8 426.2L681.2 428.3L682.5 430.4L683.6 432.5L684.5 434.5L685.4 436.7L686.3 439.1L687.3 442.0L688.1 444.3L688.9 446.8L689.8 449.4L690.7 452.1L691.6 455.0L692.4 457.9L693.2 460.7L693.8 463.0L694.4 465.4L695.0 467.8L695.6 470.2L696.2 472.6L696.7 475.1L697.2 477.6L697.7 480.0L698.1 482.5L698.5 484.9L698.9 487.5L699.2 490.0L699.5 492.5L699.8 495.1L700.0 497.6L700.2 500.2L700.4 502.7L700.6 505.2L700.8 508.0L701.0 510.9L701.1 513.7L701.2 516.5L701.3 519.3L701.3 521.9L701.2 524.4L701.1 526.8L700.9 529.7L700.5 532.4L700.0 535.0L699.5 537.4L698.9 539.8L698.2 542.2L697.4 544.7L696.4 547.1L695.3 549.5L694.1 552.0L692.8 554.9L691.8 557.4L690.8 560.0L689.7 562.7L688.6 565.4L687.5 568.1L686.4 570.8L685.3 573.2L684.3 575.7L683.2 578.1L682.1 580.6L680.9 583.0L679.8 585.4L678.6 587.7L677.2 590.3L675.7 592.9L674.3 595.4L672.8 597.9L671.3 600.2L669.8 602.4L668.2 604.6L666.5 606.8L664.7 608.9L663.0 610.9L661.5 612.6L660.1 614.1L657.0 616.2L654.3 617.5A3.1 3.1 0 0 0 657.7 622.5L659.8 621.3L663.9 617.9L665.4 616.4L667.1 614.5L668.9 612.4L670.7 610.2L672.5 607.9L674.2 605.6L675.8 603.2L677.4 600.7L679.0 598.2L680.5 595.6L682.0 593.0L683.4 590.3L684.7 587.9L685.9 585.5L687.1 583.0L688.3 580.5L689.4 578.0L690.6 575.6L691.6 573.2L692.8 570.4L694.0 567.6L695.1 564.8L696.2 562.1L697.2 559.6L698.2 557.1L699.3 554.5L700.5 552.0L701.7 549.4L702.8 546.8L703.8 543.8L704.5 541.3L705.1 538.8L705.7 536.1L706.2 533.3L706.6 530.4L706.9 527.2L707.0 524.6L707.1 522.0L707.0 519.2L707.0 516.3L706.9 513.5L706.7 510.6L706.6 507.7L706.4 504.8L706.2 502.3L706.0 499.7L705.8 497.1L705.5 494.5L705.3 491.9L705.0 489.3L704.6 486.7L704.3 484.1L703.9 481.5L703.4 479.0L702.9 476.4L702.4 473.9L701.8 471.3L701.2 468.8L700.6 466.4L700.0 464.0L699.4 461.6L698.8 459.3L698.0 456.3L697.1 453.3L696.2 450.4L695.3 447.6L694.4 444.9L693.5 442.4L692.7 440.0L691.7 437.2L690.8 434.6L689.8 432.3L688.8 429.9L687.5 427.6L686.1 425.2L684.5 422.9L682.9 420.6L681.1 418.4L679.2 416.1L677.5 414.2L675.7 412.2L673.8 410.3L671.9 408.3L670.0 406.4L668.0 404.5L666.1 402.5L664.1 400.6L662.0 398.7L660.0 396.8L658.0 394.9L656.1 393.0L654.4 391.2L652.6 389.3L650.9 387.5L649.1 385.6L647.5 383.7L645.9 381.9L644.4 380.0L642.8 378.0L641.3 376.1L640.0 374.1L638.6 372.0L637.1 369.9L635.4 367.6L633.8 365.5L632.3 363.4L630.7 361.3L629.1 359.2L627.4 357.0L625.8 354.6L624.2 352.0L622.9 350.0L621.6 347.8L620.3 345.5L618.9 343.2L617.6 340.8L616.2 338.3L615.0 335.9L613.7 333.4L612.6 331.0L611.5 328.7L610.4 326.2L609.3 323.6L608.2 321.1L607.3 318.6L606.4 316.1L605.5 313.6L604.8 311.1L604.1 308.6L603.5 306.1L603.0 303.6L602.6 301.1L602.2 298.6L601.9 296.1L601.7 293.6L601.5 291.1L601.4 288.5L601.3 285.9L601.2 283.4L601.1 280.8L601.0 278.3L601.0 275.7L601.0 273.1L601.0 270.6L601.1 268.0L601.2 265.4L601.3 262.8L601.4 260.3L601.6 257.4L601.8 254.3L602.1 251.1L602.4 248.0L602.7 245.0L603.0 242.3L603.2 240.1L603.4 238.3A2.4 2.4 0 0 0 598.6 237.7ZM628.8 616.7L627.1 615.9L624.9 614.9L622.5 613.8L620.0 612.5L618.0 611.3L616.1 609.9L614.3 608.4L612.5 606.8L610.8 605.0L609.1 603.1L607.8 601.3L606.4 599.4L605.1 597.3L603.9 595.1L602.7 592.9L601.6 590.7L600.5 588.3L599.5 585.8L598.6 583.3L597.8 580.7L597.0 578.2L596.2 575.7L595.6 573.3L595.0 570.9L594.4 568.3L593.8 565.4L593.4 563.1L592.9 560.7L592.4 558.2L592.0 555.6L591.6 552.9L591.2 550.3L590.9 547.7L590.6 545.2L590.4 542.7L590.2 540.3L590.1 537.8L590.0 535.1L589.9 532.2L589.9 529.0L589.9 526.7L589.9 524.3L589.9 521.7L589.9 519.1L589.9 516.4L589.9 513.6L590.0 510.8L590.1 508.0L590.2 505.3L590.3 502.7L590.4 500.2L590.5 497.4L590.7 494.7L590.9 492.0L591.1 489.4L591.3 486.8L591.5 484.2L591.8 481.7L592.1 479.2L592.5 476.8L592.8 474.5L593.4 471.7L594.0 468.9L594.7 466.2L595.4 463.6L596.2 461.0L597.0 458.6L597.8 456.3L598.7 454.1L599.8 451.4L600.9 449.0L602.1 446.8L603.3 444.8L604.7 442.8L606.2 440.9L607.9 438.9L609.9 437.0L612.0 435.2L614.2 433.5L616.4 431.9L618.5 430.5L620.6 429.3L622.8 428.2L625.0 427.3L627.2 426.5L629.4 425.9L631.6 425.3L634.2 424.9L636.7 424.6L639.3 424.5L641.9 424.6L644.7 424.9L647.0 425.2L649.5 425.7L652.0 426.3L654.4 427.0L656.7 427.8L658.8 428.6L661.1 429.8L663.2 431.2L665.2 432.6L667.1 434.3L668.9 436.0L670.6 437.8L672.0 439.7L673.4 441.7L674.7 443.9L675.9 446.3L676.8 448.4L677.8 450.7L678.6 453.1L679.4 455.6L680.1 458.1L680.7 460.6L681.2 463.1L681.6 465.7L682.0 468.3L682.3 470.9L682.5 473.5L682.6 476.1L682.7 478.7L682.6 481.4L682.5 484.0L682.3 486.6L682.0 489.1L681.7 491.5L681.1 494.1L680.4 496.5L679.5 498.9L678.5 501.3L677.4 503.7L676.3 505.9L675.2 508.0L674.0 510.1L672.7 512.1L671.3 514.2L669.7 516.2L668.1 518.1L666.4 520.1L664.5 522.0L662.5 523.9L660.3 525.8L658.1 527.8L656.3 529.3L654.4 530.8L652.4 532.4L650.4 534.0L648.3 535.6L646.2 537.1L644.2 538.7L642.2 540.2L640.1 541.9L637.9 543.5L635.8 545.2L633.7 546.8L631.6 548.5L629.7 550.2L627.9 552.0L625.7 554.5L623.8 557.0L622.1 559.6L620.6 562.2L619.3 564.9L618.3 567.7L617.5 570.5L617.0 573.3L616.7 576.2L616.6 579.0L616.7 581.9L617.0 584.8L617.5 587.7L618.3 590.6L619.4 593.2L621.1 596.2L623.2 599.0L625.7 601.4L628.5 603.5L631.0 604.9L633.9 606.1L636.9 607.0L640.0 607.7L643.0 607.9L646.0 607.6L648.9 607.0L651.7 606.0L654.3 604.8L656.7 603.4L659.2 601.1L661.3 598.5L663.0 595.8L664.2 593.1L665.1 590.2L665.5 587.2L665.6 584.3L665.2 581.5L664.1 577.9L662.3 574.7L659.8 571.9L656.5 569.9L652.9 568.5L649.2 567.9L645.5 568.0L641.9 568.8L638.7 570.3L636.0 572.5L633.8 575.2L632.2 578.1L631.4 581.3L631.2 584.6L631.7 587.6L633.7 591.6L636.7 594.4L640.6 595.8L644.4 595.7L648.0 594.2L650.7 591.9L652.2 588.6L652.6 586.7A2.2 2.2 0 0 0 648.4 585.3L647.9 587.6L647.3 589.1L645.6 590.5L643.6 591.3L641.3 591.3L639.3 590.6L637.5 588.8L636.3 586.4L636.0 584.4L636.2 582.0L636.8 579.9L637.9 577.9L639.5 576.1L641.3 574.7L643.5 573.8L646.2 573.2L648.8 573.1L651.4 573.7L654.1 574.7L656.2 576.1L657.8 577.8L659.0 580.1L659.8 582.5L660.0 584.5L659.9 586.7L659.5 588.9L658.8 590.9L657.8 593.1L656.6 595.2L655.0 597.1L653.3 598.6L651.6 599.7L649.5 600.7L647.3 601.4L645.1 601.9L643.0 602.1L640.8 601.9L638.4 601.4L635.9 600.6L633.5 599.6L631.5 598.5L629.4 597.0L627.5 595.1L625.9 593.1L624.6 590.8L623.8 588.8L623.2 586.5L622.7 584.0L622.5 581.5L622.4 579.0L622.5 576.6L622.7 574.2L623.2 571.8L623.8 569.4L624.7 567.1L625.7 564.8L627.0 562.6L628.5 560.4L630.2 558.2L632.1 556.0L633.6 554.5L635.4 552.9L637.3 551.3L639.3 549.8L641.4 548.1L643.6 546.5L645.8 544.8L647.7 543.3L649.7 541.7L651.8 540.2L653.9 538.6L656.0 537.0L658.0 535.4L660.0 533.8L661.9 532.2L664.2 530.1L666.4 528.1L668.5 526.1L670.5 524.0L672.4 522.0L674.3 519.8L675.9 517.6L677.5 515.3L678.9 513.1L680.3 510.8L681.5 508.5L682.6 506.3L683.8 503.6L684.9 501.0L685.9 498.3L686.7 495.5L687.3 492.5L687.8 489.9L688.1 487.2L688.3 484.4L688.4 481.5L688.4 478.7L688.4 475.9L688.3 473.1L688.0 470.4L687.7 467.6L687.4 464.8L686.9 462.1L686.3 459.4L685.7 456.7L684.9 454.0L684.1 451.3L683.2 448.7L682.2 446.1L681.1 443.7L679.8 441.1L678.3 438.6L676.7 436.3L675.0 434.1L673.1 432.0L671.0 430.0L668.8 428.1L666.5 426.4L663.9 424.8L661.2 423.4L658.7 422.3L656.1 421.4L653.4 420.7L650.7 420.0L648.0 419.5L645.3 419.1L642.3 418.8L639.3 418.7L636.4 418.8L633.4 419.1L630.4 419.7L627.9 420.3L625.4 421.0L622.9 421.9L620.4 422.9L617.9 424.2L615.5 425.5L613.1 427.1L610.7 428.8L608.3 430.8L606.0 432.8L603.8 434.9L601.8 437.1L600.0 439.4L598.5 441.6L597.0 444.0L595.7 446.4L594.5 449.1L593.3 451.9L592.4 454.2L591.5 456.7L590.7 459.3L589.9 461.9L589.1 464.7L588.4 467.6L587.7 470.5L587.2 473.5L586.7 475.9L586.4 478.4L586.1 481.0L585.8 483.6L585.5 486.2L585.3 488.9L585.1 491.6L584.9 494.3L584.8 497.1L584.6 499.8L584.5 502.4L584.4 505.1L584.3 507.9L584.2 510.7L584.2 513.5L584.1 516.3L584.1 519.0L584.1 521.7L584.1 524.3L584.1 526.7L584.1 529.0L584.2 532.3L584.2 535.3L584.3 538.0L584.5 540.6L584.6 543.2L584.9 545.7L585.1 548.3L585.5 551.0L585.8 553.8L586.3 556.5L586.8 559.2L587.2 561.8L587.7 564.3L588.2 566.6L588.8 569.5L589.4 572.2L590.0 574.8L590.7 577.3L591.4 579.8L592.3 582.5L593.1 585.1L594.1 587.8L595.2 590.5L596.4 593.3L597.5 595.5L598.7 597.9L600.0 600.2L601.4 602.6L602.8 604.8L604.3 606.9L606.1 609.2L607.9 611.3L609.9 613.2L611.9 615.0L614.0 616.7L616.5 618.5L619.2 620.0L621.7 621.4L623.9 622.5L625.2 623.3A3.7 3.7 0 0 0 628.8 616.7ZM600.0 262.3L600.3 260.5L600.6 258.3L601.0 255.5L601.4 252.5L601.8 249.4L602.3 246.2L602.8 243.2L603.3 240.4L603.9 237.9L604.4 235.4L605.0 233.0L605.7 230.6L606.3 228.2L607.0 225.7L607.8 223.3L608.6 220.8L609.5 218.3L610.4 215.6L611.3 213.0L612.3 210.3L613.4 207.7L614.5 205.1L615.6 202.7L616.7 200.4L617.9 198.1L619.2 195.9L620.4 193.8L621.7 191.7L623.1 189.7L624.5 187.8L625.9 185.9L627.4 184.1L629.3 182.1L631.2 180.2L633.1 178.4L635.1 176.6L637.3 175.0L639.5 173.4L641.8 171.9L644.0 170.6L646.2 169.4L648.6 168.2L651.1 167.1L653.6 166.0L656.1 165.1L658.6 164.2L661.1 163.4L663.4 162.7L665.8 162.1L668.2 161.6L670.5 161.2L672.9 160.9L675.3 160.6L677.8 160.4L680.2 160.2L682.7 160.1L685.3 160.1L687.8 160.1L690.4 160.2L692.9 160.4L695.4 160.7L697.8 161.0L700.2 161.5L702.6 162.1L705.0 162.8L707.3 163.6L709.7 164.4L712.0 165.4L714.3 166.5L716.6 167.6L718.9 168.9L720.8 170.0L722.8 171.3L724.8 172.6L726.8 174.1L728.8 175.6L730.7 177.1L732.6 178.7L734.3 180.2L736.0 181.7L737.9 183.6L739.8 185.5L741.5 187.4L743.1 189.4L744.7 191.3L746.2 193.3L747.7 195.3L749.2 197.6L750.7 199.7L752.0 201.9L753.3 204.1L754.5 206.3L755.6 208.6L756.7 210.9L757.8 213.2L758.8 215.5L759.7 217.9L760.5 220.3L761.2 222.8L761.8 225.1L762.3 227.5L762.7 229.9L763.1 232.4L763.4 234.9L763.6 237.5L763.8 240.1L763.8 242.4L763.7 244.8L763.6 247.4L763.4 249.9L763.2 252.5L762.9 254.9L762.6 257.3L762.3 259.5L761.9 262.3L761.4 264.8L760.9 267.2L760.4 269.4L759.7 271.6L759.0 273.9L758.1 276.2L757.1 278.5L756.0 280.8L754.8 283.0L753.5 285.2L752.3 287.3L750.7 289.6L749.2 291.8L747.5 293.9L745.8 295.8L743.9 297.6L742.1 299.0L740.2 300.4L738.1 301.8L736.0 303.0L733.9 304.1L731.8 305.0L729.3 305.9L726.8 306.5L724.2 307.0L721.6 307.2L719.1 307.3L716.5 307.1L713.8 306.7L711.2 306.0L708.7 305.2L706.6 304.2L704.7 302.9L702.9 301.3L701.2 299.5L699.6 297.4L698.3 295.3L697.1 293.2L696.2 291.0L695.4 288.7L694.8 286.2L694.4 283.6L694.2 281.3L694.2 278.8L694.2 276.1L694.4 273.4L694.6 270.7L694.7 268.1L694.9 264.9L695.0 261.9L695.2 259.1L695.5 256.4L695.9 253.7L696.4 250.9L696.9 248.4L697.2 246.5A2.7 2.7 0 0 0 691.8 245.5L691.4 247.1L690.7 249.6L690.1 252.6L689.5 255.6L689.1 258.4L688.8 261.4L688.5 264.5L688.3 267.9L688.1 270.3L688.0 272.9L687.8 275.8L687.7 278.7L687.7 281.6L688.0 284.4L688.5 287.5L689.2 290.4L690.2 293.3L691.3 296.0L692.7 298.7L694.4 301.2L696.2 303.6L698.4 305.9L700.7 308.0L703.4 309.8L706.3 311.2L709.4 312.3L712.6 313.0L715.8 313.5L718.9 313.7L722.0 313.7L725.1 313.4L728.2 312.8L731.2 312.0L734.2 311.0L736.7 309.9L739.1 308.7L741.5 307.3L743.8 305.7L746.1 304.1L748.1 302.4L750.4 300.3L752.4 298.0L754.3 295.7L756.1 293.3L757.7 290.7L759.1 288.5L760.4 286.1L761.7 283.7L762.9 281.2L764.0 278.7L765.0 276.1L765.9 273.6L766.6 271.1L767.2 268.6L767.8 266.0L768.3 263.3L768.7 260.5L769.0 258.1L769.3 255.7L769.6 253.1L769.8 250.5L770.0 247.8L770.2 245.1L770.2 242.5L770.2 239.9L770.1 237.1L769.9 234.3L769.6 231.6L769.3 228.9L768.8 226.2L768.3 223.7L767.8 221.2L767.1 218.4L766.3 215.6L765.4 213.0L764.5 210.4L763.5 207.9L762.4 205.4L761.3 202.9L760.1 200.5L758.8 198.0L757.4 195.6L756.0 193.1L754.3 190.7L752.9 188.5L751.4 186.4L749.8 184.2L748.1 181.9L746.2 179.7L744.2 177.5L742.0 175.3L740.2 173.6L738.3 172.0L736.3 170.3L734.2 168.6L732.1 167.0L729.9 165.4L727.7 163.9L725.4 162.5L723.1 161.1L720.6 159.8L718.0 158.6L715.3 157.5L712.7 156.5L710.0 155.6L707.3 154.8L704.6 154.1L701.8 153.5L699.0 153.0L696.2 152.7L693.4 152.5L690.6 152.4L687.9 152.4L685.1 152.5L682.4 152.6L679.8 152.8L677.1 153.0L674.5 153.3L671.9 153.6L669.3 154.0L666.7 154.5L664.1 155.1L661.5 155.8L658.9 156.6L656.3 157.5L653.6 158.5L650.9 159.6L648.3 160.7L645.6 162.0L643.1 163.3L640.6 164.7L638.2 166.1L635.6 167.8L633.2 169.6L630.9 171.5L628.7 173.5L626.5 175.5L624.5 177.7L622.6 179.9L620.9 181.9L619.3 184.0L617.8 186.1L616.4 188.3L615.0 190.6L613.7 192.9L612.5 195.2L611.3 197.6L610.1 200.2L609.0 202.8L607.9 205.6L606.9 208.3L606.0 211.1L605.1 213.8L604.2 216.5L603.4 219.2L602.7 221.8L602.0 224.3L601.3 226.8L600.7 229.3L600.2 231.8L599.6 234.4L599.1 236.9L598.7 239.6L598.2 242.4L597.8 245.5L597.4 248.8L597.0 252.0L596.7 255.0L596.4 257.7L596.2 260.0L596.0 261.7A2.0 2.0 0 0 0 600.0 262.3ZM698.5 258.8L700.7 257.2L703.3 255.2L705.3 254.3L707.4 254.1L709.9 254.4L712.6 255.0L714.9 255.6L717.5 256.5L719.9 257.6L722.0 258.7L723.8 260.0L725.6 261.6L727.2 263.2L728.4 264.8L729.4 266.5L730.0 268.2L730.2 270.1L730.2 272.2L729.8 274.5L729.1 276.5L728.1 278.1L726.7 279.8L725.2 281.1L723.1 282.3L721.2 282.8L719.6 282.4L717.9 281.4L716.9 280.1L716.4 278.8L716.7 278.0L717.8 275.7A3.1 3.1 0 0 0 712.2 273.3L711.0 274.9L709.6 279.2L710.7 283.2L713.1 286.6L716.4 289.0L720.8 290.2L725.4 289.8L729.8 287.9L732.4 286.0L734.8 283.5L736.9 280.5L738.4 277.2L739.4 273.6L739.8 269.9L739.4 266.4L738.4 262.8L736.6 259.2L734.7 256.8L732.4 254.4L729.9 252.2L727.0 250.3L723.9 248.7L720.6 247.5L717.3 246.6L714.2 246.0L710.2 245.9L706.4 246.4L702.7 247.7L699.2 250.4L696.7 253.3L695.5 255.2A2.4 2.4 0 0 0 698.5 258.8ZM752.6 335.7L750.7 335.7L747.7 335.8L744.2 336.2L740.6 337.1L737.9 338.5L735.2 340.2L732.7 342.4L730.5 345.0L729.1 347.5L727.9 350.3L727.0 353.1L726.3 356.0L725.9 358.8L726.1 362.1L726.7 365.4L727.7 368.3L729.2 370.9L732.0 373.8L735.2 375.8L738.3 376.8L743.3 376.2L746.9 373.7L748.7 369.2L749.0 366.8A3.1 3.1 0 0 0 743.0 365.2L742.5 368.1L742.1 369.3L740.8 370.1L739.7 370.2L738.0 369.6L736.1 368.5L734.8 367.1L734.1 365.6L733.4 363.6L733.1 361.4L733.1 359.2L733.3 357.3L733.9 355.1L734.6 352.8L735.5 350.7L736.5 349.0L737.8 347.2L739.4 345.5L741.3 344.1L743.4 342.9L745.5 342.0L748.4 341.3L751.2 340.8L753.4 340.3A2.4 2.4 0 0 0 752.6 335.7ZM623.3 201.1L624.5 199.7L626.0 197.9L627.8 195.8L629.7 193.6L631.7 191.7L633.4 190.1L635.3 188.4L637.2 186.8L639.2 185.2L641.3 183.8L643.5 182.5L645.8 181.2L648.4 180.0L651.1 178.8L653.7 177.8L656.3 177.0L658.6 176.5L661.2 176.1L663.7 176.0L666.0 176.1L668.2 176.4L670.1 176.9L672.6 178.1L674.8 179.8L675.8 181.1L675.5 182.8L674.0 186.3A2.6 2.6 0 0 0 679.0 187.7L680.5 184.9L681.2 178.9L679.0 175.7L675.9 173.0L671.9 171.1L669.4 170.4L666.6 170.0L663.7 169.9L660.6 170.0L657.4 170.5L654.6 171.2L651.7 172.2L648.8 173.3L645.9 174.6L643.1 176.0L640.5 177.5L638.1 179.2L635.9 180.9L633.8 182.8L631.8 184.7L630.0 186.5L628.3 188.3L626.3 190.7L624.5 193.2L622.8 195.5L621.5 197.6L620.7 198.9A1.7 1.7 0 0 0 623.3 201.1ZM741.1 173.8L742.5 174.9L744.7 176.5L747.4 178.3L750.3 180.0L753.3 181.3L756.8 181.7L760.2 181.5L763.3 180.8L766.1 179.8L769.5 177.6L772.1 174.9L773.7 172.3L774.2 167.6L773.5 165.5A2.0 2.0 0 0 0 769.5 165.5L769.6 168.2L769.3 169.7L767.9 171.4L765.9 173.1L763.9 174.2L761.8 174.7L759.5 175.0L757.0 175.0L754.7 174.7L752.7 174.3L750.0 173.3L747.3 172.1L744.8 170.9L742.9 170.2A2.0 2.0 0 0 0 741.1 173.8ZM749.2 180.9L751.3 182.0L754.2 183.3L757.2 184.9L759.6 186.2L762.1 187.5L764.1 188.7L765.6 189.9L767.1 191.4L768.5 193.3A1.7 1.7 0 0 0 771.5 191.7L771.2 189.6L769.4 186.1L767.5 184.3L765.2 182.5L762.4 180.8L759.4 179.7L756.0 178.6L752.9 177.7L750.8 177.1A2.0 2.0 0 0 0 749.2 180.9ZM664.9 406.8L663.4 405.9L661.1 404.7L658.3 403.2L655.2 401.7L651.9 400.4L648.7 399.3L645.9 398.9L643.1 398.5L640.3 398.4L637.5 398.3L634.8 398.3L632.2 398.4L629.7 398.6L626.3 399.0L623.1 399.6L620.0 400.4L617.2 401.3L614.6 402.4L611.6 403.9L609.0 405.7L606.7 407.8L604.9 410.2L603.4 414.0L602.9 417.9L603.4 421.6L606.6 426.3L611.4 428.8L616.8 426.8L618.8 424.9A2.7 2.7 0 0 0 616.2 420.1L613.3 421.8L612.6 422.2L611.6 421.2L610.6 419.4L610.3 417.8L610.5 415.6L611.1 413.8L612.0 412.5L613.4 411.1L615.2 409.8L617.4 408.6L619.5 407.7L621.9 407.0L624.6 406.3L627.4 405.8L630.3 405.4L632.6 405.2L635.0 405.0L637.6 404.9L640.1 405.0L642.6 405.1L645.1 405.3L647.3 405.7L650.0 406.2L653.0 407.2L656.0 408.3L658.8 409.5L661.2 410.5L663.1 411.2A2.4 2.4 0 0 0 664.9 406.8ZM668.4 429.5L667.5 432.0L666.4 435.2L665.1 437.8L663.5 439.8L661.7 441.6L660.1 442.7L658.6 443.3L657.5 443.3L657.7 443.3L656.4 441.3A2.9 2.9 0 0 0 651.6 444.7L652.1 446.3L655.5 449.7L659.6 450.0L663.9 448.3L666.2 446.1L668.3 443.3L669.9 440.2L670.9 436.5L671.5 432.8L671.6 430.5A1.7 1.7 0 0 0 668.4 429.5ZM684.9 464.4L683.9 466.8L682.6 469.9L681.2 472.0L678.9 474.1L677.1 474.9L678.3 475.2L676.5 473.7A2.7 2.7 0 0 0 673.5 478.3L674.1 479.4L678.9 481.1L682.6 478.7L685.8 475.0L687.0 471.4L687.8 467.9L688.1 465.6A1.7 1.7 0 0 0 684.9 464.4ZM590.6 497.6L591.5 495.5L592.7 492.7L594.0 489.7L595.4 487.6L597.1 485.7L598.9 484.0L600.9 482.7L602.6 481.9L604.8 481.4L607.4 481.5L608.9 482.0L609.6 482.4L610.6 483.7L611.0 484.6L611.0 484.7L609.4 487.4A3.1 3.1 0 0 0 614.6 490.6L616.6 489.1L619.0 483.4L617.9 479.9L615.7 476.7L612.1 474.0L607.9 473.4L603.6 473.7L599.4 475.1L596.7 476.9L594.4 479.2L592.3 481.7L590.6 484.4L589.2 487.8L588.3 491.3L587.7 494.4L587.4 496.4A1.7 1.7 0 0 0 590.6 497.6ZM597.4 580.1L597.5 578.1L597.7 575.3L597.8 572.2L598.1 568.9L598.4 565.9L599.0 563.5L600.0 560.7L601.4 558.2L603.0 556.2L604.5 554.8L606.3 554.2L608.9 554.0L611.4 553.8A2.4 2.4 0 0 0 610.6 549.2L608.8 549.2L605.4 549.5L601.5 551.2L599.5 553.2L597.7 555.9L596.2 559.0L595.0 562.5L594.6 565.4L594.4 568.7L594.4 572.1L594.5 575.3L594.6 578.1L594.6 579.9A1.4 1.4 0 0 0 597.4 580.1ZM680.2 510.8L678.4 511.4L676.2 512.3L673.7 513.4L671.1 514.4L668.3 515.4L665.8 516.0L663.7 516.3L661.2 516.3L658.6 516.1L655.9 515.5L653.3 514.8L650.7 513.9L648.4 512.9L646.3 511.8L644.3 510.5L642.4 509.1L640.7 507.5L639.1 505.8L637.8 504.0L636.4 501.8L635.2 499.3L634.3 496.7L633.7 494.2L633.4 491.9L633.5 489.6L633.9 487.2L634.6 484.9L635.6 482.8L636.7 481.1L637.9 479.8L639.6 478.6L641.6 477.6L643.6 476.8L645.6 476.3L648.0 476.2L650.7 476.4L653.3 477.0L655.3 477.9L656.8 479.2L658.3 481.1L659.5 483.1L660.0 484.8L659.9 486.6L659.1 489.0L658.0 490.7L657.0 491.3L655.8 491.5L656.4 491.8L655.1 489.4A3.1 3.1 0 0 0 649.9 492.6L650.4 494.5L654.2 498.5L659.0 498.3L664.0 495.3L665.8 492.0L667.0 487.9L667.0 483.2L665.8 480.1L664.0 477.1L661.6 474.3L658.7 472.1L655.4 470.6L651.8 469.7L648.1 469.4L644.4 469.7L641.6 470.3L638.8 471.4L636.1 472.8L633.5 474.6L631.3 476.9L629.6 479.5L628.3 482.4L627.3 485.6L626.7 488.8L626.6 492.1L627.0 495.4L627.8 498.7L628.9 502.0L630.4 505.1L632.2 508.0L633.9 510.2L635.9 512.3L638.1 514.3L640.4 516.1L642.9 517.7L645.6 519.1L648.3 520.2L651.3 521.2L654.5 522.0L657.7 522.6L661.0 522.8L664.3 522.7L667.3 522.1L670.4 521.0L673.3 519.7L676.1 518.3L678.5 517.0L680.5 515.9L681.8 515.2A2.4 2.4 0 0 0 680.2 510.8ZM654.2 511.8L652.3 510.2L649.9 508.2L648.3 506.4L646.5 503.7L645.9 501.5L645.9 501.4L647.1 499.3A2.9 2.9 0 0 0 641.9 496.7L640.7 497.8L639.1 502.5L640.8 506.7L643.7 510.6L646.8 512.7L649.8 514.3L651.8 515.2A2.0 2.0 0 0 0 654.2 511.8Z"/>
</g>
<g stroke="#c0c0c0">
<use href="#t4" stroke-width="3.9"/>
<use href="#t6" stroke-width="3.1"/>
<use href="#t7" stroke-width="2.6"/>
<use href="#t8" stroke-width="2.6"/>
<path stroke="none" fill="#c0c0c0" d="M599.2 237.8L598.9 239.4L598.4 241.6L597.9 244.3L597.4 247.2L596.8 250.4L596.3 253.6L595.8 256.7L595.4 259.8L595.1 262.3L594.8 264.9L594.6 267.5L594.3 270.2L594.1 272.8L594.0 275.5L593.8 278.2L593.8 280.9L593.8 283.6L593.9 286.2L594.0 288.9L594.2 291.5L594.4 294.2L594.6 296.9L595.0 299.6L595.4 302.3L595.9 305.0L596.5 307.7L597.1 310.4L597.9 313.1L598.7 315.8L599.6 318.4L600.5 321.1L601.6 323.7L602.6 326.4L603.8 329.0L605.0 331.7L606.1 334.1L607.4 336.6L608.8 339.1L610.2 341.7L611.6 344.2L613.0 346.6L614.5 349.0L615.9 351.3L617.3 353.5L618.6 355.5L620.5 358.3L622.4 360.8L624.2 363.0L626.0 365.2L627.7 367.2L629.3 369.1L630.8 371.0L632.5 373.2L634.0 375.3L635.4 377.3L636.9 379.3L638.5 381.4L640.2 383.5L641.8 385.4L643.5 387.3L645.3 389.2L647.1 391.1L648.9 392.9L650.7 394.8L652.4 396.5L654.5 398.6L656.5 400.6L658.6 402.5L660.6 404.3L662.5 406.2L664.4 408.1L666.4 410.0L668.3 411.9L670.2 413.8L672.0 415.7L673.7 417.6L675.3 419.4L677.1 421.6L678.8 423.7L680.4 425.8L681.8 427.9L683.1 430.1L684.2 432.2L685.1 434.3L686.0 436.4L686.9 438.9L687.9 441.7L688.7 444.0L689.6 446.5L690.5 449.2L691.3 451.9L692.2 454.8L693.1 457.7L693.9 460.6L694.5 462.9L695.1 465.2L695.7 467.6L696.3 470.0L696.8 472.5L697.4 474.9L697.9 477.4L698.4 479.9L698.8 482.4L699.2 484.8L699.6 487.4L699.9 489.9L700.2 492.5L700.5 495.0L700.7 497.6L700.9 500.1L701.1 502.6L701.3 505.1L701.5 508.0L701.6 510.8L701.8 513.7L701.9 516.5L701.9 519.3L702.0 521.9L701.9 524.5L701.8 526.9L701.5 529.8L701.2 532.5L700.7 535.1L700.2 537.6L699.6 540.0L698.9 542.4L698.0 545.0L697.0 547.4L695.9 549.8L694.7 552.3L693.5 555.2L692.4 557.7L691.4 560.3L690.4 562.9L689.3 565.7L688.1 568.4L687.0 571.1L685.9 573.5L684.9 576.0L683.8 578.4L682.6 580.9L681.5 583.3L680.3 585.7L679.2 588.0L677.7 590.6L676.3 593.2L674.8 595.7L673.3 598.2L671.8 600.6L670.3 602.8L668.7 605.0L667.0 607.2L665.2 609.3L663.5 611.3L661.9 613.1L660.5 614.5L657.3 616.8L654.7 618.1A2.3 2.3 0 0 0 657.3 621.9L659.5 620.7L663.5 617.5L665.0 615.9L666.6 614.1L668.4 612.0L670.2 609.8L672.0 607.5L673.7 605.2L675.3 602.8L676.9 600.4L678.4 597.9L679.9 595.3L681.4 592.7L682.8 590.0L684.1 587.6L685.3 585.2L686.5 582.7L687.7 580.2L688.8 577.7L689.9 575.3L691.0 572.9L692.2 570.1L693.4 567.3L694.5 564.6L695.5 561.9L696.5 559.3L697.5 556.8L698.7 554.2L699.9 551.7L701.0 549.2L702.1 546.5L703.1 543.6L703.8 541.2L704.5 538.6L705.0 536.0L705.5 533.2L705.9 530.3L706.2 527.1L706.3 524.6L706.4 522.0L706.4 519.2L706.3 516.4L706.2 513.5L706.1 510.6L705.9 507.7L705.7 504.9L705.5 502.3L705.3 499.8L705.1 497.2L704.9 494.6L704.6 492.0L704.3 489.4L704.0 486.8L703.6 484.2L703.2 481.6L702.7 479.1L702.2 476.6L701.7 474.0L701.2 471.5L700.6 469.0L700.0 466.5L699.4 464.1L698.8 461.7L698.1 459.4L697.3 456.5L696.4 453.5L695.6 450.6L694.7 447.8L693.8 445.1L692.9 442.6L692.1 440.3L691.1 437.4L690.1 434.9L689.2 432.5L688.2 430.2L686.9 427.9L685.5 425.6L684.0 423.3L682.3 421.0L680.6 418.8L678.7 416.6L677.0 414.6L675.2 412.7L673.3 410.7L671.4 408.8L669.5 406.9L667.6 404.9L665.6 403.0L663.6 401.1L661.6 399.2L659.6 397.3L657.6 395.4L655.6 393.5L653.9 391.7L652.1 389.8L650.4 388.0L648.6 386.1L646.9 384.2L645.3 382.3L643.8 380.5L642.2 378.5L640.7 376.5L639.4 374.5L637.9 372.5L636.4 370.3L634.8 368.0L633.2 365.9L631.7 363.9L630.0 361.8L628.4 359.7L626.7 357.5L625.1 355.1L623.4 352.5L622.2 350.4L620.9 348.3L619.5 346.0L618.1 343.6L616.8 341.2L615.4 338.8L614.1 336.3L612.9 333.8L611.7 331.4L610.6 329.1L609.5 326.5L608.4 324.0L607.4 321.4L606.4 318.9L605.5 316.4L604.6 313.8L603.9 311.3L603.2 308.8L602.5 306.3L602.0 303.8L601.6 301.3L601.2 298.8L601.0 296.2L600.7 293.7L600.6 291.1L600.4 288.6L600.3 286.0L600.2 283.4L600.1 280.9L600.1 278.3L600.0 275.7L600.1 273.1L600.1 270.5L600.2 267.9L600.3 265.3L600.4 262.8L600.6 260.2L600.8 257.3L601.1 254.2L601.4 251.0L601.7 247.9L602.1 244.9L602.4 242.2L602.7 240.0L602.8 238.2A1.8 1.8 0 0 0 599.2 237.8ZM628.4 617.5L626.7 616.7L624.5 615.7L622.1 614.5L619.6 613.2L617.5 611.9L615.6 610.5L613.8 609.0L612.0 607.3L610.2 605.5L608.6 603.6L607.2 601.7L605.9 599.7L604.5 597.6L603.3 595.4L602.1 593.2L601.0 591.0L599.9 588.5L598.9 586.0L598.0 583.5L597.1 580.9L596.3 578.4L595.6 575.9L594.9 573.5L594.3 571.1L593.8 568.5L593.2 565.6L592.7 563.3L592.2 560.8L591.8 558.3L591.3 555.7L590.9 553.0L590.5 550.4L590.2 547.8L589.9 545.2L589.7 542.8L589.6 540.3L589.4 537.8L589.3 535.1L589.3 532.2L589.2 529.0L589.2 526.7L589.2 524.3L589.2 521.7L589.2 519.1L589.2 516.4L589.3 513.6L589.3 510.8L589.4 508.0L589.5 505.3L589.6 502.7L589.7 500.1L589.9 497.4L590.0 494.7L590.2 492.0L590.4 489.3L590.6 486.7L590.9 484.1L591.1 481.6L591.4 479.1L591.8 476.7L592.2 474.4L592.7 471.5L593.4 468.7L594.0 466.0L594.8 463.4L595.6 460.8L596.4 458.4L597.2 456.0L598.1 453.8L599.2 451.1L600.3 448.7L601.5 446.5L602.7 444.4L604.1 442.4L605.7 440.4L607.5 438.5L609.4 436.5L611.5 434.7L613.7 432.9L616.0 431.3L618.2 429.9L620.3 428.7L622.5 427.6L624.7 426.7L627.0 425.9L629.2 425.2L631.5 424.7L634.1 424.2L636.7 423.9L639.3 423.8L642.0 423.9L644.7 424.2L647.1 424.5L649.6 425.0L652.1 425.6L654.6 426.3L656.9 427.1L659.1 428.0L661.4 429.2L663.6 430.6L665.7 432.1L667.6 433.8L669.4 435.5L671.1 437.4L672.6 439.3L674.0 441.3L675.3 443.6L676.5 446.0L677.5 448.1L678.4 450.4L679.2 452.9L680.0 455.4L680.7 457.9L681.3 460.5L681.9 463.0L682.3 465.6L682.7 468.2L683.0 470.8L683.2 473.5L683.3 476.1L683.3 478.7L683.3 481.4L683.2 484.1L683.0 486.7L682.7 489.2L682.3 491.6L681.7 494.2L681.0 496.7L680.2 499.1L679.2 501.6L678.0 504.0L677.0 506.2L675.8 508.3L674.6 510.4L673.2 512.5L671.8 514.6L670.3 516.6L668.6 518.6L666.8 520.5L664.9 522.5L662.9 524.4L660.8 526.3L658.5 528.3L656.8 529.8L654.9 531.4L652.9 532.9L650.8 534.5L648.7 536.1L646.6 537.7L644.6 539.2L642.6 540.8L640.5 542.4L638.3 544.1L636.2 545.7L634.1 547.4L632.1 549.0L630.2 550.7L628.4 552.5L626.2 554.9L624.3 557.4L622.6 559.9L621.2 562.5L620.0 565.1L619.0 567.9L618.2 570.6L617.7 573.4L617.4 576.2L617.3 579.0L617.4 581.8L617.7 584.7L618.2 587.6L619.0 590.3L620.0 593.0L621.7 595.9L623.7 598.5L626.1 600.9L628.8 602.9L631.3 604.2L634.1 605.4L637.1 606.4L640.1 607.0L643.0 607.2L645.9 607.0L648.7 606.3L651.5 605.4L654.0 604.2L656.3 602.8L658.8 600.6L660.8 598.1L662.4 595.5L663.6 592.8L664.4 590.0L664.8 587.1L664.9 584.3L664.6 581.6L663.5 578.2L661.7 575.0L659.3 572.4L656.2 570.4L652.7 569.1L649.2 568.5L645.6 568.6L642.1 569.4L639.0 570.8L636.4 572.9L634.3 575.5L632.8 578.3L632.0 581.4L631.8 584.5L632.2 587.5L634.2 591.3L637.0 594.0L640.7 595.2L644.3 595.2L647.7 593.8L650.3 591.6L651.7 588.5L652.1 586.5A1.7 1.7 0 0 0 648.9 585.5L648.4 587.7L647.7 589.4L645.9 590.9L643.7 591.8L641.2 591.8L639.0 591.0L637.0 589.1L635.8 586.5L635.5 584.4L635.6 581.9L636.2 579.7L637.4 577.6L639.1 575.6L641.0 574.2L643.3 573.2L646.1 572.6L648.8 572.5L651.6 573.1L654.4 574.1L656.7 575.6L658.3 577.5L659.6 579.9L660.4 582.4L660.6 584.5L660.5 586.7L660.1 589.0L659.4 591.2L658.4 593.4L657.1 595.6L655.5 597.6L653.7 599.2L651.9 600.3L649.8 601.3L647.5 602.1L645.2 602.6L643.0 602.8L640.7 602.6L638.2 602.1L635.7 601.3L633.3 600.3L631.2 599.1L628.9 597.5L627.0 595.6L625.3 593.4L624.0 591.0L623.2 589.0L622.5 586.6L622.1 584.1L621.8 581.5L621.7 579.0L621.8 576.5L622.1 574.1L622.5 571.6L623.2 569.2L624.0 566.9L625.1 564.5L626.4 562.3L627.9 560.0L629.6 557.8L631.6 555.5L633.2 554.0L634.9 552.4L636.9 550.8L638.9 549.2L641.0 547.6L643.2 545.9L645.4 544.2L647.3 542.7L649.3 541.2L651.4 539.6L653.5 538.0L655.6 536.4L657.6 534.8L659.6 533.3L661.5 531.7L663.8 529.6L666.0 527.6L668.1 525.6L670.0 523.6L671.9 521.5L673.7 519.4L675.4 517.2L676.9 515.0L678.4 512.7L679.7 510.4L680.9 508.2L682.0 506.0L683.2 503.3L684.3 500.7L685.2 498.1L686.0 495.3L686.7 492.4L687.1 489.8L687.4 487.1L687.6 484.3L687.7 481.5L687.8 478.7L687.7 475.9L687.6 473.2L687.4 470.4L687.1 467.7L686.7 464.9L686.2 462.2L685.7 459.5L685.0 456.8L684.3 454.2L683.4 451.5L682.5 448.9L681.6 446.4L680.5 444.0L679.2 441.4L677.7 439.0L676.2 436.7L674.5 434.5L672.6 432.5L670.6 430.5L668.4 428.7L666.1 426.9L663.6 425.4L660.9 424.0L658.5 423.0L655.9 422.1L653.2 421.3L650.5 420.7L647.9 420.2L645.3 419.8L642.3 419.5L639.3 419.4L636.4 419.5L633.5 419.8L630.5 420.3L628.1 420.9L625.6 421.7L623.1 422.5L620.7 423.6L618.2 424.8L615.8 426.1L613.5 427.7L611.1 429.4L608.7 431.3L606.4 433.3L604.3 435.4L602.3 437.6L600.6 439.8L599.0 442.0L597.6 444.3L596.4 446.7L595.1 449.3L593.9 452.2L593.1 454.5L592.2 456.9L591.3 459.5L590.5 462.1L589.8 464.9L589.1 467.7L588.4 470.6L587.8 473.6L587.4 476.0L587.1 478.5L586.7 481.1L586.5 483.7L586.2 486.3L586.0 489.0L585.8 491.7L585.6 494.4L585.4 497.1L585.3 499.9L585.2 502.5L585.1 505.1L585.0 507.9L584.9 510.7L584.8 513.5L584.8 516.3L584.8 519.0L584.8 521.7L584.8 524.3L584.8 526.7L584.8 529.0L584.8 532.3L584.9 535.3L585.0 538.0L585.1 540.6L585.3 543.1L585.5 545.6L585.8 548.2L586.1 551.0L586.5 553.7L587.0 556.4L587.4 559.1L587.9 561.7L588.4 564.1L588.8 566.4L589.4 569.4L590.0 572.1L590.7 574.6L591.3 577.1L592.1 579.6L592.9 582.3L593.8 584.9L594.7 587.6L595.8 590.3L597.0 593.0L598.1 595.2L599.3 597.6L600.6 599.9L602.0 602.2L603.4 604.4L604.8 606.4L606.6 608.7L608.5 610.7L610.4 612.7L612.4 614.4L614.5 616.1L616.9 617.8L619.5 619.3L622.1 620.6L624.2 621.8L625.6 622.5A2.9 2.9 0 0 0 628.4 617.5ZM599.5 262.2L599.8 260.5L600.1 258.2L600.5 255.5L600.9 252.5L601.3 249.3L601.8 246.1L602.3 243.1L602.8 240.3L603.3 237.8L603.9 235.3L604.5 232.8L605.1 230.4L605.7 228.0L606.4 225.6L607.2 223.1L608.0 220.6L608.8 218.0L609.8 215.4L610.7 212.7L611.7 210.1L612.7 207.4L613.8 204.9L614.9 202.4L616.1 200.0L617.3 197.8L618.5 195.5L619.8 193.4L621.1 191.3L622.4 189.3L623.9 187.3L625.3 185.4L626.9 183.6L628.7 181.6L630.6 179.7L632.6 177.8L634.6 176.0L636.8 174.3L639.0 172.7L641.4 171.2L643.6 169.9L645.9 168.7L648.3 167.5L650.8 166.3L653.3 165.3L655.8 164.3L658.4 163.4L660.8 162.6L663.2 161.9L665.6 161.3L668.0 160.8L670.4 160.4L672.8 160.0L675.2 159.7L677.7 159.5L680.2 159.4L682.7 159.3L685.3 159.2L687.8 159.2L690.4 159.3L692.9 159.5L695.5 159.7L697.9 160.1L700.4 160.6L702.8 161.1L705.2 161.8L707.6 162.6L710.0 163.5L712.4 164.5L714.8 165.6L717.1 166.7L719.4 168.0L721.4 169.1L723.4 170.4L725.4 171.8L727.4 173.2L729.4 174.8L731.4 176.3L733.2 177.9L735.0 179.4L736.7 181.0L738.7 182.9L740.5 184.8L742.3 186.8L743.9 188.7L745.5 190.8L747.0 192.8L748.4 194.8L750.0 197.0L751.5 199.2L752.8 201.4L754.1 203.7L755.3 205.9L756.4 208.2L757.5 210.5L758.6 212.9L759.5 215.2L760.4 217.6L761.2 220.1L762.0 222.6L762.5 224.9L763.0 227.3L763.5 229.8L763.9 232.3L764.2 234.9L764.4 237.5L764.5 240.1L764.5 242.4L764.5 244.9L764.4 247.4L764.2 250.0L763.9 252.5L763.7 255.0L763.4 257.4L763.1 259.7L762.6 262.4L762.2 264.9L761.7 267.3L761.1 269.6L760.5 271.9L759.7 274.2L758.8 276.5L757.8 278.8L756.6 281.1L755.4 283.4L754.2 285.6L752.9 287.7L751.4 290.0L749.8 292.3L748.1 294.4L746.3 296.3L744.4 298.1L742.6 299.6L740.6 301.1L738.5 302.4L736.4 303.7L734.2 304.8L732.1 305.7L729.5 306.6L726.9 307.3L724.3 307.7L721.7 308.0L719.1 308.0L716.4 307.8L713.6 307.4L711.0 306.8L708.4 305.9L706.2 304.9L704.2 303.5L702.4 301.9L700.6 299.9L699.0 297.9L697.6 295.7L696.5 293.6L695.5 291.3L694.7 288.9L694.1 286.3L693.6 283.7L693.4 281.3L693.4 278.8L693.5 276.1L693.6 273.3L693.8 270.6L694.0 268.1L694.1 264.8L694.3 261.8L694.5 259.0L694.8 256.3L695.2 253.5L695.7 250.7L696.2 248.2L696.5 246.4A2.1 2.1 0 0 0 692.5 245.6L692.0 247.3L691.4 249.8L690.7 252.7L690.2 255.7L689.8 258.5L689.5 261.4L689.2 264.5L689.0 267.9L688.9 270.3L688.7 273.0L688.6 275.8L688.5 278.7L688.5 281.6L688.8 284.3L689.3 287.3L690.0 290.2L690.9 293.0L692.0 295.7L693.4 298.3L695.0 300.7L696.8 303.1L698.9 305.4L701.2 307.4L703.8 309.1L706.6 310.5L709.6 311.5L712.7 312.3L715.9 312.7L718.9 313.0L722.0 312.9L725.0 312.6L728.0 312.1L731.0 311.3L733.9 310.3L736.3 309.3L738.7 308.0L741.1 306.6L743.4 305.1L745.6 303.5L747.6 301.9L749.9 299.8L751.9 297.6L753.7 295.2L755.4 292.8L757.1 290.3L758.4 288.1L759.8 285.8L761.0 283.4L762.2 280.9L763.3 278.4L764.3 275.8L765.2 273.4L765.9 270.9L766.5 268.4L767.0 265.9L767.5 263.2L767.9 260.3L768.3 258.0L768.6 255.6L768.8 253.0L769.1 250.4L769.3 247.7L769.4 245.1L769.5 242.5L769.5 239.9L769.4 237.1L769.2 234.4L768.9 231.7L768.5 229.0L768.1 226.4L767.6 223.9L767.0 221.4L766.3 218.6L765.5 215.9L764.6 213.3L763.7 210.8L762.7 208.3L761.6 205.8L760.5 203.3L759.3 200.9L758.0 198.5L756.6 196.1L755.2 193.7L753.6 191.2L752.1 189.1L750.6 187.0L749.0 184.8L747.3 182.6L745.4 180.4L743.5 178.2L741.3 176.0L739.5 174.4L737.6 172.8L735.7 171.1L733.6 169.4L731.5 167.8L729.3 166.3L727.1 164.8L724.9 163.3L722.6 162.0L720.1 160.7L717.6 159.5L715.0 158.4L712.3 157.4L709.7 156.5L707.0 155.7L704.3 155.0L701.6 154.4L698.9 154.0L696.1 153.7L693.4 153.4L690.6 153.3L687.9 153.3L685.1 153.4L682.5 153.5L679.8 153.6L677.2 153.9L674.6 154.1L672.0 154.5L669.5 154.9L666.9 155.4L664.3 155.9L661.8 156.6L659.2 157.4L656.6 158.3L653.9 159.2L651.3 160.3L648.6 161.5L646.0 162.7L643.4 164.0L641.0 165.4L638.6 166.8L636.1 168.5L633.7 170.3L631.4 172.1L629.2 174.1L627.1 176.1L625.1 178.2L623.1 180.4L621.5 182.4L619.9 184.4L618.5 186.5L617.0 188.7L615.7 190.9L614.4 193.2L613.1 195.6L611.9 198.0L610.7 200.5L609.6 203.1L608.6 205.8L607.6 208.5L606.6 211.3L605.7 214.0L604.8 216.7L604.0 219.4L603.3 221.9L602.6 224.5L601.9 227.0L601.3 229.5L600.7 232.0L600.2 234.5L599.7 237.0L599.2 239.7L598.7 242.5L598.3 245.6L597.9 248.8L597.5 252.0L597.2 255.1L596.9 257.8L596.6 260.1L596.5 261.8A1.6 1.6 0 0 0 599.5 262.2ZM698.2 258.4L700.3 256.7L702.8 254.7L705.0 253.5L707.3 253.2L709.9 253.4L712.8 254.0L715.2 254.6L717.8 255.4L720.4 256.5L722.6 257.7L724.5 259.1L726.4 260.7L728.1 262.5L729.4 264.1L730.5 266.0L731.1 268.0L731.4 270.1L731.3 272.3L730.8 274.8L730.0 276.9L728.9 278.8L727.4 280.5L725.8 281.9L723.4 283.2L721.1 283.6L719.2 283.2L717.4 282.0L716.2 280.4L715.6 278.9L716.0 277.6L717.1 275.5A2.3 2.3 0 0 0 712.9 273.5L711.7 275.2L710.4 279.1L711.4 282.8L713.6 286.0L716.8 288.2L720.9 289.4L725.1 288.9L729.2 287.1L731.7 285.3L734.0 282.9L736.0 280.1L737.4 276.9L738.3 273.4L738.6 269.9L738.3 266.6L737.4 263.2L735.6 259.9L733.8 257.5L731.6 255.3L729.2 253.1L726.4 251.3L723.4 249.8L720.2 248.6L717.0 247.6L714.0 247.0L710.2 246.9L706.5 247.3L703.0 248.5L699.7 251.0L697.2 253.8L695.8 255.6A1.8 1.8 0 0 0 698.2 258.4ZM752.7 336.2L750.8 336.3L747.8 336.4L744.3 336.8L741.0 337.8L738.3 339.1L735.7 340.8L733.3 343.0L731.2 345.5L729.9 347.9L728.7 350.6L727.8 353.4L727.1 356.1L726.8 358.8L726.9 362.1L727.5 365.1L728.5 368.0L729.8 370.4L732.5 373.2L735.5 375.0L738.5 376.0L743.1 375.5L746.3 373.2L748.0 369.0L748.3 366.6A2.3 2.3 0 0 0 743.7 365.4L743.2 368.2L742.7 369.8L741.1 370.8L739.5 371.0L737.7 370.3L735.6 369.1L734.2 367.6L733.3 365.9L732.6 363.8L732.2 361.5L732.2 359.2L732.5 357.2L733.0 354.8L733.8 352.5L734.8 350.3L735.8 348.5L737.2 346.6L738.9 344.9L740.9 343.4L743.0 342.2L745.3 341.4L748.3 340.7L751.2 340.2L753.3 339.8A1.8 1.8 0 0 0 752.7 336.2ZM623.0 200.8L624.2 199.5L625.6 197.6L627.4 195.5L629.3 193.3L631.3 191.3L633.0 189.6L634.9 188.0L636.8 186.3L638.8 184.7L640.9 183.2L643.1 181.9L645.5 180.6L648.1 179.4L650.8 178.2L653.5 177.2L656.1 176.4L658.5 175.8L661.1 175.4L663.7 175.3L666.1 175.4L668.3 175.7L670.3 176.2L673.0 177.5L675.3 179.3L676.5 180.9L676.1 183.1L674.6 186.5A2.0 2.0 0 0 0 678.4 187.5L679.9 184.7L680.5 179.1L678.5 176.2L675.5 173.6L671.7 171.8L669.3 171.1L666.6 170.7L663.7 170.6L660.7 170.7L657.5 171.2L654.8 171.9L652.0 172.9L649.1 174.0L646.2 175.3L643.4 176.7L640.9 178.1L638.5 179.7L636.3 181.4L634.2 183.3L632.2 185.1L630.4 186.9L628.7 188.7L626.7 191.0L624.9 193.5L623.2 195.8L621.9 197.8L621.0 199.2A1.3 1.3 0 0 0 623.0 200.8ZM741.3 173.4L742.8 174.5L745.0 176.0L747.7 177.7L750.5 179.4L753.4 180.5L756.8 180.9L760.1 180.7L763.2 180.1L765.9 179.2L769.1 177.1L771.6 174.5L773.2 172.0L773.6 167.6L773.1 165.5A1.6 1.6 0 0 0 769.9 165.5L770.2 168.1L769.8 170.0L768.4 171.8L766.4 173.6L764.1 174.8L762.0 175.4L759.6 175.8L757.0 175.8L754.6 175.5L752.4 174.9L749.7 173.9L747.0 172.6L744.5 171.4L742.7 170.6A1.6 1.6 0 0 0 741.3 173.4ZM749.4 180.4L751.5 181.4L754.4 182.8L757.5 184.2L759.9 185.6L762.4 186.9L764.5 188.2L766.0 189.5L767.6 191.2L768.9 193.1A1.3 1.3 0 0 0 771.1 191.9L770.7 189.8L769.0 186.5L767.1 184.8L764.8 183.1L762.1 181.4L759.1 180.3L755.8 179.2L752.7 178.2L750.6 177.6A1.6 1.6 0 0 0 749.4 180.4ZM664.7 407.3L663.1 406.5L660.8 405.3L658.0 403.8L654.9 402.4L651.7 401.1L648.5 400.1L645.8 399.6L643.1 399.3L640.3 399.1L637.5 399.1L634.8 399.1L632.2 399.2L629.8 399.4L626.4 399.8L623.3 400.4L620.3 401.2L617.5 402.1L614.9 403.1L612.0 404.6L609.5 406.4L607.4 408.4L605.7 410.6L604.2 414.2L603.8 417.9L604.3 421.3L607.2 425.7L611.5 428.1L616.4 426.2L618.5 424.3A2.1 2.1 0 0 0 616.5 420.7L613.7 422.4L612.5 422.9L611.0 421.8L609.7 419.7L609.4 417.8L609.6 415.4L610.3 413.4L611.4 412.0L612.9 410.5L614.8 409.1L617.1 407.9L619.2 407.0L621.7 406.2L624.4 405.5L627.3 405.0L630.2 404.6L632.6 404.4L635.0 404.2L637.6 404.2L640.1 404.2L642.7 404.3L645.2 404.5L647.5 404.9L650.2 405.6L653.2 406.6L656.2 407.7L659.0 408.9L661.5 410.0L663.3 410.7A1.8 1.8 0 0 0 664.7 407.3ZM668.7 429.7L667.9 432.1L666.9 435.4L665.7 438.0L664.1 440.2L662.2 442.1L660.5 443.4L658.7 444.1L657.3 444.0L657.0 443.7L655.8 441.7A2.2 2.2 0 0 0 652.2 444.3L652.8 446.0L655.7 449.0L659.4 449.2L663.5 447.6L665.7 445.5L667.7 442.9L669.3 440.0L670.4 436.3L671.0 432.8L671.3 430.3A1.3 1.3 0 0 0 668.7 429.7ZM685.3 464.6L684.3 466.9L683.1 470.0L681.8 472.4L679.3 474.6L677.3 475.6L677.8 475.7L676.2 474.3A2.1 2.1 0 0 0 673.8 477.7L674.5 478.9L678.7 480.4L682.2 478.2L685.2 474.6L686.5 471.3L687.3 467.8L687.7 465.4A1.3 1.3 0 0 0 685.3 464.6ZM590.2 497.4L591.1 495.4L592.2 492.5L593.5 489.5L594.9 487.2L596.5 485.2L598.4 483.4L600.4 482.0L602.2 481.1L604.7 480.5L607.4 480.5L609.3 481.0L610.3 481.7L611.4 483.3L611.9 484.4L611.6 485.2L610.0 487.8A2.3 2.3 0 0 0 614.0 490.2L615.9 488.6L618.1 483.6L617.1 480.4L615.0 477.4L611.7 475.0L607.9 474.3L603.8 474.6L599.8 475.9L597.2 477.6L594.9 479.8L592.9 482.2L591.1 484.8L589.8 488.0L588.8 491.4L588.2 494.5L587.8 496.6A1.3 1.3 0 0 0 590.2 497.4ZM597.0 580.1L597.2 578.1L597.3 575.3L597.4 572.2L597.6 568.9L598.0 565.8L598.5 563.4L599.6 560.5L601.0 557.9L602.6 555.9L604.2 554.4L606.2 553.6L608.9 553.4L611.3 553.3A1.8 1.8 0 0 0 610.7 549.7L608.8 549.8L605.5 550.0L601.8 551.6L599.9 553.6L598.1 556.1L596.6 559.2L595.5 562.6L595.1 565.4L594.9 568.7L594.8 572.1L594.9 575.3L594.9 578.1L595.0 579.9A1.0 1.0 0 0 0 597.0 580.1ZM680.4 511.3L678.7 511.9L676.5 512.9L674.0 514.0L671.3 515.1L668.6 516.0L666.0 516.7L663.8 517.0L661.2 517.1L658.5 516.8L655.7 516.3L653.0 515.6L650.5 514.7L648.1 513.6L645.9 512.5L643.9 511.2L641.9 509.7L640.1 508.0L638.5 506.3L637.1 504.5L635.7 502.2L634.5 499.6L633.5 497.0L632.9 494.3L632.6 491.9L632.7 489.5L633.1 487.0L633.9 484.6L634.9 482.4L636.0 480.6L637.4 479.2L639.2 477.9L641.2 476.9L643.4 476.1L645.4 475.6L648.0 475.4L650.9 475.6L653.5 476.3L655.7 477.2L657.4 478.6L659.0 480.6L660.2 482.7L660.8 484.6L660.7 486.7L659.9 489.4L658.7 491.3L657.3 492.1L655.6 492.3L655.7 492.1L654.5 489.8A2.3 2.3 0 0 0 650.5 492.2L651.1 494.2L654.4 497.7L658.7 497.5L663.3 494.7L665.0 491.7L666.2 487.8L666.2 483.4L665.1 480.4L663.3 477.5L661.1 474.9L658.3 472.8L655.2 471.4L651.7 470.5L648.1 470.2L644.6 470.4L641.9 471.1L639.1 472.1L636.5 473.5L634.1 475.2L632.0 477.4L630.3 479.9L629.0 482.7L628.1 485.8L627.5 488.9L627.4 492.1L627.8 495.3L628.5 498.5L629.7 501.6L631.1 504.7L632.9 507.5L634.6 509.7L636.5 511.7L638.6 513.6L640.9 515.4L643.3 517.0L645.9 518.4L648.6 519.5L651.6 520.5L654.6 521.3L657.8 521.8L661.0 522.1L664.2 522.0L667.2 521.3L670.1 520.3L673.0 519.1L675.8 517.8L678.3 516.5L680.3 515.4L681.6 514.7A1.8 1.8 0 0 0 680.4 511.3ZM653.9 512.2L652.0 510.7L649.5 508.8L647.7 506.9L645.9 504.0L645.1 501.6L645.3 501.0L646.5 499.0A2.2 2.2 0 0 0 642.5 497.0L641.3 498.2L639.9 502.4L641.5 506.4L644.3 510.1L647.1 512.2L650.1 513.8L652.1 514.8A1.6 1.6 0 0 0 653.9 512.2Z"/>
</g>
<g stroke="#dadada">
<use href="#t4" stroke-width="2.7"/>
<use href="#t6" stroke-width="2.2"/>
<use href="#t7" stroke-width="1.8"/>
<use href="#t8" stroke-width="1.8"/>
<path stroke="none" fill="#dadada" d="M599.8 237.8L599.4 239.5L599.0 241.7L598.6 244.4L598.0 247.3L597.5 250.5L597.0 253.7L596.6 256.8L596.2 259.8L595.9 262.4L595.7 265.0L595.4 267.6L595.2 270.2L595.0 272.9L594.9 275.6L594.8 278.2L594.7 280.9L594.8 283.6L594.9 286.2L595.0 288.8L595.1 291.5L595.4 294.1L595.6 296.8L595.9 299.5L596.3 302.1L596.8 304.8L597.4 307.5L598.1 310.2L598.8 312.8L599.6 315.5L600.5 318.1L601.4 320.7L602.4 323.4L603.5 326.0L604.7 328.7L605.8 331.3L607.0 333.7L608.3 336.2L609.6 338.7L611.0 341.2L612.4 343.7L613.8 346.2L615.2 348.6L616.7 350.8L618.0 353.0L619.3 355.1L621.2 357.8L623.0 360.2L624.8 362.5L626.6 364.6L628.3 366.7L629.9 368.6L631.4 370.5L633.1 372.7L634.6 374.8L636.0 376.9L637.5 378.9L639.0 380.9L640.8 383.0L642.4 384.9L644.0 386.8L645.8 388.7L647.6 390.6L649.4 392.5L651.2 394.3L652.9 396.1L654.9 398.1L657.0 400.1L659.0 402.0L661.0 403.8L663.0 405.7L664.9 407.6L666.8 409.5L668.8 411.4L670.7 413.3L672.5 415.3L674.2 417.1L675.8 419.0L677.7 421.2L679.3 423.3L680.9 425.4L682.4 427.6L683.7 429.8L684.8 431.9L685.8 434.0L686.6 436.2L687.5 438.7L688.6 441.5L689.4 443.8L690.2 446.3L691.1 449.0L692.0 451.7L692.9 454.6L693.7 457.5L694.5 460.4L695.1 462.7L695.7 465.0L696.3 467.4L696.9 469.9L697.5 472.3L698.1 474.8L698.6 477.3L699.1 479.8L699.5 482.3L699.9 484.7L700.2 487.3L700.6 489.8L700.9 492.4L701.1 494.9L701.4 497.5L701.6 500.1L701.8 502.6L702.0 505.1L702.2 507.9L702.3 510.8L702.5 513.7L702.6 516.5L702.6 519.3L702.6 521.9L702.6 524.5L702.5 526.9L702.2 529.9L701.8 532.7L701.4 535.3L700.8 537.8L700.2 540.2L699.5 542.6L698.6 545.2L697.6 547.7L696.5 550.1L695.3 552.6L694.1 555.4L693.1 557.9L692.0 560.5L691.0 563.2L689.9 565.9L688.8 568.7L687.6 571.4L686.6 573.8L685.5 576.2L684.4 578.7L683.2 581.2L682.1 583.6L680.9 586.0L679.7 588.3L678.3 591.0L676.9 593.5L675.4 596.1L673.9 598.5L672.4 600.9L670.8 603.2L669.2 605.4L667.5 607.6L665.7 609.8L664.0 611.7L662.4 613.5L661.0 615.0L657.6 617.4L655.1 618.7A1.6 1.6 0 0 0 656.9 621.3L659.1 620.1L663.0 617.0L664.5 615.5L666.2 613.7L667.9 611.6L669.7 609.4L671.5 607.1L673.2 604.8L674.8 602.5L676.3 600.1L677.9 597.5L679.4 595.0L680.8 592.3L682.3 589.7L683.5 587.3L684.7 584.9L685.9 582.4L687.1 579.9L688.2 577.5L689.3 575.0L690.4 572.6L691.6 569.8L692.7 567.1L693.8 564.3L694.9 561.6L695.9 559.1L696.9 556.6L698.1 553.9L699.3 551.4L700.4 548.9L701.5 546.3L702.5 543.4L703.2 541.0L703.8 538.5L704.4 535.9L704.9 533.1L705.3 530.2L705.5 527.1L705.6 524.6L705.7 522.0L705.7 519.2L705.6 516.4L705.5 513.5L705.4 510.6L705.2 507.7L705.0 504.9L704.8 502.4L704.7 499.8L704.4 497.2L704.2 494.6L703.9 492.0L703.6 489.4L703.3 486.9L702.9 484.3L702.5 481.7L702.1 479.2L701.6 476.7L701.1 474.2L700.5 471.6L699.9 469.2L699.3 466.7L698.7 464.3L698.1 461.9L697.5 459.6L696.7 456.6L695.8 453.7L694.9 450.8L694.0 448.0L693.1 445.3L692.3 442.8L691.4 440.5L690.4 437.6L689.5 435.1L688.6 432.8L687.5 430.5L686.3 428.2L684.9 425.9L683.4 423.7L681.8 421.5L680.0 419.3L678.2 417.0L676.5 415.1L674.7 413.2L672.8 411.2L670.9 409.3L669.0 407.3L667.1 405.4L665.1 403.5L663.1 401.6L661.1 399.7L659.1 397.8L657.1 395.9L655.1 393.9L653.4 392.1L651.6 390.3L649.9 388.4L648.1 386.5L646.4 384.7L644.8 382.8L643.2 381.0L641.6 378.9L640.2 376.9L638.7 374.9L637.3 372.9L635.8 370.8L634.2 368.5L632.6 366.4L631.0 364.4L629.4 362.3L627.8 360.2L626.1 358.0L624.4 355.6L622.7 352.9L621.4 350.9L620.1 348.7L618.7 346.5L617.4 344.1L616.0 341.7L614.6 339.2L613.3 336.7L612.0 334.3L610.9 331.9L609.8 329.5L608.6 326.9L607.5 324.4L606.5 321.8L605.5 319.2L604.6 316.7L603.7 314.1L602.9 311.6L602.2 309.1L601.6 306.5L601.1 304.0L600.6 301.4L600.3 298.9L600.0 296.3L599.8 293.8L599.6 291.2L599.4 288.6L599.3 286.0L599.2 283.4L599.1 280.9L599.1 278.3L599.1 275.7L599.1 273.1L599.2 270.5L599.3 267.9L599.5 265.3L599.6 262.7L599.8 260.2L600.0 257.2L600.3 254.1L600.7 250.9L601.1 247.8L601.5 244.8L601.8 242.1L602.1 239.9L602.2 238.2A1.3 1.3 0 0 0 599.8 237.8ZM627.9 618.3L626.3 617.5L624.2 616.5L621.7 615.2L619.2 613.9L617.1 612.6L615.1 611.1L613.2 609.5L611.4 607.8L609.7 606.0L608.0 604.0L606.6 602.2L605.3 600.1L603.9 598.0L602.7 595.7L601.5 593.5L600.4 591.3L599.2 588.8L598.2 586.3L597.3 583.7L596.5 581.1L595.7 578.6L594.9 576.1L594.3 573.7L593.7 571.2L593.1 568.6L592.5 565.7L592.0 563.4L591.6 561.0L591.1 558.4L590.6 555.8L590.2 553.1L589.8 550.5L589.5 547.8L589.3 545.3L589.1 542.8L588.9 540.4L588.7 537.8L588.6 535.1L588.6 532.2L588.5 529.0L588.5 526.7L588.5 524.3L588.5 521.7L588.5 519.1L588.5 516.3L588.6 513.6L588.6 510.8L588.7 508.0L588.8 505.3L588.9 502.6L589.0 500.1L589.2 497.3L589.3 494.6L589.5 491.9L589.7 489.3L589.9 486.6L590.2 484.0L590.4 481.5L590.8 479.0L591.1 476.6L591.5 474.3L592.1 471.4L592.7 468.6L593.4 465.8L594.1 463.2L594.9 460.6L595.7 458.1L596.6 455.8L597.4 453.6L598.6 450.8L599.7 448.4L600.9 446.1L602.2 444.0L603.6 442.0L605.2 440.0L607.0 438.0L609.0 436.0L611.1 434.1L613.3 432.4L615.6 430.7L617.8 429.3L620.0 428.1L622.2 427.0L624.5 426.0L626.8 425.2L629.0 424.5L631.3 424.0L634.0 423.5L636.7 423.3L639.3 423.2L642.0 423.3L644.8 423.5L647.2 423.9L649.8 424.3L652.3 424.9L654.8 425.7L657.2 426.5L659.4 427.4L661.8 428.6L664.0 430.0L666.1 431.6L668.1 433.3L669.9 435.1L671.6 436.9L673.1 438.9L674.6 441.0L675.9 443.2L677.1 445.7L678.1 447.8L679.0 450.2L679.9 452.7L680.7 455.2L681.4 457.8L682.0 460.3L682.5 462.9L683.0 465.5L683.4 468.1L683.6 470.8L683.8 473.4L684.0 476.0L684.0 478.7L684.0 481.4L683.9 484.1L683.7 486.7L683.4 489.3L683.0 491.7L682.4 494.4L681.7 496.9L680.8 499.4L679.8 501.8L678.6 504.3L677.6 506.5L676.4 508.6L675.2 510.8L673.8 512.9L672.4 515.0L670.8 517.0L669.1 519.0L667.3 521.0L665.4 522.9L663.4 524.9L661.3 526.8L659.0 528.8L657.2 530.4L655.3 531.9L653.3 533.5L651.2 535.1L649.1 536.6L647.0 538.2L645.0 539.8L643.0 541.3L640.9 543.0L638.8 544.6L636.6 546.3L634.5 547.9L632.5 549.5L630.6 551.2L628.9 553.0L626.7 555.4L624.9 557.8L623.2 560.3L621.8 562.8L620.6 565.4L619.6 568.1L618.9 570.8L618.4 573.5L618.1 576.3L618.0 579.0L618.1 581.8L618.4 584.6L618.9 587.4L619.6 590.1L620.6 592.7L622.2 595.5L624.2 598.1L626.5 600.4L629.2 602.3L631.6 603.6L634.4 604.8L637.2 605.7L640.2 606.3L643.0 606.5L645.8 606.3L648.6 605.7L651.2 604.8L653.7 603.6L655.9 602.3L658.3 600.2L660.2 597.7L661.7 595.1L662.9 592.6L663.7 589.9L664.2 587.1L664.3 584.3L663.9 581.7L662.9 578.4L661.2 575.4L658.9 572.9L656.0 571.0L652.6 569.7L649.1 569.1L645.7 569.2L642.3 570.0L639.3 571.3L636.8 573.3L634.7 575.8L633.3 578.5L632.5 581.5L632.4 584.5L632.8 587.3L634.6 590.9L637.3 593.5L640.8 594.7L644.2 594.7L647.4 593.3L649.9 591.3L651.2 588.3L651.6 586.4A1.2 1.2 0 0 0 649.4 585.6L648.9 587.8L648.1 589.7L646.2 591.4L643.8 592.3L641.1 592.3L638.7 591.5L636.6 589.4L635.2 586.7L634.9 584.4L635.1 581.8L635.7 579.5L636.9 577.3L638.7 575.2L640.7 573.7L643.2 572.6L646.0 572.0L648.9 571.9L651.8 572.5L654.7 573.6L657.1 575.1L658.9 577.1L660.2 579.6L661.1 582.3L661.3 584.4L661.2 586.8L660.8 589.2L660.1 591.4L659.0 593.7L657.7 596.0L656.0 598.1L654.1 599.7L652.2 600.9L650.1 601.9L647.7 602.7L645.3 603.3L643.0 603.5L640.6 603.3L638.0 602.7L635.4 601.9L633.0 600.9L630.8 599.7L628.5 598.0L626.5 596.0L624.8 593.8L623.4 591.3L622.5 589.2L621.9 586.8L621.4 584.2L621.1 581.6L621.0 579.0L621.1 576.5L621.4 574.0L621.9 571.5L622.5 569.0L623.4 566.6L624.5 564.2L625.8 561.9L627.3 559.6L629.1 557.3L631.1 555.0L632.7 553.5L634.5 551.9L636.4 550.3L638.5 548.7L640.6 547.1L642.8 545.4L645.0 543.7L646.9 542.2L648.9 540.7L651.0 539.1L653.0 537.5L655.1 535.9L657.2 534.3L659.2 532.7L661.0 531.2L663.3 529.1L665.5 527.1L667.6 525.1L669.6 523.1L671.4 521.1L673.2 519.0L674.8 516.8L676.4 514.6L677.8 512.4L679.1 510.1L680.3 507.9L681.4 505.7L682.6 503.1L683.6 500.5L684.6 497.9L685.4 495.2L686.0 492.3L686.4 489.7L686.7 487.0L686.9 484.3L687.0 481.5L687.1 478.7L687.0 476.0L686.9 473.2L686.7 470.5L686.4 467.7L686.0 465.0L685.5 462.3L685.0 459.7L684.4 457.0L683.6 454.3L682.8 451.7L681.9 449.1L680.9 446.7L679.9 444.3L678.6 441.8L677.1 439.4L675.6 437.1L673.9 435.0L672.1 432.9L670.1 431.0L668.0 429.2L665.7 427.5L663.3 426.0L660.6 424.6L658.3 423.6L655.7 422.7L653.1 422.0L650.4 421.4L647.7 420.9L645.2 420.5L642.2 420.2L639.3 420.1L636.5 420.2L633.6 420.5L630.7 421.0L628.3 421.6L625.8 422.3L623.4 423.2L621.0 424.2L618.6 425.4L616.2 426.7L613.9 428.2L611.5 429.9L609.1 431.8L606.9 433.8L604.8 435.9L602.8 438.0L601.1 440.2L599.6 442.4L598.2 444.6L597.0 447.0L595.8 449.6L594.6 452.4L593.7 454.7L592.8 457.1L592.0 459.7L591.2 462.3L590.4 465.1L589.7 467.9L589.1 470.8L588.5 473.7L588.1 476.1L587.7 478.6L587.4 481.2L587.1 483.7L586.9 486.4L586.7 489.0L586.5 491.7L586.3 494.4L586.1 497.2L586.0 499.9L585.8 502.5L585.7 505.2L585.6 507.9L585.6 510.7L585.5 513.5L585.5 516.3L585.5 519.1L585.4 521.7L585.4 524.3L585.5 526.7L585.5 529.0L585.5 532.3L585.6 535.2L585.7 538.0L585.8 540.5L586.0 543.1L586.2 545.6L586.5 548.2L586.8 550.9L587.2 553.6L587.6 556.3L588.1 559.0L588.6 561.5L589.0 564.0L589.5 566.3L590.1 569.2L590.7 571.9L591.3 574.4L592.0 576.9L592.7 579.4L593.6 582.1L594.4 584.7L595.4 587.3L596.4 590.0L597.6 592.7L598.7 594.9L599.9 597.2L601.2 599.5L602.6 601.8L604.0 604.0L605.4 606.0L607.2 608.2L609.0 610.2L610.9 612.1L612.9 613.8L614.9 615.4L617.3 617.1L619.9 618.6L622.5 619.9L624.6 621.0L626.1 621.7A2.0 2.0 0 0 0 627.9 618.3ZM599.1 262.1L599.3 260.4L599.6 258.1L600.0 255.4L600.3 252.4L600.8 249.2L601.2 246.0L601.7 243.0L602.2 240.2L602.8 237.7L603.3 235.2L603.9 232.7L604.5 230.3L605.1 227.8L605.8 225.4L606.6 222.9L607.4 220.4L608.2 217.8L609.1 215.2L610.1 212.5L611.1 209.8L612.1 207.2L613.2 204.6L614.3 202.1L615.4 199.7L616.6 197.4L617.9 195.2L619.1 193.0L620.5 190.9L621.8 188.9L623.3 186.9L624.7 185.0L626.3 183.1L628.1 181.1L630.1 179.1L632.1 177.2L634.1 175.4L636.3 173.7L638.6 172.1L641.0 170.5L643.2 169.2L645.5 168.0L647.9 166.7L650.4 165.6L653.0 164.5L655.5 163.5L658.1 162.6L660.6 161.8L663.0 161.1L665.4 160.5L667.8 160.0L670.3 159.5L672.7 159.2L675.1 158.9L677.6 158.6L680.1 158.5L682.7 158.4L685.2 158.3L687.8 158.3L690.4 158.4L693.0 158.5L695.6 158.8L698.1 159.1L700.6 159.6L703.0 160.2L705.5 160.9L708.0 161.7L710.4 162.6L712.8 163.6L715.2 164.6L717.6 165.8L719.9 167.0L721.9 168.2L724.0 169.5L726.0 170.9L728.1 172.4L730.1 173.9L732.0 175.5L733.9 177.1L735.7 178.7L737.4 180.2L739.4 182.1L741.3 184.1L743.0 186.1L744.7 188.1L746.3 190.2L747.8 192.2L749.2 194.2L750.8 196.5L752.3 198.8L753.6 201.0L754.9 203.2L756.1 205.5L757.2 207.8L758.3 210.2L759.4 212.5L760.3 214.9L761.2 217.3L762.0 219.8L762.8 222.4L763.3 224.8L763.8 227.2L764.3 229.7L764.6 232.2L764.9 234.8L765.2 237.4L765.3 240.0L765.3 242.4L765.2 244.9L765.1 247.5L764.9 250.0L764.7 252.6L764.4 255.1L764.1 257.5L763.8 259.8L763.4 262.5L762.9 265.1L762.4 267.5L761.8 269.8L761.2 272.1L760.4 274.4L759.5 276.8L758.4 279.1L757.3 281.5L756.1 283.8L754.9 286.0L753.6 288.1L752.0 290.5L750.4 292.7L748.7 294.9L746.9 296.8L744.9 298.7L743.0 300.2L741.0 301.7L738.9 303.1L736.7 304.4L734.5 305.5L732.4 306.4L729.8 307.3L727.1 308.0L724.4 308.5L721.7 308.8L719.1 308.8L716.3 308.6L713.5 308.2L710.7 307.5L708.2 306.6L705.9 305.5L703.8 304.1L701.8 302.4L700.0 300.4L698.4 298.3L697.0 296.1L695.8 293.9L694.8 291.6L694.0 289.1L693.4 286.5L692.9 283.8L692.7 281.4L692.6 278.8L692.7 276.0L692.9 273.3L693.1 270.6L693.2 268.1L693.4 264.8L693.6 261.8L693.8 258.9L694.1 256.2L694.5 253.4L695.1 250.6L695.6 248.1L695.9 246.3A1.4 1.4 0 0 0 693.1 245.7L692.7 247.4L692.1 249.9L691.4 252.8L690.9 255.8L690.5 258.6L690.2 261.5L690.0 264.6L689.8 267.9L689.6 270.4L689.5 273.0L689.3 275.9L689.2 278.7L689.3 281.5L689.5 284.2L690.0 287.2L690.7 290.0L691.6 292.8L692.7 295.4L694.0 297.9L695.6 300.3L697.4 302.6L699.4 304.8L701.7 306.8L704.1 308.5L706.9 309.8L709.8 310.8L712.9 311.5L715.9 312.0L718.9 312.2L721.9 312.2L724.9 311.9L727.8 311.4L730.8 310.6L733.6 309.6L736.0 308.6L738.4 307.4L740.7 306.0L743.0 304.5L745.1 302.9L747.1 301.3L749.3 299.2L751.3 297.1L753.1 294.8L754.8 292.4L756.4 289.9L757.8 287.7L759.1 285.4L760.4 283.0L761.6 280.6L762.6 278.1L763.6 275.6L764.4 273.1L765.2 270.7L765.8 268.3L766.3 265.7L766.8 263.1L767.2 260.2L767.5 257.9L767.8 255.5L768.1 253.0L768.3 250.3L768.5 247.7L768.7 245.0L768.7 242.5L768.7 240.0L768.6 237.2L768.4 234.5L768.1 231.8L767.7 229.1L767.3 226.5L766.8 224.0L766.2 221.6L765.5 218.8L764.7 216.1L763.9 213.6L762.9 211.1L761.9 208.6L760.8 206.2L759.7 203.7L758.5 201.3L757.2 198.9L755.8 196.6L754.4 194.2L752.8 191.8L751.3 189.7L749.8 187.6L748.2 185.4L746.5 183.2L744.7 181.1L742.7 178.9L740.6 176.8L738.8 175.2L737.0 173.5L735.0 171.9L733.0 170.3L730.9 168.7L728.7 167.1L726.5 165.6L724.3 164.2L722.1 163.0L719.6 161.7L717.1 160.5L714.6 159.4L712.0 158.4L709.4 157.5L706.7 156.7L704.1 156.0L701.4 155.4L698.7 154.9L696.0 154.6L693.3 154.4L690.6 154.2L687.9 154.2L685.2 154.3L682.5 154.4L679.9 154.5L677.3 154.7L674.7 155.0L672.2 155.3L669.6 155.7L667.1 156.2L664.5 156.8L662.0 157.4L659.4 158.2L656.9 159.1L654.2 160.0L651.6 161.1L648.9 162.2L646.3 163.4L643.8 164.7L641.4 166.1L639.0 167.5L636.5 169.1L634.2 170.9L631.9 172.7L629.7 174.6L627.6 176.6L625.6 178.7L623.7 180.9L622.1 182.8L620.5 184.9L619.1 187.0L617.7 189.1L616.3 191.3L615.0 193.6L613.8 195.9L612.6 198.3L611.4 200.8L610.3 203.4L609.2 206.1L608.2 208.8L607.2 211.5L606.3 214.3L605.4 216.9L604.6 219.6L603.9 222.1L603.1 224.6L602.5 227.1L601.9 229.6L601.3 232.1L600.8 234.6L600.3 237.2L599.8 239.8L599.3 242.6L598.8 245.7L598.4 248.9L598.0 252.1L597.7 255.1L597.4 257.9L597.1 260.2L596.9 261.9A1.1 1.1 0 0 0 599.1 262.1ZM697.8 258.0L699.8 256.3L702.3 254.1L704.7 252.8L707.2 252.3L710.0 252.4L713.0 252.9L715.5 253.5L718.2 254.4L720.8 255.5L723.2 256.7L725.2 258.2L727.2 259.9L729.0 261.7L730.3 263.5L731.5 265.6L732.2 267.8L732.5 270.1L732.4 272.5L731.8 275.1L730.9 277.4L729.7 279.4L728.0 281.3L726.3 282.7L723.6 284.1L721.1 284.5L718.8 283.9L716.8 282.6L715.4 280.8L714.8 278.9L715.3 277.3L716.5 275.2A1.6 1.6 0 0 0 713.5 273.8L712.4 275.6L711.2 279.1L712.1 282.5L714.2 285.4L717.2 287.4L720.9 288.5L724.9 288.0L728.7 286.3L731.0 284.5L733.2 282.3L735.1 279.6L736.4 276.6L737.2 273.3L737.5 269.9L737.2 266.8L736.3 263.6L734.7 260.5L732.9 258.3L730.8 256.1L728.4 254.1L725.8 252.3L723.0 250.8L719.9 249.6L716.8 248.7L713.8 248.1L710.1 247.9L706.6 248.2L703.3 249.2L700.1 251.5L697.7 254.2L696.2 256.0A1.3 1.3 0 0 0 697.8 258.0ZM752.8 336.8L750.8 336.9L747.8 337.1L744.5 337.5L741.3 338.4L738.7 339.8L736.2 341.5L733.9 343.5L731.9 346.0L730.6 348.3L729.5 350.9L728.6 353.6L728.0 356.3L727.6 358.9L727.7 362.0L728.3 364.9L729.2 367.7L730.5 370.0L733.0 372.6L735.9 374.3L738.6 375.3L742.8 374.7L745.8 372.7L747.2 368.9L747.6 366.4A1.6 1.6 0 0 0 744.4 365.6L744.0 368.3L743.2 370.3L741.4 371.5L739.4 371.7L737.4 371.1L735.2 369.7L733.5 368.0L732.6 366.2L731.8 364.0L731.4 361.6L731.4 359.1L731.7 357.0L732.2 354.6L733.0 352.2L734.0 349.9L735.1 348.0L736.6 346.0L738.4 344.3L740.5 342.8L742.7 341.6L745.2 340.7L748.2 340.0L751.1 339.6L753.2 339.2A1.3 1.3 0 0 0 752.8 336.8ZM622.7 200.6L623.8 199.2L625.3 197.3L627.0 195.2L628.9 192.9L630.9 190.9L632.6 189.2L634.5 187.5L636.4 185.8L638.4 184.2L640.6 182.7L642.8 181.3L645.2 180.0L647.8 178.7L650.5 177.6L653.3 176.5L655.9 175.7L658.3 175.1L661.0 174.7L663.7 174.6L666.2 174.7L668.5 175.0L670.5 175.5L673.4 176.9L675.8 178.8L677.1 180.6L676.6 183.3L675.2 186.6A1.3 1.3 0 0 0 677.8 187.4L679.3 184.4L679.9 179.4L678.0 176.6L675.1 174.2L671.5 172.5L669.1 171.8L666.5 171.5L663.7 171.3L660.7 171.5L657.7 171.9L655.0 172.6L652.2 173.5L649.3 174.6L646.5 175.9L643.8 177.3L641.2 178.7L638.9 180.2L636.7 181.9L634.6 183.7L632.6 185.6L630.8 187.4L629.1 189.1L627.1 191.4L625.2 193.8L623.6 196.1L622.2 198.1L621.3 199.4A0.9 0.9 0 0 0 622.7 200.6ZM741.5 173.0L743.0 174.0L745.3 175.5L748.0 177.2L750.8 178.7L753.6 179.8L756.9 180.1L760.0 179.9L763.0 179.4L765.6 178.5L768.7 176.5L771.1 174.1L772.7 171.7L773.1 167.7L772.6 165.5A1.1 1.1 0 0 0 770.4 165.5L770.7 168.0L770.3 170.3L768.9 172.2L766.8 174.2L764.4 175.5L762.2 176.1L759.7 176.6L757.0 176.6L754.4 176.2L752.1 175.6L749.4 174.5L746.7 173.1L744.3 171.9L742.5 171.0A1.1 1.1 0 0 0 741.5 173.0ZM749.6 180.0L751.6 180.9L754.6 182.2L757.7 183.6L760.3 184.9L762.8 186.3L764.9 187.7L766.5 189.0L768.1 191.0L769.2 192.9A0.9 0.9 0 0 0 770.8 192.1L770.2 190.0L768.5 187.0L766.7 185.3L764.5 183.7L761.7 182.1L758.9 180.9L755.6 179.7L752.5 178.7L750.4 178.0A1.1 1.1 0 0 0 749.6 180.0ZM664.5 407.8L662.9 407.0L660.5 405.8L657.7 404.4L654.7 403.0L651.5 401.8L648.3 400.8L645.7 400.4L643.0 400.1L640.3 399.9L637.5 399.9L634.8 399.9L632.3 400.0L629.8 400.2L626.6 400.6L623.4 401.2L620.5 402.0L617.7 402.9L615.3 403.9L612.5 405.3L610.0 407.0L608.0 408.9L606.4 411.0L605.1 414.4L604.7 417.9L605.1 421.1L607.8 425.1L611.7 427.3L616.0 425.6L618.2 423.8A1.4 1.4 0 0 0 616.8 421.2L614.1 423.0L612.3 423.7L610.4 422.4L608.9 419.9L608.6 417.8L608.8 415.2L609.6 413.0L610.8 411.4L612.4 409.9L614.4 408.4L616.7 407.1L619.0 406.2L621.5 405.4L624.2 404.7L627.1 404.2L630.2 403.8L632.5 403.6L635.0 403.4L637.5 403.4L640.2 403.4L642.8 403.5L645.3 403.8L647.7 404.2L650.5 404.9L653.5 405.9L656.5 407.1L659.3 408.4L661.7 409.4L663.5 410.2A1.3 1.3 0 0 0 664.5 407.8ZM669.1 429.8L668.4 432.2L667.4 435.5L666.2 438.3L664.6 440.6L662.7 442.7L661.0 444.0L658.8 444.8L657.0 444.8L656.4 444.0L655.2 442.1A1.5 1.5 0 0 0 652.8 443.9L653.4 445.6L656.0 448.2L659.3 448.4L663.0 447.0L665.1 445.0L667.1 442.5L668.8 439.7L669.9 436.2L670.5 432.7L670.9 430.2A0.9 0.9 0 0 0 669.1 429.8ZM685.7 464.7L684.8 467.1L683.6 470.2L682.3 472.7L679.8 475.2L677.5 476.4L677.3 476.2L675.8 474.8A1.4 1.4 0 0 0 674.2 477.2L675.0 478.4L678.5 479.6L681.7 477.6L684.7 474.3L686.0 471.1L686.9 467.6L687.3 465.3A0.9 0.9 0 0 0 685.7 464.7ZM589.8 497.3L590.6 495.2L591.7 492.3L592.9 489.3L594.3 486.8L595.9 484.8L597.9 482.9L599.9 481.3L601.8 480.3L604.6 479.6L607.5 479.6L609.7 480.1L611.0 481.1L612.3 482.8L612.9 484.3L612.3 485.7L610.6 488.2A1.6 1.6 0 0 0 613.4 489.8L615.3 488.0L617.1 483.7L616.2 480.8L614.3 478.0L611.3 475.9L607.8 475.3L603.9 475.5L600.2 476.7L597.7 478.3L595.4 480.3L593.4 482.7L591.7 485.2L590.4 488.2L589.3 491.6L588.6 494.7L588.2 496.7A0.9 0.9 0 0 0 589.8 497.3ZM596.7 580.0L596.8 578.1L596.9 575.3L597.0 572.1L597.2 568.8L597.5 565.7L598.0 563.3L599.1 560.3L600.6 557.7L602.2 555.5L603.8 554.0L606.0 553.1L608.9 552.8L611.2 552.7A1.3 1.3 0 0 0 610.8 550.3L608.8 550.3L605.6 550.6L602.2 552.0L600.3 553.9L598.6 556.4L597.1 559.4L596.0 562.7L595.5 565.5L595.3 568.7L595.2 572.1L595.2 575.3L595.3 578.1L595.3 580.0A0.7 0.7 0 0 0 596.7 580.0ZM680.6 511.8L678.9 512.5L676.8 513.4L674.3 514.5L671.6 515.7L668.8 516.7L666.2 517.4L663.8 517.8L661.2 517.8L658.4 517.6L655.6 517.1L652.8 516.3L650.2 515.4L647.8 514.4L645.5 513.2L643.4 511.8L641.4 510.3L639.6 508.6L637.9 506.8L636.5 505.0L635.0 502.6L633.7 499.9L632.7 497.2L632.1 494.5L631.8 491.9L631.9 489.4L632.4 486.8L633.1 484.3L634.2 482.0L635.4 480.1L636.9 478.6L638.8 477.2L640.9 476.1L643.2 475.3L645.3 474.8L648.0 474.6L651.0 474.8L653.8 475.5L656.1 476.5L657.9 478.1L659.6 480.1L660.9 482.4L661.7 484.4L661.6 486.9L660.6 489.7L659.4 491.8L657.5 492.9L655.4 493.2L655.0 492.4L653.9 490.1A1.6 1.6 0 0 0 651.1 491.9L651.8 493.8L654.6 496.8L658.5 496.7L662.6 494.2L664.2 491.3L665.3 487.6L665.3 483.6L664.3 480.8L662.7 478.0L660.5 475.5L657.9 473.5L654.9 472.1L651.6 471.3L648.1 471.0L644.7 471.2L642.1 471.9L639.5 472.8L636.9 474.2L634.6 475.8L632.6 477.9L631.0 480.3L629.8 483.0L628.9 486.0L628.3 489.0L628.2 492.1L628.5 495.1L629.3 498.2L630.4 501.3L631.8 504.3L633.5 507.0L635.2 509.1L637.0 511.1L639.1 513.0L641.3 514.8L643.7 516.3L646.2 517.6L648.9 518.7L651.8 519.7L654.8 520.5L657.9 521.0L661.0 521.3L664.2 521.2L667.0 520.6L669.9 519.7L672.8 518.5L675.5 517.2L678.0 515.9L680.0 514.9L681.4 514.2A1.3 1.3 0 0 0 680.6 511.8ZM653.6 512.6L651.7 511.2L649.2 509.3L647.2 507.4L645.2 504.4L644.3 501.7L644.6 500.5L645.9 498.7A1.5 1.5 0 0 0 643.1 497.3L641.9 498.6L640.7 502.3L642.2 506.0L644.8 509.6L647.5 511.6L650.4 513.3L652.4 514.4A1.1 1.1 0 0 0 653.6 512.6Z"/>
</g>
<g stroke="#ececec">
<use href="#t4" stroke-width="1.5"/>
<use href="#t6" stroke-width="1.2"/>
<use href="#t7" stroke-width="1.0"/>
<use href="#t8" stroke-width="1.0"/>
<path stroke="none" fill="#ececec" d="M600.3 237.9L600.0 239.6L599.6 241.8L599.2 244.5L598.7 247.4L598.2 250.6L597.8 253.8L597.3 256.9L597.0 259.9L596.8 262.5L596.5 265.0L596.3 267.6L596.1 270.3L596.0 272.9L595.8 275.6L595.8 278.2L595.7 280.9L595.8 283.5L595.8 286.2L596.0 288.8L596.1 291.4L596.3 294.1L596.6 296.7L596.9 299.3L597.3 302.0L597.8 304.6L598.3 307.3L599.0 309.9L599.7 312.5L600.5 315.2L601.4 317.8L602.3 320.4L603.3 323.0L604.4 325.7L605.5 328.3L606.7 330.9L607.9 333.3L609.1 335.8L610.4 338.3L611.8 340.8L613.2 343.3L614.6 345.7L616.0 348.1L617.4 350.4L618.8 352.6L620.1 354.6L621.9 357.3L623.7 359.7L625.5 362.0L627.2 364.1L628.9 366.2L630.5 368.1L632.0 370.1L633.7 372.3L635.2 374.4L636.6 376.4L638.1 378.4L639.6 380.5L641.3 382.6L642.9 384.4L644.6 386.3L646.3 388.2L648.1 390.1L649.9 392.0L651.6 393.8L653.4 395.6L655.4 397.6L657.5 399.6L659.5 401.5L661.5 403.3L663.5 405.2L665.4 407.1L667.3 409.0L669.2 411.0L671.1 412.9L673.0 414.8L674.7 416.7L676.4 418.5L678.2 420.8L679.9 422.9L681.5 425.0L682.9 427.2L684.3 429.4L685.4 431.6L686.4 433.7L687.3 435.9L688.2 438.4L689.2 441.3L690.0 443.6L690.9 446.1L691.7 448.8L692.6 451.5L693.5 454.4L694.4 457.3L695.2 460.2L695.8 462.5L696.4 464.9L697.0 467.3L697.6 469.7L698.2 472.2L698.7 474.7L699.2 477.2L699.7 479.6L700.2 482.1L700.6 484.6L700.9 487.2L701.2 489.7L701.5 492.3L701.8 494.9L702.1 497.4L702.3 500.0L702.5 502.5L702.7 505.1L702.8 507.9L703.0 510.8L703.1 513.6L703.2 516.5L703.3 519.2L703.3 521.9L703.3 524.5L703.2 526.9L702.9 530.0L702.5 532.8L702.0 535.4L701.5 537.9L700.9 540.4L700.2 542.8L699.3 545.4L698.3 547.9L697.1 550.4L695.9 552.9L694.7 555.7L693.7 558.2L692.7 560.8L691.6 563.4L690.5 566.2L689.4 568.9L688.2 571.7L687.2 574.1L686.1 576.5L685.0 579.0L683.8 581.5L682.7 583.9L681.5 586.3L680.3 588.6L678.9 591.3L677.4 593.9L675.9 596.4L674.4 598.9L672.9 601.3L671.3 603.5L669.7 605.8L668.0 608.0L666.2 610.2L664.5 612.2L662.9 614.0L661.4 615.4L658.0 618.0L655.5 619.3A0.9 0.9 0 0 0 656.5 620.7L658.8 619.5L662.6 616.6L664.0 615.0L665.7 613.2L667.4 611.2L669.2 609.0L671.0 606.7L672.7 604.5L674.2 602.1L675.8 599.7L677.3 597.2L678.8 594.7L680.3 592.0L681.7 589.4L682.9 587.0L684.1 584.6L685.3 582.2L686.5 579.7L687.6 577.2L688.7 574.7L689.8 572.3L691.0 569.6L692.1 566.8L693.2 564.1L694.3 561.4L695.3 558.8L696.3 556.3L697.5 553.6L698.7 551.1L699.8 548.6L700.9 546.0L701.8 543.2L702.5 540.8L703.1 538.3L703.7 535.7L704.2 533.0L704.6 530.1L704.8 527.1L705.0 524.6L705.0 522.0L705.0 519.2L704.9 516.4L704.8 513.6L704.7 510.7L704.5 507.8L704.3 504.9L704.2 502.4L704.0 499.9L703.8 497.3L703.5 494.7L703.2 492.1L702.9 489.5L702.6 486.9L702.2 484.4L701.8 481.9L701.4 479.3L700.9 476.8L700.4 474.3L699.8 471.8L699.3 469.3L698.7 466.9L698.0 464.5L697.4 462.1L696.8 459.8L696.0 456.8L695.1 453.9L694.3 451.0L693.4 448.2L692.5 445.6L691.6 443.0L690.8 440.7L689.8 437.8L688.9 435.3L688.0 433.1L686.9 430.8L685.7 428.6L684.4 426.3L682.9 424.1L681.2 421.9L679.5 419.7L677.6 417.5L676.0 415.5L674.2 413.6L672.4 411.7L670.5 409.8L668.5 407.8L666.6 405.9L664.6 404.0L662.7 402.1L660.6 400.2L658.6 398.3L656.6 396.4L654.6 394.4L652.9 392.6L651.1 390.8L649.3 388.9L647.6 387.0L645.9 385.1L644.2 383.3L642.7 381.4L641.1 379.4L639.6 377.4L638.1 375.4L636.7 373.3L635.2 371.2L633.6 368.9L632.0 366.9L630.4 364.9L628.8 362.9L627.1 360.7L625.4 358.5L623.7 356.0L621.9 353.4L620.7 351.4L619.3 349.2L618.0 346.9L616.6 344.6L615.2 342.1L613.8 339.7L612.5 337.2L611.2 334.7L610.0 332.3L608.9 329.9L607.7 327.3L606.6 324.7L605.6 322.1L604.6 319.6L603.7 317.0L602.8 314.4L602.0 311.9L601.3 309.3L600.7 306.7L600.1 304.2L599.7 301.6L599.3 299.0L599.0 296.4L598.8 293.8L598.6 291.3L598.4 288.7L598.3 286.1L598.2 283.5L598.2 280.9L598.1 278.3L598.2 275.6L598.2 273.0L598.3 270.4L598.5 267.8L598.6 265.2L598.8 262.6L599.0 260.1L599.3 257.1L599.6 254.0L600.0 250.8L600.4 247.7L600.8 244.7L601.2 242.0L601.5 239.8L601.7 238.1A0.7 0.7 0 0 0 600.3 237.9ZM627.5 619.0L626.0 618.3L623.8 617.2L621.3 616.0L618.8 614.6L616.6 613.2L614.6 611.7L612.7 610.1L610.9 608.4L609.1 606.5L607.4 604.4L606.0 602.6L604.7 600.5L603.3 598.3L602.1 596.1L600.9 593.8L599.8 591.6L598.6 589.1L597.6 586.5L596.7 583.9L595.8 581.3L595.0 578.8L594.3 576.2L593.6 573.8L593.0 571.4L592.4 568.7L591.8 565.8L591.4 563.5L590.9 561.1L590.4 558.5L590.0 555.9L589.5 553.2L589.2 550.6L588.8 547.9L588.6 545.3L588.4 542.9L588.2 540.4L588.1 537.9L588.0 535.2L587.9 532.2L587.8 529.0L587.8 526.7L587.8 524.3L587.8 521.7L587.8 519.1L587.9 516.3L587.9 513.6L588.0 510.8L588.0 508.0L588.1 505.3L588.2 502.6L588.3 500.0L588.5 497.3L588.7 494.6L588.8 491.9L589.0 489.2L589.3 486.6L589.5 484.0L589.8 481.4L590.1 478.9L590.4 476.5L590.8 474.2L591.4 471.3L592.0 468.4L592.7 465.7L593.5 463.0L594.3 460.4L595.1 457.9L595.9 455.6L596.8 453.3L597.9 450.6L599.1 448.1L600.3 445.8L601.6 443.6L603.0 441.6L604.7 439.5L606.5 437.5L608.5 435.5L610.7 433.6L612.9 431.8L615.2 430.2L617.4 428.7L619.7 427.5L621.9 426.3L624.2 425.4L626.6 424.6L628.9 423.9L631.2 423.3L633.9 422.8L636.6 422.6L639.3 422.5L642.1 422.6L644.9 422.8L647.3 423.2L649.9 423.7L652.5 424.3L655.0 425.0L657.4 425.8L659.6 426.8L662.1 428.0L664.4 429.5L666.5 431.1L668.5 432.8L670.4 434.6L672.1 436.5L673.7 438.5L675.1 440.6L676.5 442.9L677.7 445.4L678.7 447.6L679.7 450.0L680.5 452.5L681.3 455.0L682.0 457.6L682.7 460.2L683.2 462.8L683.7 465.4L684.0 468.0L684.3 470.7L684.5 473.4L684.7 476.0L684.7 478.7L684.7 481.4L684.6 484.1L684.4 486.8L684.1 489.4L683.7 491.8L683.1 494.6L682.3 497.2L681.4 499.6L680.4 502.1L679.2 504.6L678.2 506.8L677.0 509.0L675.7 511.1L674.4 513.3L672.9 515.4L671.3 517.5L669.6 519.5L667.8 521.5L665.9 523.4L663.9 525.4L661.7 527.4L659.4 529.4L657.6 530.9L655.7 532.4L653.7 534.0L651.6 535.6L649.5 537.2L647.4 538.8L645.4 540.3L643.5 541.8L641.3 543.5L639.2 545.2L637.0 546.8L634.9 548.4L633.0 550.1L631.1 551.7L629.4 553.4L627.3 555.8L625.4 558.2L623.8 560.7L622.4 563.1L621.2 565.7L620.3 568.3L619.5 570.9L619.0 573.6L618.7 576.3L618.6 579.0L618.7 581.7L619.0 584.5L619.5 587.3L620.3 589.9L621.2 592.4L622.8 595.1L624.7 597.6L627.0 599.8L629.6 601.7L631.9 603.0L634.6 604.1L637.4 605.0L640.3 605.6L643.0 605.9L645.7 605.6L648.4 605.0L651.0 604.1L653.4 603.0L655.5 601.7L657.8 599.7L659.6 597.4L661.1 594.8L662.3 592.3L663.1 589.7L663.5 587.0L663.6 584.4L663.3 581.8L662.3 578.7L660.7 575.8L658.5 573.4L655.7 571.6L652.4 570.3L649.1 569.7L645.8 569.8L642.5 570.6L639.6 571.9L637.2 573.8L635.2 576.1L633.8 578.7L633.1 581.5L632.9 584.5L633.3 587.2L635.0 590.6L637.6 593.1L640.8 594.2L644.1 594.1L647.1 592.9L649.5 590.9L650.7 588.2L651.1 586.2A0.7 0.7 0 0 0 649.9 585.8L649.4 587.9L648.5 590.1L646.4 591.8L643.9 592.9L641.0 592.9L638.4 591.9L636.1 589.8L634.7 586.8L634.4 584.4L634.5 581.8L635.2 579.3L636.4 577.0L638.2 574.8L640.4 573.1L643.0 572.0L646.0 571.4L648.9 571.3L652.0 571.8L655.0 573.0L657.5 574.6L659.4 576.7L660.8 579.3L661.7 582.2L661.9 584.4L661.9 586.9L661.4 589.3L660.7 591.7L659.6 594.0L658.2 596.4L656.5 598.5L654.5 600.3L652.6 601.5L650.3 602.6L647.9 603.4L645.4 604.0L643.0 604.1L640.5 604.0L637.9 603.4L635.2 602.5L632.7 601.5L630.4 600.3L628.1 598.5L626.0 596.5L624.2 594.2L622.8 591.6L621.9 589.4L621.2 586.9L620.7 584.3L620.4 581.6L620.4 579.0L620.4 576.4L620.7 573.9L621.2 571.3L621.9 568.8L622.8 566.3L623.9 563.9L625.2 561.5L626.8 559.2L628.6 556.9L630.6 554.6L632.2 553.0L634.1 551.4L636.0 549.8L638.1 548.1L640.2 546.5L642.4 544.9L644.5 543.2L646.5 541.7L648.5 540.1L650.5 538.5L652.6 537.0L654.7 535.4L656.8 533.8L658.7 532.2L660.6 530.6L662.8 528.6L665.0 526.6L667.1 524.6L669.1 522.6L670.9 520.6L672.7 518.5L674.3 516.4L675.8 514.2L677.2 512.0L678.5 509.8L679.7 507.6L680.8 505.4L682.0 502.8L683.0 500.3L683.9 497.7L684.7 495.0L685.3 492.2L685.7 489.6L686.0 487.0L686.3 484.2L686.4 481.5L686.4 478.7L686.3 476.0L686.2 473.3L686.0 470.6L685.7 467.8L685.3 465.1L684.9 462.5L684.3 459.8L683.7 457.2L683.0 454.5L682.2 451.9L681.3 449.4L680.3 446.9L679.3 444.6L678.0 442.1L676.6 439.7L675.1 437.5L673.4 435.4L671.6 433.4L669.7 431.5L667.6 429.7L665.3 428.1L662.9 426.6L660.4 425.2L658.0 424.3L655.5 423.4L652.9 422.6L650.3 422.0L647.6 421.5L645.1 421.2L642.2 420.9L639.3 420.8L636.5 420.9L633.7 421.2L630.8 421.7L628.4 422.2L626.0 423.0L623.6 423.8L621.2 424.8L618.9 426.0L616.6 427.3L614.2 428.8L611.9 430.5L609.6 432.3L607.3 434.3L605.3 436.3L603.3 438.5L601.7 440.6L600.2 442.7L598.8 445.0L597.6 447.3L596.4 449.9L595.2 452.7L594.3 455.0L593.5 457.4L592.6 459.9L591.8 462.5L591.1 465.2L590.4 468.0L589.7 470.9L589.2 473.8L588.8 476.3L588.4 478.7L588.1 481.2L587.8 483.8L587.6 486.4L587.3 489.1L587.1 491.8L587.0 494.5L586.8 497.2L586.7 500.0L586.5 502.5L586.4 505.2L586.3 507.9L586.3 510.7L586.2 513.5L586.2 516.3L586.1 519.1L586.1 521.7L586.1 524.3L586.1 526.7L586.2 529.0L586.2 532.3L586.3 535.2L586.4 537.9L586.5 540.5L586.7 543.0L586.9 545.5L587.2 548.1L587.5 550.8L587.9 553.5L588.3 556.2L588.8 558.8L589.2 561.4L589.7 563.9L590.2 566.2L590.8 569.1L591.4 571.8L592.0 574.3L592.6 576.7L593.4 579.2L594.2 581.9L595.1 584.5L596.0 587.1L597.0 589.7L598.2 592.4L599.3 594.6L600.5 596.9L601.8 599.2L603.2 601.4L604.6 603.6L606.0 605.6L607.7 607.7L609.6 609.7L611.4 611.5L613.4 613.2L615.4 614.8L617.7 616.4L620.3 617.8L622.8 619.1L625.0 620.2L626.5 621.0A1.1 1.1 0 0 0 627.5 619.0ZM598.6 262.1L598.8 260.4L599.1 258.1L599.5 255.3L599.8 252.3L600.3 249.2L600.7 246.0L601.2 242.9L601.7 240.1L602.2 237.6L602.7 235.0L603.3 232.6L603.9 230.1L604.6 227.7L605.2 225.2L606.0 222.8L606.8 220.2L607.6 217.6L608.5 215.0L609.4 212.3L610.4 209.6L611.5 206.9L612.5 204.3L613.6 201.8L614.8 199.4L616.0 197.1L617.2 194.8L618.5 192.6L619.8 190.5L621.2 188.4L622.7 186.4L624.2 184.5L625.7 182.6L627.6 180.6L629.5 178.6L631.5 176.7L633.6 174.8L635.8 173.1L638.1 171.4L640.5 169.8L642.8 168.5L645.1 167.2L647.6 166.0L650.1 164.8L652.7 163.8L655.2 162.7L657.8 161.8L660.3 161.0L662.8 160.3L665.2 159.7L667.7 159.1L670.1 158.7L672.6 158.3L675.0 158.0L677.5 157.8L680.1 157.6L682.6 157.5L685.2 157.4L687.8 157.4L690.5 157.5L693.1 157.6L695.7 157.9L698.2 158.2L700.8 158.7L703.3 159.3L705.8 160.0L708.3 160.7L710.7 161.6L713.2 162.6L715.6 163.7L718.0 164.9L720.4 166.1L722.4 167.3L724.5 168.7L726.6 170.1L728.7 171.6L730.7 173.1L732.7 174.7L734.6 176.3L736.4 177.9L738.1 179.5L740.1 181.4L742.0 183.4L743.8 185.5L745.5 187.5L747.0 189.6L748.6 191.7L750.0 193.7L751.6 196.0L753.1 198.3L754.4 200.5L755.7 202.8L756.9 205.1L758.0 207.5L759.1 209.8L760.1 212.2L761.1 214.6L762.0 217.1L762.8 219.6L763.5 222.2L764.1 224.6L764.6 227.0L765.0 229.6L765.4 232.1L765.7 234.7L765.9 237.4L766.1 240.0L766.1 242.4L766.0 244.9L765.9 247.5L765.7 250.1L765.4 252.7L765.2 255.2L764.9 257.6L764.6 259.9L764.1 262.6L763.7 265.2L763.2 267.7L762.6 270.0L761.9 272.3L761.1 274.7L760.2 277.1L759.1 279.5L758.0 281.8L756.8 284.1L755.5 286.4L754.2 288.5L752.6 290.9L751.0 293.2L749.3 295.3L747.4 297.4L745.4 299.3L743.5 300.8L741.5 302.3L739.3 303.7L737.1 305.0L734.9 306.2L732.7 307.1L730.0 308.0L727.3 308.8L724.5 309.3L721.8 309.5L719.0 309.6L716.2 309.3L713.4 308.9L710.5 308.2L707.9 307.3L705.5 306.2L703.3 304.7L701.3 302.9L699.4 300.9L697.8 298.7L696.3 296.5L695.1 294.2L694.1 291.8L693.3 289.3L692.6 286.7L692.1 283.9L691.9 281.4L691.9 278.8L692.0 276.0L692.1 273.2L692.3 270.5L692.4 268.0L692.6 264.7L692.8 261.7L693.1 258.9L693.4 256.1L693.8 253.3L694.4 250.4L694.9 247.9L695.3 246.2A0.8 0.8 0 0 0 693.7 245.8L693.3 247.6L692.7 250.1L692.1 253.0L691.6 255.9L691.3 258.7L691.0 261.5L690.7 264.6L690.6 268.0L690.4 270.4L690.2 273.1L690.1 275.9L690.0 278.7L690.0 281.5L690.3 284.1L690.8 287.0L691.4 289.8L692.3 292.5L693.4 295.0L694.7 297.5L696.2 299.8L698.0 302.1L700.0 304.3L702.1 306.2L704.5 307.8L707.2 309.1L710.0 310.1L713.0 310.8L716.0 311.2L719.0 311.4L721.9 311.4L724.8 311.1L727.7 310.6L730.5 309.9L733.3 308.9L735.7 307.9L738.0 306.7L740.3 305.3L742.5 303.9L744.7 302.3L746.6 300.7L748.8 298.7L750.7 296.6L752.5 294.3L754.2 292.0L755.8 289.5L757.1 287.3L758.4 285.0L759.7 282.7L760.9 280.2L761.9 277.8L762.9 275.3L763.7 272.9L764.4 270.5L765.0 268.1L765.5 265.6L766.0 263.0L766.4 260.1L766.8 257.8L767.1 255.4L767.3 252.9L767.6 250.3L767.8 247.6L767.9 245.0L768.0 242.4L767.9 240.0L767.8 237.2L767.6 234.5L767.3 231.9L767.0 229.2L766.5 226.7L766.0 224.2L765.5 221.8L764.8 219.0L764.0 216.4L763.1 213.9L762.1 211.4L761.1 209.0L760.0 206.5L758.9 204.1L757.7 201.7L756.4 199.4L755.1 197.1L753.6 194.7L752.0 192.3L750.5 190.2L749.0 188.1L747.4 186.0L745.7 183.9L743.9 181.7L742.0 179.6L739.9 177.5L738.1 176.0L736.3 174.3L734.3 172.7L732.3 171.1L730.2 169.5L728.1 168.0L726.0 166.5L723.8 165.1L721.6 163.9L719.2 162.6L716.7 161.4L714.2 160.3L711.6 159.3L709.1 158.4L706.5 157.6L703.9 156.9L701.2 156.3L698.6 155.9L695.9 155.5L693.2 155.3L690.5 155.2L687.9 155.1L685.2 155.2L682.5 155.3L679.9 155.4L677.4 155.6L674.8 155.8L672.3 156.2L669.8 156.6L667.2 157.0L664.7 157.6L662.2 158.2L659.7 159.0L657.1 159.8L654.5 160.8L651.9 161.8L649.3 163.0L646.7 164.2L644.2 165.4L641.8 166.8L639.5 168.2L637.0 169.8L634.6 171.5L632.4 173.3L630.2 175.2L628.2 177.2L626.2 179.2L624.3 181.4L622.7 183.3L621.1 185.3L619.7 187.4L618.3 189.5L616.9 191.7L615.6 193.9L614.4 196.2L613.2 198.6L612.0 201.1L610.9 203.7L609.8 206.3L608.8 209.0L607.9 211.7L606.9 214.5L606.1 217.1L605.2 219.8L604.5 222.3L603.7 224.8L603.1 227.3L602.5 229.8L601.9 232.2L601.3 234.7L600.8 237.3L600.3 239.9L599.8 242.7L599.4 245.8L598.9 249.0L598.5 252.2L598.2 255.2L597.9 257.9L597.6 260.2L597.4 261.9A0.6 0.6 0 0 0 598.6 262.1ZM697.5 257.5L699.3 255.8L701.8 253.5L704.4 252.0L707.0 251.4L710.0 251.4L713.2 251.8L715.8 252.4L718.6 253.3L721.3 254.4L723.8 255.7L726.0 257.3L728.0 259.1L729.9 261.0L731.3 262.8L732.6 265.2L733.3 267.6L733.6 270.0L733.4 272.7L732.8 275.4L731.8 277.9L730.5 280.0L728.7 282.0L726.8 283.5L723.9 284.9L721.0 285.4L718.5 284.7L716.2 283.2L714.7 281.2L714.0 278.9L714.7 276.9L715.8 274.9A0.9 0.9 0 0 0 714.2 274.1L713.0 276.0L712.0 279.1L712.9 282.1L714.8 284.8L717.5 286.7L721.0 287.6L724.6 287.1L728.2 285.5L730.4 283.8L732.5 281.6L734.2 279.1L735.4 276.2L736.1 273.1L736.4 270.0L736.1 267.0L735.2 264.1L733.7 261.2L732.1 259.1L730.0 256.9L727.7 255.0L725.2 253.3L722.5 251.9L719.5 250.7L716.5 249.8L713.6 249.2L710.1 248.9L706.7 249.1L703.6 250.0L700.6 252.1L698.1 254.7L696.5 256.5A0.7 0.7 0 0 0 697.5 257.5ZM752.9 337.3L750.9 337.5L747.9 337.7L744.6 338.2L741.6 339.1L739.1 340.4L736.7 342.1L734.5 344.1L732.6 346.4L731.4 348.6L730.3 351.2L729.4 353.8L728.8 356.5L728.5 358.9L728.5 361.9L729.1 364.7L730.0 367.3L731.2 369.5L733.4 371.9L736.2 373.6L738.8 374.5L742.5 374.0L745.2 372.1L746.5 368.8L746.9 366.2A0.9 0.9 0 0 0 745.1 365.8L744.7 368.5L743.8 370.9L741.7 372.2L739.2 372.5L737.0 371.8L734.7 370.4L732.8 368.5L731.8 366.5L731.1 364.2L730.6 361.7L730.5 359.1L730.8 356.8L731.4 354.4L732.2 351.9L733.3 349.6L734.4 347.6L736.0 345.5L737.9 343.7L740.1 342.1L742.4 340.9L745.0 340.0L748.1 339.4L751.0 339.0L753.1 338.7A0.7 0.7 0 0 0 752.9 337.3ZM622.4 200.3L623.5 199.0L624.9 197.1L626.6 194.9L628.5 192.6L630.5 190.5L632.2 188.8L634.1 187.1L636.0 185.4L638.1 183.7L640.2 182.1L642.4 180.7L644.9 179.4L647.5 178.1L650.3 176.9L653.0 175.9L655.7 175.0L658.2 174.4L661.0 174.0L663.7 173.8L666.3 174.0L668.6 174.3L670.7 174.9L673.8 176.3L676.3 178.3L677.7 180.3L677.2 183.6L675.8 186.8A0.8 0.8 0 0 0 677.2 187.2L678.7 184.2L679.3 179.7L677.5 177.1L674.7 174.8L671.3 173.1L669.0 172.6L666.4 172.2L663.7 172.0L660.8 172.2L657.8 172.6L655.2 173.3L652.4 174.2L649.6 175.3L646.8 176.5L644.1 177.9L641.6 179.3L639.3 180.8L637.1 182.4L635.0 184.2L633.0 186.0L631.2 187.8L629.5 189.5L627.5 191.7L625.6 194.1L624.0 196.4L622.6 198.3L621.6 199.7A0.5 0.5 0 0 0 622.4 200.3ZM741.7 172.5L743.3 173.5L745.6 175.0L748.3 176.6L751.1 178.0L753.8 179.0L756.9 179.3L759.9 179.2L762.8 178.7L765.3 177.8L768.3 176.0L770.6 173.7L772.2 171.4L772.6 167.8L772.1 165.5A0.6 0.6 0 0 0 770.9 165.5L771.2 168.0L770.8 170.6L769.4 172.6L767.2 174.7L764.7 176.2L762.4 176.9L759.7 177.3L757.0 177.4L754.2 177.0L751.8 176.3L749.1 175.1L746.4 173.6L744.0 172.3L742.3 171.5A0.6 0.6 0 0 0 741.7 172.5ZM749.8 179.6L751.8 180.4L754.8 181.7L758.0 183.0L760.6 184.3L763.2 185.7L765.3 187.2L766.9 188.6L768.6 190.8L769.6 192.7A0.5 0.5 0 0 0 770.4 192.3L769.7 190.3L768.1 187.4L766.3 185.8L764.1 184.3L761.4 182.7L758.6 181.5L755.4 180.3L752.3 179.2L750.2 178.4A0.6 0.6 0 0 0 749.8 179.6ZM664.3 408.4L662.6 407.6L660.3 406.4L657.5 405.0L654.4 403.7L651.3 402.4L648.2 401.6L645.6 401.1L643.0 400.8L640.2 400.7L637.5 400.6L634.9 400.7L632.3 400.8L629.9 401.0L626.7 401.4L623.6 402.0L620.7 402.7L618.0 403.6L615.6 404.6L612.9 406.0L610.5 407.6L608.6 409.5L607.1 411.5L605.9 414.6L605.5 417.9L605.9 420.8L608.4 424.5L611.8 426.5L615.6 425.0L617.9 423.2A0.8 0.8 0 0 0 617.1 421.8L614.5 423.6L612.2 424.5L609.8 423.0L608.1 420.2L607.7 417.8L608.0 415.0L608.9 412.5L610.1 410.9L611.8 409.2L613.9 407.7L616.4 406.4L618.7 405.5L621.3 404.7L624.0 403.9L627.0 403.4L630.1 403.0L632.4 402.8L634.9 402.7L637.5 402.6L640.2 402.6L642.8 402.8L645.4 403.0L647.8 403.4L650.7 404.2L653.7 405.3L656.8 406.5L659.6 407.8L662.0 408.9L663.7 409.6A0.7 0.7 0 0 0 664.3 408.4ZM669.5 429.9L668.9 432.3L668.0 435.7L666.8 438.6L665.2 441.0L663.3 443.2L661.4 444.7L658.9 445.6L656.8 445.5L655.7 444.4L654.7 442.5A0.9 0.9 0 0 0 653.3 443.5L654.1 445.3L656.2 447.5L659.2 447.6L662.6 446.3L664.6 444.5L666.6 442.1L668.2 439.4L669.3 436.0L670.0 432.6L670.5 430.1A0.5 0.5 0 0 0 669.5 429.9ZM686.0 464.8L685.2 467.2L684.1 470.4L682.8 473.1L680.2 475.7L677.7 477.1L676.8 476.7L675.4 475.3A0.8 0.8 0 0 0 674.6 476.7L675.5 477.9L678.3 478.9L681.3 477.1L684.2 473.9L685.5 470.9L686.4 467.5L687.0 465.2A0.5 0.5 0 0 0 686.0 464.8ZM589.5 497.2L590.2 495.1L591.1 492.2L592.3 489.0L593.7 486.5L595.4 484.3L597.3 482.3L599.4 480.6L601.5 479.5L604.4 478.7L607.6 478.6L610.0 479.2L611.7 480.4L613.2 482.4L613.8 484.2L613.0 486.2L611.2 488.5A0.9 0.9 0 0 0 612.8 489.5L614.6 487.5L616.2 483.8L615.3 481.3L613.6 478.7L611.0 476.8L607.7 476.2L604.1 476.4L600.5 477.5L598.2 479.0L596.0 480.9L594.0 483.1L592.3 485.5L590.9 488.5L589.9 491.8L589.1 494.8L588.5 496.8A0.5 0.5 0 0 0 589.5 497.2ZM596.4 580.0L596.5 578.1L596.5 575.3L596.6 572.1L596.8 568.8L597.1 565.7L597.6 563.2L598.7 560.1L600.1 557.4L601.8 555.2L603.4 553.5L605.9 552.5L608.9 552.3L611.1 552.2A0.7 0.7 0 0 0 610.9 550.8L608.8 550.9L605.7 551.1L602.6 552.5L600.7 554.3L599.0 556.7L597.5 559.6L596.4 562.8L596.0 565.6L595.7 568.7L595.6 572.1L595.6 575.3L595.6 578.1L595.6 580.0A0.4 0.4 0 0 0 596.4 580.0ZM680.8 512.3L679.2 513.0L677.0 514.0L674.6 515.1L671.8 516.3L669.1 517.4L666.4 518.2L663.9 518.6L661.1 518.6L658.3 518.4L655.4 517.8L652.6 517.1L649.9 516.1L647.4 515.1L645.1 513.9L642.9 512.5L640.9 510.9L639.0 509.2L637.3 507.3L635.8 505.4L634.3 503.0L633.0 500.3L632.0 497.4L631.3 494.6L631.0 492.0L631.1 489.3L631.6 486.6L632.4 484.0L633.5 481.6L634.8 479.6L636.4 478.0L638.4 476.6L640.6 475.4L642.9 474.5L645.2 474.0L648.0 473.8L651.1 474.0L654.0 474.8L656.5 475.9L658.5 477.5L660.3 479.7L661.7 482.0L662.5 484.2L662.4 487.1L661.4 490.1L660.1 492.3L657.7 493.8L655.2 494.0L654.3 492.7L653.3 490.5A0.9 0.9 0 0 0 651.7 491.5L652.5 493.5L654.8 496.0L658.3 495.8L661.9 493.7L663.4 491.0L664.5 487.5L664.5 483.8L663.6 481.1L662.0 478.5L659.9 476.0L657.5 474.1L654.7 472.9L651.4 472.1L648.1 471.8L644.8 472.0L642.3 472.6L639.8 473.6L637.3 474.9L635.1 476.5L633.2 478.4L631.7 480.7L630.5 483.3L629.6 486.2L629.1 489.1L629.0 492.0L629.3 495.0L630.1 498.0L631.1 501.0L632.5 503.9L634.2 506.6L635.8 508.6L637.6 510.6L639.6 512.4L641.8 514.1L644.1 515.6L646.6 516.9L649.2 518.0L652.0 519.0L655.0 519.7L658.0 520.3L661.1 520.5L664.1 520.4L666.8 519.9L669.6 519.0L672.5 517.8L675.2 516.6L677.7 515.4L679.8 514.3L681.2 513.7A0.7 0.7 0 0 0 680.8 512.3ZM653.3 513.0L651.4 511.7L648.8 509.8L646.7 507.9L644.5 504.7L643.5 501.9L644.0 500.1L645.3 498.4A0.9 0.9 0 0 0 643.7 497.6L642.5 499.1L641.5 502.1L642.9 505.6L645.3 509.1L647.9 511.1L650.7 512.9L652.7 514.0A0.6 0.6 0 0 0 653.3 513.0Z"/>
</g>
</g>
<path d="M754.6 588.0L754.6 593.5" stroke="#1c1c0a" stroke-width="7.8" fill="none"/>
<path d="M726.0 616.0L726.0 622.0" stroke="#1c1c0a" stroke-width="6.8" fill="none"/>
<path d="M722.0 619.5L728.5 619.5" stroke="#1c1c0a" stroke-width="6.8" fill="none"/>
<path d="M754.6 586.0L754.6 592.6" stroke="#5a5a5a" stroke-width="6.0" fill="none"/>
<path d="M754.6 586.0L754.6 592.6" stroke="#7c7c7c" stroke-width="5.0" fill="none"/>
<path d="M754.6 586.0L754.6 592.6" stroke="#a0a0a0" stroke-width="4.1" fill="none"/>
<path d="M754.6 586.0L754.6 592.6" stroke="#c0c0c0" stroke-width="3.1" fill="none"/>
<path d="M754.6 586.0L754.6 592.6" stroke="#dadada" stroke-width="2.2" fill="none"/>
<path d="M754.6 586.0L754.6 592.6" stroke="#ececec" stroke-width="1.2" fill="none"/>
<path d="M726.0 614.0L726.0 621.1" stroke="#5a5a5a" stroke-width="5.0" fill="none"/>
<path d="M726.0 614.0L726.0 621.1" stroke="#7c7c7c" stroke-width="4.2" fill="none"/>
<path d="M726.0 614.0L726.0 621.1" stroke="#a0a0a0" stroke-width="3.4" fill="none"/>
<path d="M726.0 614.0L726.0 621.1" stroke="#c0c0c0" stroke-width="2.6" fill="none"/>
<path d="M726.0 614.0L726.0 621.1" stroke="#dadada" stroke-width="1.8" fill="none"/>
<path d="M726.0 614.0L726.0 621.1" stroke="#ececec" stroke-width="1.0" fill="none"/>
<path d="M722.0 619.5L727.6 619.5" stroke="#5a5a5a" stroke-width="5.0" fill="none"/>
<path d="M722.0 619.5L727.6 619.5" stroke="#7c7c7c" stroke-width="4.2" fill="none"/>
<path d="M722.0 619.5L727.6 619.5" stroke="#a0a0a0" stroke-width="3.4" fill="none"/>
<path d="M722.0 619.5L727.6 619.5" stroke="#c0c0c0" stroke-width="2.6" fill="none"/>
<path d="M722.0 619.5L727.6 619.5" stroke="#dadada" stroke-width="1.8" fill="none"/>
<path d="M722.0 619.5L727.6 619.5" stroke="#ececec" stroke-width="1.0" fill="none"/>
<rect x="625.5" y="613" width="32" height="14" fill="#fff" stroke="#2a2a18" stroke-width="1.8"/>
<circle cx="658.4" cy="145.4" r="6.6" fill="url(#gBall)" stroke="#1a1a0c" stroke-width="1.1"/>
<circle cx="645.3" cy="151.9" r="4.6" fill="url(#gBall)" stroke="#1a1a0c" stroke-width="1.1"/>
<circle cx="635.0" cy="159.7" r="2.6" fill="url(#gBall)" stroke="#1a1a0c" stroke-width="1.1"/>
<circle cx="772.5" cy="204.0" r="6.1" fill="url(#gBall)" stroke="#1a1a0c" stroke-width="1.1"/>
<circle cx="778.4" cy="221.3" r="4.6" fill="url(#gBall)" stroke="#1a1a0c" stroke-width="1.1"/>
<circle cx="779.5" cy="237.7" r="3.6" fill="url(#gBall)" stroke="#1a1a0c" stroke-width="1.1"/>
<circle cx="778.0" cy="252.0" r="2.6" fill="url(#gBall)" stroke="#1a1a0c" stroke-width="1.1"/>
<circle cx="627.9" cy="238.3" r="7.2" fill="url(#gBall)" stroke="#1a1a0c" stroke-width="1.1"/>
<circle cx="599.0" cy="347.0" r="6.6" fill="url(#gBall)" stroke="#1a1a0c" stroke-width="1.1"/>
<circle cx="608.0" cy="358.0" r="4.3" fill="url(#gBall)" stroke="#1a1a0c" stroke-width="1.1"/>
<circle cx="617.0" cy="366.5" r="2.6" fill="url(#gBall)" stroke="#1a1a0c" stroke-width="1.1"/>
<circle cx="640.2" cy="441.8" r="3.0" fill="url(#gBall)" stroke="#1a1a0c" stroke-width="1.1"/>
<circle cx="626.7" cy="448.5" r="4.2" fill="url(#gBall)" stroke="#1a1a0c" stroke-width="1.1"/>
<circle cx="612.4" cy="462.5" r="6.6" fill="url(#gBall)" stroke="#1a1a0c" stroke-width="1.1"/>
<circle cx="695.0" cy="492.4" r="2.2" fill="url(#gBall)" stroke="#1a1a0c" stroke-width="1.1"/>
<circle cx="693.3" cy="505.3" r="3.9" fill="url(#gBall)" stroke="#1a1a0c" stroke-width="1.1"/>
<circle cx="689.6" cy="519.6" r="5.9" fill="url(#gBall)" stroke="#1a1a0c" stroke-width="1.1"/>
<circle cx="681.5" cy="536.6" r="9.2" fill="url(#gBall)" stroke="#1a1a0c" stroke-width="1.1"/>
<circle cx="589.0" cy="598.3" r="2.3" fill="url(#gBall)" stroke="#1a1a0c" stroke-width="1.1"/>
<circle cx="593.8" cy="611.8" r="3.4" fill="url(#gBall)" stroke="#1a1a0c" stroke-width="1.1"/>
<circle cx="602.3" cy="625.4" r="4.9" fill="url(#gBall)" stroke="#1a1a0c" stroke-width="1.1"/>
<circle cx="615.0" cy="639.0" r="6.3" fill="url(#gBall)" stroke="#1a1a0c" stroke-width="1.1"/>
<defs><clipPath id="w8"><path d="M0 0L45 -18.64L45 18.64Z"/></clipPath><clipPath id="w10"><path d="M0 0L45 -14.62L45 14.62Z"/></clipPath></defs>
<g transform="translate(651.4 300.1)"><path transform="rotate(-67.5)" d="M5.5 0 C10.8 -9.2 14.1 -10.2 23.3 -10.2 A10.2 10.2 0 0 1 23.3 10.2 C14.1 10.2 10.8 9.2 5.5 0Z" fill="#1c1c10" stroke="#1c1c10" stroke-width="1.6"/><path transform="rotate(-22.5)" d="M5.5 0 C10.8 -9.2 14.1 -10.2 23.3 -10.2 A10.2 10.2 0 0 1 23.3 10.2 C14.1 10.2 10.8 9.2 5.5 0Z" fill="#1c1c10" stroke="#1c1c10" stroke-width="1.6"/><path transform="rotate(22.5)" d="M5.5 0 C10.8 -9.2 14.1 -10.2 23.3 -10.2 A10.2 10.2 0 0 1 23.3 10.2 C14.1 10.2 10.8 9.2 5.5 0Z" fill="#1c1c10" stroke="#1c1c10" stroke-width="1.6"/><path transform="rotate(67.5)" d="M5.5 0 C10.8 -9.2 14.1 -10.2 23.3 -10.2 A10.2 10.2 0 0 1 23.3 10.2 C14.1 10.2 10.8 9.2 5.5 0Z" fill="#1c1c10" stroke="#1c1c10" stroke-width="1.6"/><path transform="rotate(112.5)" d="M5.5 0 C10.8 -9.2 14.1 -10.2 23.3 -10.2 A10.2 10.2 0 0 1 23.3 10.2 C14.1 10.2 10.8 9.2 5.5 0Z" fill="#1c1c10" stroke="#1c1c10" stroke-width="1.6"/><path transform="rotate(157.5)" d="M5.5 0 C10.8 -9.2 14.1 -10.2 23.3 -10.2 A10.2 10.2 0 0 1 23.3 10.2 C14.1 10.2 10.8 9.2 5.5 0Z" fill="#1c1c10" stroke="#1c1c10" stroke-width="1.6"/><path transform="rotate(202.5)" d="M5.5 0 C10.8 -9.2 14.1 -10.2 23.3 -10.2 A10.2 10.2 0 0 1 23.3 10.2 C14.1 10.2 10.8 9.2 5.5 0Z" fill="#1c1c10" stroke="#1c1c10" stroke-width="1.6"/><path transform="rotate(247.5)" d="M5.5 0 C10.8 -9.2 14.1 -10.2 23.3 -10.2 A10.2 10.2 0 0 1 23.3 10.2 C14.1 10.2 10.8 9.2 5.5 0Z" fill="#1c1c10" stroke="#1c1c10" stroke-width="1.6"/><path transform="rotate(-67.5)" clip-path="url(#w8)" d="M5.5 0 C10.8 -9.2 14.1 -10.2 23.3 -10.2 A10.2 10.2 0 0 1 23.3 10.2 C14.1 10.2 10.8 9.2 5.5 0Z" fill="url(#gPet)"/><path transform="rotate(-22.5)" clip-path="url(#w8)" d="M5.5 0 C10.8 -9.2 14.1 -10.2 23.3 -10.2 A10.2 10.2 0 0 1 23.3 10.2 C14.1 10.2 10.8 9.2 5.5 0Z" fill="url(#gPet)"/><path transform="rotate(22.5)" clip-path="url(#w8)" d="M5.5 0 C10.8 -9.2 14.1 -10.2 23.3 -10.2 A10.2 10.2 0 0 1 23.3 10.2 C14.1 10.2 10.8 9.2 5.5 0Z" fill="url(#gPet)"/><path transform="rotate(67.5)" clip-path="url(#w8)" d="M5.5 0 C10.8 -9.2 14.1 -10.2 23.3 -10.2 A10.2 10.2 0 0 1 23.3 10.2 C14.1 10.2 10.8 9.2 5.5 0Z" fill="url(#gPet)"/><path transform="rotate(112.5)" clip-path="url(#w8)" d="M5.5 0 C10.8 -9.2 14.1 -10.2 23.3 -10.2 A10.2 10.2 0 0 1 23.3 10.2 C14.1 10.2 10.8 9.2 5.5 0Z" fill="url(#gPet)"/><path transform="rotate(157.5)" clip-path="url(#w8)" d="M5.5 0 C10.8 -9.2 14.1 -10.2 23.3 -10.2 A10.2 10.2 0 0 1 23.3 10.2 C14.1 10.2 10.8 9.2 5.5 0Z" fill="url(#gPet)"/><path transform="rotate(202.5)" clip-path="url(#w8)" d="M5.5 0 C10.8 -9.2 14.1 -10.2 23.3 -10.2 A10.2 10.2 0 0 1 23.3 10.2 C14.1 10.2 10.8 9.2 5.5 0Z" fill="url(#gPet)"/><path transform="rotate(247.5)" clip-path="url(#w8)" d="M5.5 0 C10.8 -9.2 14.1 -10.2 23.3 -10.2 A10.2 10.2 0 0 1 23.3 10.2 C14.1 10.2 10.8 9.2 5.5 0Z" fill="url(#gPet)"/><path transform="rotate(-90.0)" d="M9.9 0H26.5" stroke="#33332a" stroke-width="1"/><path transform="rotate(-45.0)" d="M9.9 0H26.5" stroke="#33332a" stroke-width="1"/><path transform="rotate(0.0)" d="M9.9 0H26.5" stroke="#33332a" stroke-width="1"/><path transform="rotate(45.0)" d="M9.9 0H26.5" stroke="#33332a" stroke-width="1"/><path transform="rotate(90.0)" d="M9.9 0H26.5" stroke="#33332a" stroke-width="1"/><path transform="rotate(135.0)" d="M9.9 0H26.5" stroke="#33332a" stroke-width="1"/><path transform="rotate(180.0)" d="M9.9 0H26.5" stroke="#33332a" stroke-width="1"/><path transform="rotate(225.0)" d="M9.9 0H26.5" stroke="#33332a" stroke-width="1"/><clipPath id="fc6514"><path transform="rotate(-67.5)" d="M5.5 0 C10.8 -9.2 14.1 -10.2 23.3 -10.2 A10.2 10.2 0 0 1 23.3 10.2 C14.1 10.2 10.8 9.2 5.5 0Z"/><path transform="rotate(-22.5)" d="M5.5 0 C10.8 -9.2 14.1 -10.2 23.3 -10.2 A10.2 10.2 0 0 1 23.3 10.2 C14.1 10.2 10.8 9.2 5.5 0Z"/><path transform="rotate(22.5)" d="M5.5 0 C10.8 -9.2 14.1 -10.2 23.3 -10.2 A10.2 10.2 0 0 1 23.3 10.2 C14.1 10.2 10.8 9.2 5.5 0Z"/><path transform="rotate(67.5)" d="M5.5 0 C10.8 -9.2 14.1 -10.2 23.3 -10.2 A10.2 10.2 0 0 1 23.3 10.2 C14.1 10.2 10.8 9.2 5.5 0Z"/><path transform="rotate(112.5)" d="M5.5 0 C10.8 -9.2 14.1 -10.2 23.3 -10.2 A10.2 10.2 0 0 1 23.3 10.2 C14.1 10.2 10.8 9.2 5.5 0Z"/><path transform="rotate(157.5)" d="M5.5 0 C10.8 -9.2 14.1 -10.2 23.3 -10.2 A10.2 10.2 0 0 1 23.3 10.2 C14.1 10.2 10.8 9.2 5.5 0Z"/><path transform="rotate(202.5)" d="M5.5 0 C10.8 -9.2 14.1 -10.2 23.3 -10.2 A10.2 10.2 0 0 1 23.3 10.2 C14.1 10.2 10.8 9.2 5.5 0Z"/><path transform="rotate(247.5)" d="M5.5 0 C10.8 -9.2 14.1 -10.2 23.3 -10.2 A10.2 10.2 0 0 1 23.3 10.2 C14.1 10.2 10.8 9.2 5.5 0Z"/></clipPath><circle r="34.0" fill="url(#gFlo)" clip-path="url(#fc6514)"/><circle r="11.0" fill="#8a8a8a" stroke="#555" stroke-width=".8"/><circle r="8.8" fill="url(#gSph)"/></g>
<g transform="translate(680.0 364.8)"><path transform="rotate(-67.5)" d="M4.5 0 C9.0 -7.7 11.8 -8.5 19.5 -8.5 A8.5 8.5 0 0 1 19.5 8.5 C11.8 8.5 9.0 7.7 4.5 0Z" fill="#1c1c10" stroke="#1c1c10" stroke-width="1.6"/><path transform="rotate(-22.5)" d="M4.5 0 C9.0 -7.7 11.8 -8.5 19.5 -8.5 A8.5 8.5 0 0 1 19.5 8.5 C11.8 8.5 9.0 7.7 4.5 0Z" fill="#1c1c10" stroke="#1c1c10" stroke-width="1.6"/><path transform="rotate(22.5)" d="M4.5 0 C9.0 -7.7 11.8 -8.5 19.5 -8.5 A8.5 8.5 0 0 1 19.5 8.5 C11.8 8.5 9.0 7.7 4.5 0Z" fill="#1c1c10" stroke="#1c1c10" stroke-width="1.6"/><path transform="rotate(67.5)" d="M4.5 0 C9.0 -7.7 11.8 -8.5 19.5 -8.5 A8.5 8.5 0 0 1 19.5 8.5 C11.8 8.5 9.0 7.7 4.5 0Z" fill="#1c1c10" stroke="#1c1c10" stroke-width="1.6"/><path transform="rotate(112.5)" d="M4.5 0 C9.0 -7.7 11.8 -8.5 19.5 -8.5 A8.5 8.5 0 0 1 19.5 8.5 C11.8 8.5 9.0 7.7 4.5 0Z" fill="#1c1c10" stroke="#1c1c10" stroke-width="1.6"/><path transform="rotate(157.5)" d="M4.5 0 C9.0 -7.7 11.8 -8.5 19.5 -8.5 A8.5 8.5 0 0 1 19.5 8.5 C11.8 8.5 9.0 7.7 4.5 0Z" fill="#1c1c10" stroke="#1c1c10" stroke-width="1.6"/><path transform="rotate(202.5)" d="M4.5 0 C9.0 -7.7 11.8 -8.5 19.5 -8.5 A8.5 8.5 0 0 1 19.5 8.5 C11.8 8.5 9.0 7.7 4.5 0Z" fill="#1c1c10" stroke="#1c1c10" stroke-width="1.6"/><path transform="rotate(247.5)" d="M4.5 0 C9.0 -7.7 11.8 -8.5 19.5 -8.5 A8.5 8.5 0 0 1 19.5 8.5 C11.8 8.5 9.0 7.7 4.5 0Z" fill="#1c1c10" stroke="#1c1c10" stroke-width="1.6"/><path transform="rotate(-67.5)" clip-path="url(#w8)" d="M4.5 0 C9.0 -7.7 11.8 -8.5 19.5 -8.5 A8.5 8.5 0 0 1 19.5 8.5 C11.8 8.5 9.0 7.7 4.5 0Z" fill="url(#gPet)"/><path transform="rotate(-22.5)" clip-path="url(#w8)" d="M4.5 0 C9.0 -7.7 11.8 -8.5 19.5 -8.5 A8.5 8.5 0 0 1 19.5 8.5 C11.8 8.5 9.0 7.7 4.5 0Z" fill="url(#gPet)"/><path transform="rotate(22.5)" clip-path="url(#w8)" d="M4.5 0 C9.0 -7.7 11.8 -8.5 19.5 -8.5 A8.5 8.5 0 0 1 19.5 8.5 C11.8 8.5 9.0 7.7 4.5 0Z" fill="url(#gPet)"/><path transform="rotate(67.5)" clip-path="url(#w8)" d="M4.5 0 C9.0 -7.7 11.8 -8.5 19.5 -8.5 A8.5 8.5 0 0 1 19.5 8.5 C11.8 8.5 9.0 7.7 4.5 0Z" fill="url(#gPet)"/><path transform="rotate(112.5)" clip-path="url(#w8)" d="M4.5 0 C9.0 -7.7 11.8 -8.5 19.5 -8.5 A8.5 8.5 0 0 1 19.5 8.5 C11.8 8.5 9.0 7.7 4.5 0Z" fill="url(#gPet)"/><path transform="rotate(157.5)" clip-path="url(#w8)" d="M4.5 0 C9.0 -7.7 11.8 -8.5 19.5 -8.5 A8.5 8.5 0 0 1 19.5 8.5 C11.8 8.5 9.0 7.7 4.5 0Z" fill="url(#gPet)"/><path transform="rotate(202.5)" clip-path="url(#w8)" d="M4.5 0 C9.0 -7.7 11.8 -8.5 19.5 -8.5 A8.5 8.5 0 0 1 19.5 8.5 C11.8 8.5 9.0 7.7 4.5 0Z" fill="url(#gPet)"/><path transform="rotate(247.5)" clip-path="url(#w8)" d="M4.5 0 C9.0 -7.7 11.8 -8.5 19.5 -8.5 A8.5 8.5 0 0 1 19.5 8.5 C11.8 8.5 9.0 7.7 4.5 0Z" fill="url(#gPet)"/><path transform="rotate(-90.0)" d="M8.1 0H22.2" stroke="#33332a" stroke-width="1"/><path transform="rotate(-45.0)" d="M8.1 0H22.2" stroke="#33332a" stroke-width="1"/><path transform="rotate(0.0)" d="M8.1 0H22.2" stroke="#33332a" stroke-width="1"/><path transform="rotate(45.0)" d="M8.1 0H22.2" stroke="#33332a" stroke-width="1"/><path transform="rotate(90.0)" d="M8.1 0H22.2" stroke="#33332a" stroke-width="1"/><path transform="rotate(135.0)" d="M8.1 0H22.2" stroke="#33332a" stroke-width="1"/><path transform="rotate(180.0)" d="M8.1 0H22.2" stroke="#33332a" stroke-width="1"/><path transform="rotate(225.0)" d="M8.1 0H22.2" stroke="#33332a" stroke-width="1"/><clipPath id="fc6800"><path transform="rotate(-67.5)" d="M4.5 0 C9.0 -7.7 11.8 -8.5 19.5 -8.5 A8.5 8.5 0 0 1 19.5 8.5 C11.8 8.5 9.0 7.7 4.5 0Z"/><path transform="rotate(-22.5)" d="M4.5 0 C9.0 -7.7 11.8 -8.5 19.5 -8.5 A8.5 8.5 0 0 1 19.5 8.5 C11.8 8.5 9.0 7.7 4.5 0Z"/><path transform="rotate(22.5)" d="M4.5 0 C9.0 -7.7 11.8 -8.5 19.5 -8.5 A8.5 8.5 0 0 1 19.5 8.5 C11.8 8.5 9.0 7.7 4.5 0Z"/><path transform="rotate(67.5)" d="M4.5 0 C9.0 -7.7 11.8 -8.5 19.5 -8.5 A8.5 8.5 0 0 1 19.5 8.5 C11.8 8.5 9.0 7.7 4.5 0Z"/><path transform="rotate(112.5)" d="M4.5 0 C9.0 -7.7 11.8 -8.5 19.5 -8.5 A8.5 8.5 0 0 1 19.5 8.5 C11.8 8.5 9.0 7.7 4.5 0Z"/><path transform="rotate(157.5)" d="M4.5 0 C9.0 -7.7 11.8 -8.5 19.5 -8.5 A8.5 8.5 0 0 1 19.5 8.5 C11.8 8.5 9.0 7.7 4.5 0Z"/><path transform="rotate(202.5)" d="M4.5 0 C9.0 -7.7 11.8 -8.5 19.5 -8.5 A8.5 8.5 0 0 1 19.5 8.5 C11.8 8.5 9.0 7.7 4.5 0Z"/><path transform="rotate(247.5)" d="M4.5 0 C9.0 -7.7 11.8 -8.5 19.5 -8.5 A8.5 8.5 0 0 1 19.5 8.5 C11.8 8.5 9.0 7.7 4.5 0Z"/></clipPath><circle r="28.5" fill="url(#gFlo)" clip-path="url(#fc6800)"/><circle r="9.0" fill="#8a8a8a" stroke="#555" stroke-width=".8"/><circle r="7.2" fill="url(#gSph)"/></g>
<g transform="translate(712.4 415.4)"><path transform="rotate(-67.5)" d="M3.5 0 C6.8 -5.8 8.8 -6.4 14.6 -6.4 A6.4 6.4 0 0 1 14.6 6.4 C8.8 6.4 6.8 5.8 3.5 0Z" fill="#1c1c10" stroke="#1c1c10" stroke-width="1.6"/><path transform="rotate(-22.5)" d="M3.5 0 C6.8 -5.8 8.8 -6.4 14.6 -6.4 A6.4 6.4 0 0 1 14.6 6.4 C8.8 6.4 6.8 5.8 3.5 0Z" fill="#1c1c10" stroke="#1c1c10" stroke-width="1.6"/><path transform="rotate(22.5)" d="M3.5 0 C6.8 -5.8 8.8 -6.4 14.6 -6.4 A6.4 6.4 0 0 1 14.6 6.4 C8.8 6.4 6.8 5.8 3.5 0Z" fill="#1c1c10" stroke="#1c1c10" stroke-width="1.6"/><path transform="rotate(67.5)" d="M3.5 0 C6.8 -5.8 8.8 -6.4 14.6 -6.4 A6.4 6.4 0 0 1 14.6 6.4 C8.8 6.4 6.8 5.8 3.5 0Z" fill="#1c1c10" stroke="#1c1c10" stroke-width="1.6"/><path transform="rotate(112.5)" d="M3.5 0 C6.8 -5.8 8.8 -6.4 14.6 -6.4 A6.4 6.4 0 0 1 14.6 6.4 C8.8 6.4 6.8 5.8 3.5 0Z" fill="#1c1c10" stroke="#1c1c10" stroke-width="1.6"/><path transform="rotate(157.5)" d="M3.5 0 C6.8 -5.8 8.8 -6.4 14.6 -6.4 A6.4 6.4 0 0 1 14.6 6.4 C8.8 6.4 6.8 5.8 3.5 0Z" fill="#1c1c10" stroke="#1c1c10" stroke-width="1.6"/><path transform="rotate(202.5)" d="M3.5 0 C6.8 -5.8 8.8 -6.4 14.6 -6.4 A6.4 6.4 0 0 1 14.6 6.4 C8.8 6.4 6.8 5.8 3.5 0Z" fill="#1c1c10" stroke="#1c1c10" stroke-width="1.6"/><path transform="rotate(247.5)" d="M3.5 0 C6.8 -5.8 8.8 -6.4 14.6 -6.4 A6.4 6.4 0 0 1 14.6 6.4 C8.8 6.4 6.8 5.8 3.5 0Z" fill="#1c1c10" stroke="#1c1c10" stroke-width="1.6"/><path transform="rotate(-67.5)" clip-path="url(#w8)" d="M3.5 0 C6.8 -5.8 8.8 -6.4 14.6 -6.4 A6.4 6.4 0 0 1 14.6 6.4 C8.8 6.4 6.8 5.8 3.5 0Z" fill="url(#gPet)"/><path transform="rotate(-22.5)" clip-path="url(#w8)" d="M3.5 0 C6.8 -5.8 8.8 -6.4 14.6 -6.4 A6.4 6.4 0 0 1 14.6 6.4 C8.8 6.4 6.8 5.8 3.5 0Z" fill="url(#gPet)"/><path transform="rotate(22.5)" clip-path="url(#w8)" d="M3.5 0 C6.8 -5.8 8.8 -6.4 14.6 -6.4 A6.4 6.4 0 0 1 14.6 6.4 C8.8 6.4 6.8 5.8 3.5 0Z" fill="url(#gPet)"/><path transform="rotate(67.5)" clip-path="url(#w8)" d="M3.5 0 C6.8 -5.8 8.8 -6.4 14.6 -6.4 A6.4 6.4 0 0 1 14.6 6.4 C8.8 6.4 6.8 5.8 3.5 0Z" fill="url(#gPet)"/><path transform="rotate(112.5)" clip-path="url(#w8)" d="M3.5 0 C6.8 -5.8 8.8 -6.4 14.6 -6.4 A6.4 6.4 0 0 1 14.6 6.4 C8.8 6.4 6.8 5.8 3.5 0Z" fill="url(#gPet)"/><path transform="rotate(157.5)" clip-path="url(#w8)" d="M3.5 0 C6.8 -5.8 8.8 -6.4 14.6 -6.4 A6.4 6.4 0 0 1 14.6 6.4 C8.8 6.4 6.8 5.8 3.5 0Z" fill="url(#gPet)"/><path transform="rotate(202.5)" clip-path="url(#w8)" d="M3.5 0 C6.8 -5.8 8.8 -6.4 14.6 -6.4 A6.4 6.4 0 0 1 14.6 6.4 C8.8 6.4 6.8 5.8 3.5 0Z" fill="url(#gPet)"/><path transform="rotate(247.5)" clip-path="url(#w8)" d="M3.5 0 C6.8 -5.8 8.8 -6.4 14.6 -6.4 A6.4 6.4 0 0 1 14.6 6.4 C8.8 6.4 6.8 5.8 3.5 0Z" fill="url(#gPet)"/><path transform="rotate(-90.0)" d="M6.3 0H16.6" stroke="#33332a" stroke-width="1"/><path transform="rotate(-45.0)" d="M6.3 0H16.6" stroke="#33332a" stroke-width="1"/><path transform="rotate(0.0)" d="M6.3 0H16.6" stroke="#33332a" stroke-width="1"/><path transform="rotate(45.0)" d="M6.3 0H16.6" stroke="#33332a" stroke-width="1"/><path transform="rotate(90.0)" d="M6.3 0H16.6" stroke="#33332a" stroke-width="1"/><path transform="rotate(135.0)" d="M6.3 0H16.6" stroke="#33332a" stroke-width="1"/><path transform="rotate(180.0)" d="M6.3 0H16.6" stroke="#33332a" stroke-width="1"/><path transform="rotate(225.0)" d="M6.3 0H16.6" stroke="#33332a" stroke-width="1"/><clipPath id="fc7124"><path transform="rotate(-67.5)" d="M3.5 0 C6.8 -5.8 8.8 -6.4 14.6 -6.4 A6.4 6.4 0 0 1 14.6 6.4 C8.8 6.4 6.8 5.8 3.5 0Z"/><path transform="rotate(-22.5)" d="M3.5 0 C6.8 -5.8 8.8 -6.4 14.6 -6.4 A6.4 6.4 0 0 1 14.6 6.4 C8.8 6.4 6.8 5.8 3.5 0Z"/><path transform="rotate(22.5)" d="M3.5 0 C6.8 -5.8 8.8 -6.4 14.6 -6.4 A6.4 6.4 0 0 1 14.6 6.4 C8.8 6.4 6.8 5.8 3.5 0Z"/><path transform="rotate(67.5)" d="M3.5 0 C6.8 -5.8 8.8 -6.4 14.6 -6.4 A6.4 6.4 0 0 1 14.6 6.4 C8.8 6.4 6.8 5.8 3.5 0Z"/><path transform="rotate(112.5)" d="M3.5 0 C6.8 -5.8 8.8 -6.4 14.6 -6.4 A6.4 6.4 0 0 1 14.6 6.4 C8.8 6.4 6.8 5.8 3.5 0Z"/><path transform="rotate(157.5)" d="M3.5 0 C6.8 -5.8 8.8 -6.4 14.6 -6.4 A6.4 6.4 0 0 1 14.6 6.4 C8.8 6.4 6.8 5.8 3.5 0Z"/><path transform="rotate(202.5)" d="M3.5 0 C6.8 -5.8 8.8 -6.4 14.6 -6.4 A6.4 6.4 0 0 1 14.6 6.4 C8.8 6.4 6.8 5.8 3.5 0Z"/><path transform="rotate(247.5)" d="M3.5 0 C6.8 -5.8 8.8 -6.4 14.6 -6.4 A6.4 6.4 0 0 1 14.6 6.4 C8.8 6.4 6.8 5.8 3.5 0Z"/></clipPath><circle r="21.5" fill="url(#gFlo)" clip-path="url(#fc7124)"/><circle r="7.0" fill="#8a8a8a" stroke="#555" stroke-width=".8"/><circle r="5.6" fill="url(#gSph)"/></g>
<g transform="translate(727.0 463.4)"><path transform="rotate(-67.5)" d="M3.0 0 C5.9 -5.0 7.7 -5.6 12.6 -5.6 A5.6 5.6 0 0 1 12.6 5.6 C7.7 5.6 5.9 5.0 3.0 0Z" fill="#1c1c10" stroke="#1c1c10" stroke-width="1.6"/><path transform="rotate(-22.5)" d="M3.0 0 C5.9 -5.0 7.7 -5.6 12.6 -5.6 A5.6 5.6 0 0 1 12.6 5.6 C7.7 5.6 5.9 5.0 3.0 0Z" fill="#1c1c10" stroke="#1c1c10" stroke-width="1.6"/><path transform="rotate(22.5)" d="M3.0 0 C5.9 -5.0 7.7 -5.6 12.6 -5.6 A5.6 5.6 0 0 1 12.6 5.6 C7.7 5.6 5.9 5.0 3.0 0Z" fill="#1c1c10" stroke="#1c1c10" stroke-width="1.6"/><path transform="rotate(67.5)" d="M3.0 0 C5.9 -5.0 7.7 -5.6 12.6 -5.6 A5.6 5.6 0 0 1 12.6 5.6 C7.7 5.6 5.9 5.0 3.0 0Z" fill="#1c1c10" stroke="#1c1c10" stroke-width="1.6"/><path transform="rotate(112.5)" d="M3.0 0 C5.9 -5.0 7.7 -5.6 12.6 -5.6 A5.6 5.6 0 0 1 12.6 5.6 C7.7 5.6 5.9 5.0 3.0 0Z" fill="#1c1c10" stroke="#1c1c10" stroke-width="1.6"/><path transform="rotate(157.5)" d="M3.0 0 C5.9 -5.0 7.7 -5.6 12.6 -5.6 A5.6 5.6 0 0 1 12.6 5.6 C7.7 5.6 5.9 5.0 3.0 0Z" fill="#1c1c10" stroke="#1c1c10" stroke-width="1.6"/><path transform="rotate(202.5)" d="M3.0 0 C5.9 -5.0 7.7 -5.6 12.6 -5.6 A5.6 5.6 0 0 1 12.6 5.6 C7.7 5.6 5.9 5.0 3.0 0Z" fill="#1c1c10" stroke="#1c1c10" stroke-width="1.6"/><path transform="rotate(247.5)" d="M3.0 0 C5.9 -5.0 7.7 -5.6 12.6 -5.6 A5.6 5.6 0 0 1 12.6 5.6 C7.7 5.6 5.9 5.0 3.0 0Z" fill="#1c1c10" stroke="#1c1c10" stroke-width="1.6"/><path transform="rotate(-67.5)" clip-path="url(#w8)" d="M3.0 0 C5.9 -5.0 7.7 -5.6 12.6 -5.6 A5.6 5.6 0 0 1 12.6 5.6 C7.7 5.6 5.9 5.0 3.0 0Z" fill="url(#gPet)"/><path transform="rotate(-22.5)" clip-path="url(#w8)" d="M3.0 0 C5.9 -5.0 7.7 -5.6 12.6 -5.6 A5.6 5.6 0 0 1 12.6 5.6 C7.7 5.6 5.9 5.0 3.0 0Z" fill="url(#gPet)"/><path transform="rotate(22.5)" clip-path="url(#w8)" d="M3.0 0 C5.9 -5.0 7.7 -5.6 12.6 -5.6 A5.6 5.6 0 0 1 12.6 5.6 C7.7 5.6 5.9 5.0 3.0 0Z" fill="url(#gPet)"/><path transform="rotate(67.5)" clip-path="url(#w8)" d="M3.0 0 C5.9 -5.0 7.7 -5.6 12.6 -5.6 A5.6 5.6 0 0 1 12.6 5.6 C7.7 5.6 5.9 5.0 3.0 0Z" fill="url(#gPet)"/><path transform="rotate(112.5)" clip-path="url(#w8)" d="M3.0 0 C5.9 -5.0 7.7 -5.6 12.6 -5.6 A5.6 5.6 0 0 1 12.6 5.6 C7.7 5.6 5.9 5.0 3.0 0Z" fill="url(#gPet)"/><path transform="rotate(157.5)" clip-path="url(#w8)" d="M3.0 0 C5.9 -5.0 7.7 -5.6 12.6 -5.6 A5.6 5.6 0 0 1 12.6 5.6 C7.7 5.6 5.9 5.0 3.0 0Z" fill="url(#gPet)"/><path transform="rotate(202.5)" clip-path="url(#w8)" d="M3.0 0 C5.9 -5.0 7.7 -5.6 12.6 -5.6 A5.6 5.6 0 0 1 12.6 5.6 C7.7 5.6 5.9 5.0 3.0 0Z" fill="url(#gPet)"/><path transform="rotate(247.5)" clip-path="url(#w8)" d="M3.0 0 C5.9 -5.0 7.7 -5.6 12.6 -5.6 A5.6 5.6 0 0 1 12.6 5.6 C7.7 5.6 5.9 5.0 3.0 0Z" fill="url(#gPet)"/><path transform="rotate(-90.0)" d="M5.4 0H14.4" stroke="#33332a" stroke-width="1"/><path transform="rotate(-45.0)" d="M5.4 0H14.4" stroke="#33332a" stroke-width="1"/><path transform="rotate(0.0)" d="M5.4 0H14.4" stroke="#33332a" stroke-width="1"/><path transform="rotate(45.0)" d="M5.4 0H14.4" stroke="#33332a" stroke-width="1"/><path transform="rotate(90.0)" d="M5.4 0H14.4" stroke="#33332a" stroke-width="1"/><path transform="rotate(135.0)" d="M5.4 0H14.4" stroke="#33332a" stroke-width="1"/><path transform="rotate(180.0)" d="M5.4 0H14.4" stroke="#33332a" stroke-width="1"/><path transform="rotate(225.0)" d="M5.4 0H14.4" stroke="#33332a" stroke-width="1"/><clipPath id="fc7270"><path transform="rotate(-67.5)" d="M3.0 0 C5.9 -5.0 7.7 -5.6 12.6 -5.6 A5.6 5.6 0 0 1 12.6 5.6 C7.7 5.6 5.9 5.0 3.0 0Z"/><path transform="rotate(-22.5)" d="M3.0 0 C5.9 -5.0 7.7 -5.6 12.6 -5.6 A5.6 5.6 0 0 1 12.6 5.6 C7.7 5.6 5.9 5.0 3.0 0Z"/><path transform="rotate(22.5)" d="M3.0 0 C5.9 -5.0 7.7 -5.6 12.6 -5.6 A5.6 5.6 0 0 1 12.6 5.6 C7.7 5.6 5.9 5.0 3.0 0Z"/><path transform="rotate(67.5)" d="M3.0 0 C5.9 -5.0 7.7 -5.6 12.6 -5.6 A5.6 5.6 0 0 1 12.6 5.6 C7.7 5.6 5.9 5.0 3.0 0Z"/><path transform="rotate(112.5)" d="M3.0 0 C5.9 -5.0 7.7 -5.6 12.6 -5.6 A5.6 5.6 0 0 1 12.6 5.6 C7.7 5.6 5.9 5.0 3.0 0Z"/><path transform="rotate(157.5)" d="M3.0 0 C5.9 -5.0 7.7 -5.6 12.6 -5.6 A5.6 5.6 0 0 1 12.6 5.6 C7.7 5.6 5.9 5.0 3.0 0Z"/><path transform="rotate(202.5)" d="M3.0 0 C5.9 -5.0 7.7 -5.6 12.6 -5.6 A5.6 5.6 0 0 1 12.6 5.6 C7.7 5.6 5.9 5.0 3.0 0Z"/><path transform="rotate(247.5)" d="M3.0 0 C5.9 -5.0 7.7 -5.6 12.6 -5.6 A5.6 5.6 0 0 1 12.6 5.6 C7.7 5.6 5.9 5.0 3.0 0Z"/></clipPath><circle r="18.7" fill="url(#gFlo)" clip-path="url(#fc7270)"/><circle r="6.0" fill="#8a8a8a" stroke="#555" stroke-width=".8"/><circle r="4.8" fill="url(#gSph)"/></g>
<g transform="translate(729.7 507.3)"><path transform="rotate(-72.0)" d="M2.2 0 C4.9 -3.4 7.6 -3.7 11.0 -3.7 A3.7 3.7 0 0 1 11.0 3.7 C7.6 3.7 4.9 3.4 2.2 0Z" fill="#1c1c10" stroke="#1c1c10" stroke-width="1.6"/><path transform="rotate(-36.0)" d="M2.2 0 C4.9 -3.4 7.6 -3.7 11.0 -3.7 A3.7 3.7 0 0 1 11.0 3.7 C7.6 3.7 4.9 3.4 2.2 0Z" fill="#1c1c10" stroke="#1c1c10" stroke-width="1.6"/><path transform="rotate(0.0)" d="M2.2 0 C4.9 -3.4 7.6 -3.7 11.0 -3.7 A3.7 3.7 0 0 1 11.0 3.7 C7.6 3.7 4.9 3.4 2.2 0Z" fill="#1c1c10" stroke="#1c1c10" stroke-width="1.6"/><path transform="rotate(36.0)" d="M2.2 0 C4.9 -3.4 7.6 -3.7 11.0 -3.7 A3.7 3.7 0 0 1 11.0 3.7 C7.6 3.7 4.9 3.4 2.2 0Z" fill="#1c1c10" stroke="#1c1c10" stroke-width="1.6"/><path transform="rotate(72.0)" d="M2.2 0 C4.9 -3.4 7.6 -3.7 11.0 -3.7 A3.7 3.7 0 0 1 11.0 3.7 C7.6 3.7 4.9 3.4 2.2 0Z" fill="#1c1c10" stroke="#1c1c10" stroke-width="1.6"/><path transform="rotate(108.0)" d="M2.2 0 C4.9 -3.4 7.6 -3.7 11.0 -3.7 A3.7 3.7 0 0 1 11.0 3.7 C7.6 3.7 4.9 3.4 2.2 0Z" fill="#1c1c10" stroke="#1c1c10" stroke-width="1.6"/><path transform="rotate(144.0)" d="M2.2 0 C4.9 -3.4 7.6 -3.7 11.0 -3.7 A3.7 3.7 0 0 1 11.0 3.7 C7.6 3.7 4.9 3.4 2.2 0Z" fill="#1c1c10" stroke="#1c1c10" stroke-width="1.6"/><path transform="rotate(180.0)" d="M2.2 0 C4.9 -3.4 7.6 -3.7 11.0 -3.7 A3.7 3.7 0 0 1 11.0 3.7 C7.6 3.7 4.9 3.4 2.2 0Z" fill="#1c1c10" stroke="#1c1c10" stroke-width="1.6"/><path transform="rotate(216.0)" d="M2.2 0 C4.9 -3.4 7.6 -3.7 11.0 -3.7 A3.7 3.7 0 0 1 11.0 3.7 C7.6 3.7 4.9 3.4 2.2 0Z" fill="#1c1c10" stroke="#1c1c10" stroke-width="1.6"/><path transform="rotate(252.0)" d="M2.2 0 C4.9 -3.4 7.6 -3.7 11.0 -3.7 A3.7 3.7 0 0 1 11.0 3.7 C7.6 3.7 4.9 3.4 2.2 0Z" fill="#1c1c10" stroke="#1c1c10" stroke-width="1.6"/><path transform="rotate(-72.0)" clip-path="url(#w10)" d="M2.2 0 C4.9 -3.4 7.6 -3.7 11.0 -3.7 A3.7 3.7 0 0 1 11.0 3.7 C7.6 3.7 4.9 3.4 2.2 0Z" fill="url(#gPet)"/><path transform="rotate(-36.0)" clip-path="url(#w10)" d="M2.2 0 C4.9 -3.4 7.6 -3.7 11.0 -3.7 A3.7 3.7 0 0 1 11.0 3.7 C7.6 3.7 4.9 3.4 2.2 0Z" fill="url(#gPet)"/><path transform="rotate(0.0)" clip-path="url(#w10)" d="M2.2 0 C4.9 -3.4 7.6 -3.7 11.0 -3.7 A3.7 3.7 0 0 1 11.0 3.7 C7.6 3.7 4.9 3.4 2.2 0Z" fill="url(#gPet)"/><path transform="rotate(36.0)" clip-path="url(#w10)" d="M2.2 0 C4.9 -3.4 7.6 -3.7 11.0 -3.7 A3.7 3.7 0 0 1 11.0 3.7 C7.6 3.7 4.9 3.4 2.2 0Z" fill="url(#gPet)"/><path transform="rotate(72.0)" clip-path="url(#w10)" d="M2.2 0 C4.9 -3.4 7.6 -3.7 11.0 -3.7 A3.7 3.7 0 0 1 11.0 3.7 C7.6 3.7 4.9 3.4 2.2 0Z" fill="url(#gPet)"/><path transform="rotate(108.0)" clip-path="url(#w10)" d="M2.2 0 C4.9 -3.4 7.6 -3.7 11.0 -3.7 A3.7 3.7 0 0 1 11.0 3.7 C7.6 3.7 4.9 3.4 2.2 0Z" fill="url(#gPet)"/><path transform="rotate(144.0)" clip-path="url(#w10)" d="M2.2 0 C4.9 -3.4 7.6 -3.7 11.0 -3.7 A3.7 3.7 0 0 1 11.0 3.7 C7.6 3.7 4.9 3.4 2.2 0Z" fill="url(#gPet)"/><path transform="rotate(180.0)" clip-path="url(#w10)" d="M2.2 0 C4.9 -3.4 7.6 -3.7 11.0 -3.7 A3.7 3.7 0 0 1 11.0 3.7 C7.6 3.7 4.9 3.4 2.2 0Z" fill="url(#gPet)"/><path transform="rotate(216.0)" clip-path="url(#w10)" d="M2.2 0 C4.9 -3.4 7.6 -3.7 11.0 -3.7 A3.7 3.7 0 0 1 11.0 3.7 C7.6 3.7 4.9 3.4 2.2 0Z" fill="url(#gPet)"/><path transform="rotate(252.0)" clip-path="url(#w10)" d="M2.2 0 C4.9 -3.4 7.6 -3.7 11.0 -3.7 A3.7 3.7 0 0 1 11.0 3.7 C7.6 3.7 4.9 3.4 2.2 0Z" fill="url(#gPet)"/><path transform="rotate(-90.0)" d="M4.0 0H12.0" stroke="#33332a" stroke-width="1"/><path transform="rotate(-54.0)" d="M4.0 0H12.0" stroke="#33332a" stroke-width="1"/><path transform="rotate(-18.0)" d="M4.0 0H12.0" stroke="#33332a" stroke-width="1"/><path transform="rotate(18.0)" d="M4.0 0H12.0" stroke="#33332a" stroke-width="1"/><path transform="rotate(54.0)" d="M4.0 0H12.0" stroke="#33332a" stroke-width="1"/><path transform="rotate(90.0)" d="M4.0 0H12.0" stroke="#33332a" stroke-width="1"/><path transform="rotate(126.0)" d="M4.0 0H12.0" stroke="#33332a" stroke-width="1"/><path transform="rotate(162.0)" d="M4.0 0H12.0" stroke="#33332a" stroke-width="1"/><path transform="rotate(198.0)" d="M4.0 0H12.0" stroke="#33332a" stroke-width="1"/><path transform="rotate(234.0)" d="M4.0 0H12.0" stroke="#33332a" stroke-width="1"/><clipPath id="fc7297"><path transform="rotate(-72.0)" d="M2.2 0 C4.9 -3.4 7.6 -3.7 11.0 -3.7 A3.7 3.7 0 0 1 11.0 3.7 C7.6 3.7 4.9 3.4 2.2 0Z"/><path transform="rotate(-36.0)" d="M2.2 0 C4.9 -3.4 7.6 -3.7 11.0 -3.7 A3.7 3.7 0 0 1 11.0 3.7 C7.6 3.7 4.9 3.4 2.2 0Z"/><path transform="rotate(0.0)" d="M2.2 0 C4.9 -3.4 7.6 -3.7 11.0 -3.7 A3.7 3.7 0 0 1 11.0 3.7 C7.6 3.7 4.9 3.4 2.2 0Z"/><path transform="rotate(36.0)" d="M2.2 0 C4.9 -3.4 7.6 -3.7 11.0 -3.7 A3.7 3.7 0 0 1 11.0 3.7 C7.6 3.7 4.9 3.4 2.2 0Z"/><path transform="rotate(72.0)" d="M2.2 0 C4.9 -3.4 7.6 -3.7 11.0 -3.7 A3.7 3.7 0 0 1 11.0 3.7 C7.6 3.7 4.9 3.4 2.2 0Z"/><path transform="rotate(108.0)" d="M2.2 0 C4.9 -3.4 7.6 -3.7 11.0 -3.7 A3.7 3.7 0 0 1 11.0 3.7 C7.6 3.7 4.9 3.4 2.2 0Z"/><path transform="rotate(144.0)" d="M2.2 0 C4.9 -3.4 7.6 -3.7 11.0 -3.7 A3.7 3.7 0 0 1 11.0 3.7 C7.6 3.7 4.9 3.4 2.2 0Z"/><path transform="rotate(180.0)" d="M2.2 0 C4.9 -3.4 7.6 -3.7 11.0 -3.7 A3.7 3.7 0 0 1 11.0 3.7 C7.6 3.7 4.9 3.4 2.2 0Z"/><path transform="rotate(216.0)" d="M2.2 0 C4.9 -3.4 7.6 -3.7 11.0 -3.7 A3.7 3.7 0 0 1 11.0 3.7 C7.6 3.7 4.9 3.4 2.2 0Z"/><path transform="rotate(252.0)" d="M2.2 0 C4.9 -3.4 7.6 -3.7 11.0 -3.7 A3.7 3.7 0 0 1 11.0 3.7 C7.6 3.7 4.9 3.4 2.2 0Z"/></clipPath><circle r="15.2" fill="url(#gFlo)" clip-path="url(#fc7297)"/><circle r="4.5" fill="#8a8a8a" stroke="#555" stroke-width=".8"/><circle r="3.6" fill="url(#gSph)"/></g>
<g transform="translate(727.3 544.0)"><path transform="rotate(-72.0)" d="M1.8 0 C4.0 -2.8 6.3 -3.1 9.2 -3.1 A3.1 3.1 0 0 1 9.2 3.1 C6.3 3.1 4.0 2.8 1.8 0Z" fill="#1c1c10" stroke="#1c1c10" stroke-width="1.6"/><path transform="rotate(-36.0)" d="M1.8 0 C4.0 -2.8 6.3 -3.1 9.2 -3.1 A3.1 3.1 0 0 1 9.2 3.1 C6.3 3.1 4.0 2.8 1.8 0Z" fill="#1c1c10" stroke="#1c1c10" stroke-width="1.6"/><path transform="rotate(0.0)" d="M1.8 0 C4.0 -2.8 6.3 -3.1 9.2 -3.1 A3.1 3.1 0 0 1 9.2 3.1 C6.3 3.1 4.0 2.8 1.8 0Z" fill="#1c1c10" stroke="#1c1c10" stroke-width="1.6"/><path transform="rotate(36.0)" d="M1.8 0 C4.0 -2.8 6.3 -3.1 9.2 -3.1 A3.1 3.1 0 0 1 9.2 3.1 C6.3 3.1 4.0 2.8 1.8 0Z" fill="#1c1c10" stroke="#1c1c10" stroke-width="1.6"/><path transform="rotate(72.0)" d="M1.8 0 C4.0 -2.8 6.3 -3.1 9.2 -3.1 A3.1 3.1 0 0 1 9.2 3.1 C6.3 3.1 4.0 2.8 1.8 0Z" fill="#1c1c10" stroke="#1c1c10" stroke-width="1.6"/><path transform="rotate(108.0)" d="M1.8 0 C4.0 -2.8 6.3 -3.1 9.2 -3.1 A3.1 3.1 0 0 1 9.2 3.1 C6.3 3.1 4.0 2.8 1.8 0Z" fill="#1c1c10" stroke="#1c1c10" stroke-width="1.6"/><path transform="rotate(144.0)" d="M1.8 0 C4.0 -2.8 6.3 -3.1 9.2 -3.1 A3.1 3.1 0 0 1 9.2 3.1 C6.3 3.1 4.0 2.8 1.8 0Z" fill="#1c1c10" stroke="#1c1c10" stroke-width="1.6"/><path transform="rotate(180.0)" d="M1.8 0 C4.0 -2.8 6.3 -3.1 9.2 -3.1 A3.1 3.1 0 0 1 9.2 3.1 C6.3 3.1 4.0 2.8 1.8 0Z" fill="#1c1c10" stroke="#1c1c10" stroke-width="1.6"/><path transform="rotate(216.0)" d="M1.8 0 C4.0 -2.8 6.3 -3.1 9.2 -3.1 A3.1 3.1 0 0 1 9.2 3.1 C6.3 3.1 4.0 2.8 1.8 0Z" fill="#1c1c10" stroke="#1c1c10" stroke-width="1.6"/><path transform="rotate(252.0)" d="M1.8 0 C4.0 -2.8 6.3 -3.1 9.2 -3.1 A3.1 3.1 0 0 1 9.2 3.1 C6.3 3.1 4.0 2.8 1.8 0Z" fill="#1c1c10" stroke="#1c1c10" stroke-width="1.6"/><path transform="rotate(-72.0)" clip-path="url(#w10)" d="M1.8 0 C4.0 -2.8 6.3 -3.1 9.2 -3.1 A3.1 3.1 0 0 1 9.2 3.1 C6.3 3.1 4.0 2.8 1.8 0Z" fill="url(#gPet)"/><path transform="rotate(-36.0)" clip-path="url(#w10)" d="M1.8 0 C4.0 -2.8 6.3 -3.1 9.2 -3.1 A3.1 3.1 0 0 1 9.2 3.1 C6.3 3.1 4.0 2.8 1.8 0Z" fill="url(#gPet)"/><path transform="rotate(0.0)" clip-path="url(#w10)" d="M1.8 0 C4.0 -2.8 6.3 -3.1 9.2 -3.1 A3.1 3.1 0 0 1 9.2 3.1 C6.3 3.1 4.0 2.8 1.8 0Z" fill="url(#gPet)"/><path transform="rotate(36.0)" clip-path="url(#w10)" d="M1.8 0 C4.0 -2.8 6.3 -3.1 9.2 -3.1 A3.1 3.1 0 0 1 9.2 3.1 C6.3 3.1 4.0 2.8 1.8 0Z" fill="url(#gPet)"/><path transform="rotate(72.0)" clip-path="url(#w10)" d="M1.8 0 C4.0 -2.8 6.3 -3.1 9.2 -3.1 A3.1 3.1 0 0 1 9.2 3.1 C6.3 3.1 4.0 2.8 1.8 0Z" fill="url(#gPet)"/><path transform="rotate(108.0)" clip-path="url(#w10)" d="M1.8 0 C4.0 -2.8 6.3 -3.1 9.2 -3.1 A3.1 3.1 0 0 1 9.2 3.1 C6.3 3.1 4.0 2.8 1.8 0Z" fill="url(#gPet)"/><path transform="rotate(144.0)" clip-path="url(#w10)" d="M1.8 0 C4.0 -2.8 6.3 -3.1 9.2 -3.1 A3.1 3.1 0 0 1 9.2 3.1 C6.3 3.1 4.0 2.8 1.8 0Z" fill="url(#gPet)"/><path transform="rotate(180.0)" clip-path="url(#w10)" d="M1.8 0 C4.0 -2.8 6.3 -3.1 9.2 -3.1 A3.1 3.1 0 0 1 9.2 3.1 C6.3 3.1 4.0 2.8 1.8 0Z" fill="url(#gPet)"/><path transform="rotate(216.0)" clip-path="url(#w10)" d="M1.8 0 C4.0 -2.8 6.3 -3.1 9.2 -3.1 A3.1 3.1 0 0 1 9.2 3.1 C6.3 3.1 4.0 2.8 1.8 0Z" fill="url(#gPet)"/><path transform="rotate(252.0)" clip-path="url(#w10)" d="M1.8 0 C4.0 -2.8 6.3 -3.1 9.2 -3.1 A3.1 3.1 0 0 1 9.2 3.1 C6.3 3.1 4.0 2.8 1.8 0Z" fill="url(#gPet)"/><path transform="rotate(-90.0)" d="M3.2 0H10.1" stroke="#33332a" stroke-width="1"/><path transform="rotate(-54.0)" d="M3.2 0H10.1" stroke="#33332a" stroke-width="1"/><path transform="rotate(-18.0)" d="M3.2 0H10.1" stroke="#33332a" stroke-width="1"/><path transform="rotate(18.0)" d="M3.2 0H10.1" stroke="#33332a" stroke-width="1"/><path transform="rotate(54.0)" d="M3.2 0H10.1" stroke="#33332a" stroke-width="1"/><path transform="rotate(90.0)" d="M3.2 0H10.1" stroke="#33332a" stroke-width="1"/><path transform="rotate(126.0)" d="M3.2 0H10.1" stroke="#33332a" stroke-width="1"/><path transform="rotate(162.0)" d="M3.2 0H10.1" stroke="#33332a" stroke-width="1"/><path transform="rotate(198.0)" d="M3.2 0H10.1" stroke="#33332a" stroke-width="1"/><path transform="rotate(234.0)" d="M3.2 0H10.1" stroke="#33332a" stroke-width="1"/><clipPath id="fc7273"><path transform="rotate(-72.0)" d="M1.8 0 C4.0 -2.8 6.3 -3.1 9.2 -3.1 A3.1 3.1 0 0 1 9.2 3.1 C6.3 3.1 4.0 2.8 1.8 0Z"/><path transform="rotate(-36.0)" d="M1.8 0 C4.0 -2.8 6.3 -3.1 9.2 -3.1 A3.1 3.1 0 0 1 9.2 3.1 C6.3 3.1 4.0 2.8 1.8 0Z"/><path transform="rotate(0.0)" d="M1.8 0 C4.0 -2.8 6.3 -3.1 9.2 -3.1 A3.1 3.1 0 0 1 9.2 3.1 C6.3 3.1 4.0 2.8 1.8 0Z"/><path transform="rotate(36.0)" d="M1.8 0 C4.0 -2.8 6.3 -3.1 9.2 -3.1 A3.1 3.1 0 0 1 9.2 3.1 C6.3 3.1 4.0 2.8 1.8 0Z"/><path transform="rotate(72.0)" d="M1.8 0 C4.0 -2.8 6.3 -3.1 9.2 -3.1 A3.1 3.1 0 0 1 9.2 3.1 C6.3 3.1 4.0 2.8 1.8 0Z"/><path transform="rotate(108.0)" d="M1.8 0 C4.0 -2.8 6.3 -3.1 9.2 -3.1 A3.1 3.1 0 0 1 9.2 3.1 C6.3 3.1 4.0 2.8 1.8 0Z"/><path transform="rotate(144.0)" d="M1.8 0 C4.0 -2.8 6.3 -3.1 9.2 -3.1 A3.1 3.1 0 0 1 9.2 3.1 C6.3 3.1 4.0 2.8 1.8 0Z"/><path transform="rotate(180.0)" d="M1.8 0 C4.0 -2.8 6.3 -3.1 9.2 -3.1 A3.1 3.1 0 0 1 9.2 3.1 C6.3 3.1 4.0 2.8 1.8 0Z"/><path transform="rotate(216.0)" d="M1.8 0 C4.0 -2.8 6.3 -3.1 9.2 -3.1 A3.1 3.1 0 0 1 9.2 3.1 C6.3 3.1 4.0 2.8 1.8 0Z"/><path transform="rotate(252.0)" d="M1.8 0 C4.0 -2.8 6.3 -3.1 9.2 -3.1 A3.1 3.1 0 0 1 9.2 3.1 C6.3 3.1 4.0 2.8 1.8 0Z"/></clipPath><circle r="12.8" fill="url(#gFlo)" clip-path="url(#fc7273)"/><circle r="3.6" fill="#8a8a8a" stroke="#555" stroke-width=".8"/><circle r="2.9" fill="url(#gSph)"/></g>
<use href="#sq" x="761.4" y="400.3"/>
<use href="#sq" x="761.4" y="428.1"/>
<use href="#sq" x="761.4" y="456.2"/>
<use href="#sq" x="761.4" y="483.7"/>
<use href="#sq" x="761.4" y="511.2"/>
<use href="#sq" x="761.4" y="538.5"/>
<use href="#sq" x="761.4" y="566.3"/>
<use href="#sq" x="624.4" y="631.1"/>
<use href="#sq" x="652.2" y="631.1"/>
<use href="#sq" x="679.9" y="631.1"/>
<use href="#sq" x="707.2" y="631.1"/>
<circle cx="747.9" cy="612.3" r="14.5" fill="#f4f4f4" stroke="#1a1a0c" stroke-width="1.2"/>
<circle cx="747.9" cy="612.3" r="11.0" fill="url(#gSph)"/>
<circle cx="765.5" cy="632.0" r="8.3" fill="#f4f4f4" stroke="#1a1a0c" stroke-width="1.2"/>
<circle cx="765.5" cy="632.0" r="5.0" fill="url(#gSph)"/>
<circle cx="777.3" cy="644.8" r="6.0" fill="#f4f4f4" stroke="#1a1a0c" stroke-width="1.2"/>
<circle cx="777.3" cy="644.8" r="2.6" fill="url(#gSph)"/>
</svg>
<!--ART-END-->


<!-- RIGHT -->

<div class="abs" style="left:1093px;top:42px;width:1px;height:704px;background:#a0a0a0"></div>
<div class="abs" style="left:1094px;top:42px;width:2px;height:704px;background:#fbfbfb"></div>
<div class="abs" style="left:1365px;top:42px;width:1px;height:704px;background:#b4b4b4"></div>
<div class="bbar" style="top:44px">Vectors</div><div class="bbtn" style="top:45px"></div>
<div class="bbar" style="top:75px">Bitmaps</div><div class="bbtn" style="top:76px"></div>
<div class="bbar" style="top:106px">Reliefs</div><div class="bbtn" style="top:107px"></div>
<!-- right tabs -->
<div class="abs" style="left:1096px;top:721px;width:48px;height:25px;background:#f0f0f0;border-bottom-right-radius:5px"></div>
<div class="abs" style="left:1144px;top:721px;width:47px;height:24px;background:#f3f3f3;border:1px solid #b8b8b8;border-top-color:#c8c8c8;border-bottom-right-radius:5px;border-bottom-left-radius:3px"></div>
<div class="t" style="left:1103px;top:725px;font-size:12px;letter-spacing:-0.5px">Layers</div>
<div class="t" style="left:1151px;top:725px;font-size:12px">Add In</div>
<div class="abs" style="left:1094px;top:745px;width:272px;height:1px;background:#a8a8a8"></div>


<!-- BOTTOM -->
<div class="sw" style="left:333px;background:#ffffff"></div><div class="sw" style="left:368px;background:#000000"></div><div class="sw" style="left:403px;background:#00ffff"></div><div class="sw" style="left:438px;background:#3241dc"></div><div class="sw" style="left:473px;background:#5cbc52"></div><div class="sw" style="left:508px;background:#d81022"></div><div class="sw" style="left:543px;background:#a52fe0"></div><div class="sw" style="left:578px;background:#ffff80"></div><div class="sw" style="left:613px;background:#ada030"></div><div class="sw" style="left:648px;background:#ffcc14"></div><div class="sw" style="left:683px;background:#050505"></div><div class="sw" style="left:718px;background:#050505"></div><div class="sw" style="left:753px;background:#050505"></div><div class="sw" style="left:788px;background:#050505"></div><div class="sw" style="left:823px;background:#050505"></div><div class="sw" style="left:858px;background:#050505"></div><div class="sw" style="left:893px;background:#050505"></div><div class="sw" style="left:928px;background:#050505"></div><div class="sw" style="left:963px;background:#050505"></div><div class="sw" style="left:998px;background:#050505"></div><div class="sw" style="left:1033px;background:#050505"></div>
<div class="abs" style="left:297px;top:722px;width:26px;height:20px;background:#000"></div>
<div class="abs" style="left:283px;top:711px;width:25px;height:20px;background:#fff;border:1px solid #333;box-shadow:1px 1px 0 #fff"></div>
<svg class="abs" style="left:310px;top:709px" width="14" height="12"><rect x="1" y="1.500" width="7" height="5" rx="2" fill="none" stroke="#000"/><rect x="4.500" y="4.500" width="7" height="5" rx="2" fill="none" stroke="#000"/></svg>
<svg class="abs" style="left:1072px;top:706px" width="16" height="40"><path d="M4 11l4-4 4 4M4 29l4 4 4-4" stroke="#555" stroke-width="1.800" fill="none"/></svg>
<div class="abs" style="left:0;top:746px;width:1366px;height:21px;background:#f0f0f0"></div>
<div class="stbox" style="left:1023px;width:66px">X: 1118.006</div>
<div class="stbox" style="left:1092px;width:66px">Y: -500.109</div>
<div class="stbox" style="left:1161px;width:58px"></div>
<div class="stbox" style="left:1224px;width:71px"></div>
<div class="stbox" style="left:1298px;width:68px"></div>


</div>
</body>
</html>
